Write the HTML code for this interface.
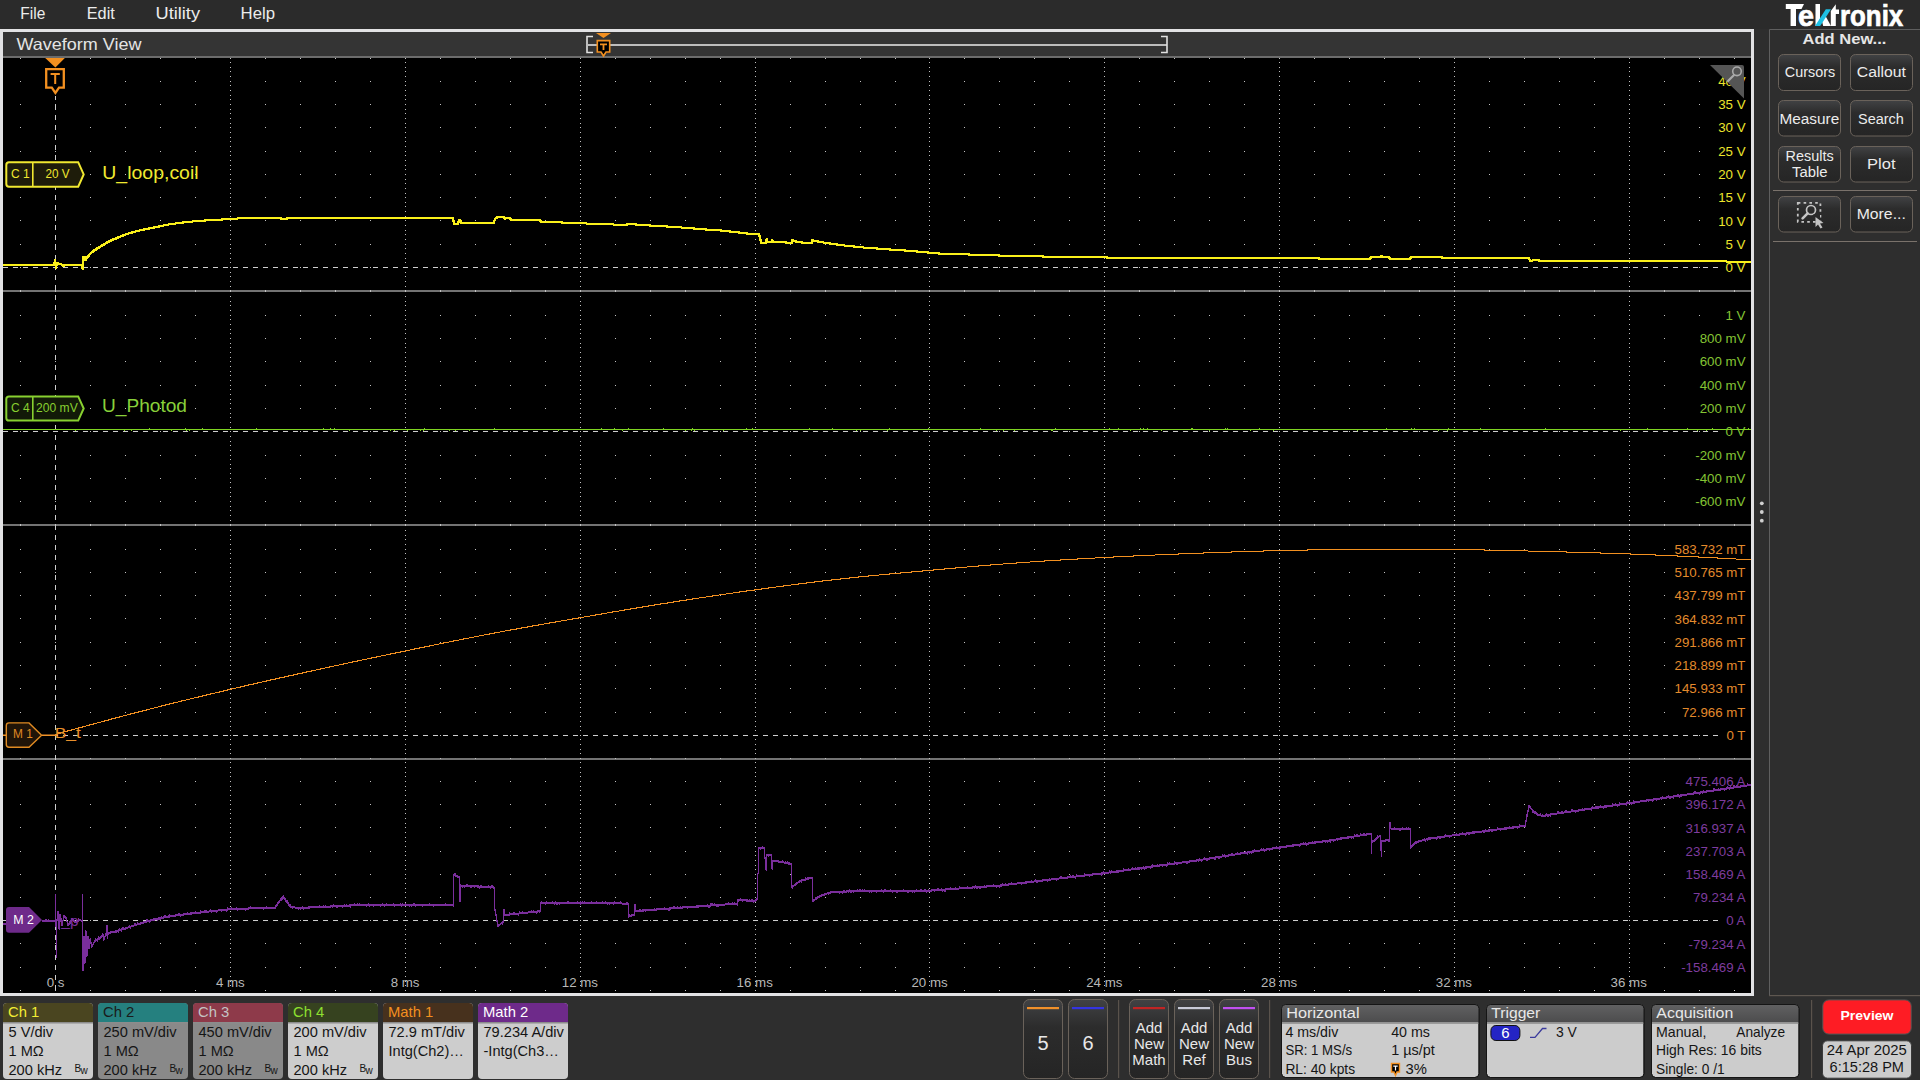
<!DOCTYPE html>
<html><head><meta charset="utf-8"><title>Waveform View</title>
<style>
html,body{margin:0;padding:0;width:1920px;height:1080px;overflow:hidden;background:#2e2e2e;}
svg{display:block;font-family:"Liberation Sans", sans-serif;}
</style></head><body>
<svg width="1920" height="1080" viewBox="0 0 1920 1080">
<rect x="0" y="0" width="1920" height="1080" fill="#2e2e2e"/>
<rect x="0" y="0" width="1920" height="29" fill="#2b2b2b"/>
<text x="20.3" y="19.2" font-size="16.00" fill="#ececec" textLength="25.0" lengthAdjust="spacingAndGlyphs">File</text>
<text x="86.7" y="19.2" font-size="16.00" fill="#ececec" textLength="28.1" lengthAdjust="spacingAndGlyphs">Edit</text>
<text x="155.5" y="19.2" font-size="16.00" fill="#ececec" textLength="44.5" lengthAdjust="spacingAndGlyphs">Utility</text>
<text x="240.6" y="19.2" font-size="16.00" fill="#ececec" textLength="34.4" lengthAdjust="spacingAndGlyphs">Help</text>
<rect x="0" y="29" width="1754" height="967" fill="#e2e2e4"/>
<rect x="3" y="32" width="1748" height="24" fill="#343434"/>
<rect x="3" y="56" width="1748" height="2" fill="#6c6c6c"/>
<rect x="3" y="58" width="1748" height="935" fill="#000"/>
<text x="16.4" y="50.2" font-size="16.50" fill="#e4e4e4" textLength="125.0" lengthAdjust="spacingAndGlyphs">Waveform View</text>
<path d="M593 36.5 H587 V52.5 H593" fill="none" stroke="#e0e0e0" stroke-width="1.6"/>
<rect x="587" y="44" width="580" height="2" fill="#bdbdbd"/>
<path d="M1161 36.5 H1167 V52.5 H1161" fill="none" stroke="#e0e0e0" stroke-width="1.6"/>
<path d="M596 33 L611 33 L603.5 38 Z" fill="#f39020"/>
<path d="M597.3 40.6 H609.7 V52 H606 L603.5 56 L601 52 H597.3 Z" fill="#000" stroke="#f39020" stroke-width="1.6"/>
<path d="M600 43.5 H607 V45.2 H604.4 V50 H602.6 V45.2 H600 Z" fill="#f39020"/>
<rect x="3" y="290" width="1748" height="2" fill="#737373"/>
<rect x="3" y="524" width="1748" height="2" fill="#737373"/>
<rect x="3" y="758" width="1748" height="2" fill="#737373"/>
<path d="M1769.5 996 V29.5 H1920" fill="none" stroke="#5f5f5f" stroke-width="1"/>
<rect x="1769" y="995" width="151" height="1.2" fill="#5e5750"/>
<circle cx="1761.8" cy="503.3" r="1.9" fill="#d0d0d0"/>
<circle cx="1761.8" cy="512.0" r="1.9" fill="#d0d0d0"/>
<circle cx="1761.8" cy="520.7" r="1.9" fill="#d0d0d0"/>
<g fill="#ffffff"><path d="M1785.8 4 H1804 L1801.5 9.1 H1796 V25.9 H1790.6 V9.1 H1785.8 Z"/><path d="M1815.5 4 H1820 V19 L1816.5 25.9 H1815.5 Z"/><path d="M1821.2 18.2 L1824.3 13.8 L1831 25.9 H1823.2 Z"/><path d="M1830.8 11 L1835.8 4.2 V9.4 H1839 V14 H1835.8 V25.9 H1830.8 Z"/></g><path d="M1815 25.9 H1820.2 L1831 9.3 H1825.8 Z" fill="#1ec0e4"/>
<text x="1797.9" y="25.9" font-size="30.00" fill="#ffffff" textLength="16.0" lengthAdjust="spacingAndGlyphs" font-weight="bold" stroke="#fff" stroke-width="0.7">e</text>
<text x="1840.0" y="25.9" font-size="30.00" fill="#ffffff" textLength="63.2" lengthAdjust="spacingAndGlyphs" font-weight="bold" stroke="#fff" stroke-width="0.7">ronix</text>
<text x="1802.6" y="43.5" font-size="15.00" fill="#e6e6e6" textLength="83.8" lengthAdjust="spacingAndGlyphs" font-weight="bold">Add New...</text>
<defs><linearGradient id="bg" x1="0" y1="0" x2="0" y2="1"><stop offset="0" stop-color="#414244"/><stop offset="0.35" stop-color="#2c2c2c"/><stop offset="1" stop-color="#252525"/></linearGradient><linearGradient id="hg" x1="0" y1="0" x2="0" y2="1"><stop offset="0" stop-color="#616162"/><stop offset="1" stop-color="#4c4c4d"/></linearGradient></defs>
<rect x="1778.5" y="54.5" width="62.0" height="36.0" rx="5" fill="url(#bg)" stroke="#6a625a" stroke-width="1"/>
<rect x="1850.5" y="54.5" width="62.0" height="36.0" rx="5" fill="url(#bg)" stroke="#6a625a" stroke-width="1"/>
<rect x="1778.5" y="100.5" width="62.0" height="35.5" rx="5" fill="url(#bg)" stroke="#6a625a" stroke-width="1"/>
<rect x="1850.5" y="100.5" width="62.0" height="35.5" rx="5" fill="url(#bg)" stroke="#6a625a" stroke-width="1"/>
<rect x="1778.5" y="146.5" width="62.0" height="35.5" rx="5" fill="url(#bg)" stroke="#6a625a" stroke-width="1"/>
<rect x="1850.5" y="146.5" width="62.0" height="35.5" rx="5" fill="url(#bg)" stroke="#6a625a" stroke-width="1"/>
<rect x="1778.5" y="196.5" width="62.0" height="35.5" rx="5" fill="url(#bg)" stroke="#6a625a" stroke-width="1"/>
<rect x="1850.5" y="196.5" width="62.0" height="35.5" rx="5" fill="url(#bg)" stroke="#6a625a" stroke-width="1"/>
<text x="1784.8" y="77.0" font-size="15.50" fill="#ececec" textLength="50.4" lengthAdjust="spacingAndGlyphs">Cursors</text>
<text x="1856.8" y="77.0" font-size="15.50" fill="#ececec" textLength="49.0" lengthAdjust="spacingAndGlyphs">Callout</text>
<text x="1779.4" y="123.6" font-size="15.50" fill="#ececec" textLength="59.8" lengthAdjust="spacingAndGlyphs">Measure</text>
<text x="1858.0" y="123.6" font-size="15.50" fill="#ececec" textLength="45.9" lengthAdjust="spacingAndGlyphs">Search</text>
<text x="1785.5" y="161.0" font-size="15.50" fill="#ececec" textLength="48.1" lengthAdjust="spacingAndGlyphs">Results</text>
<text x="1792.0" y="177.0" font-size="15.50" fill="#ececec" textLength="35.5" lengthAdjust="spacingAndGlyphs">Table</text>
<text x="1867.0" y="169.0" font-size="15.50" fill="#ececec" textLength="28.5" lengthAdjust="spacingAndGlyphs">Plot</text>
<text x="1856.7" y="219.4" font-size="15.50" fill="#ececec" textLength="49.1" lengthAdjust="spacingAndGlyphs">More...</text>
<rect x="1773" y="190" width="144" height="1" fill="#7a726b"/>
<rect x="1773" y="241" width="144" height="1" fill="#7a726b"/>
<rect x="1797.8" y="202.8" width="22.6" height="19" fill="none" stroke="#c4c4c4" stroke-width="1.8" stroke-dasharray="2.6 3.2"/>
<circle cx="1811" cy="210" r="4.5" fill="none" stroke="#c4c4c4" stroke-width="1.7"/>
<line x1="1807.6" y1="213.4" x2="1802.6" y2="218.4" stroke="#c4c4c4" stroke-width="2.6" stroke-linecap="round"/>
<rect x="1813" y="214.5" width="7" height="4" fill="#2a2a2a"/>
<path d="M1815.5 217 L1815.5 227 L1818 224.5 L1820.5 228.5 L1822.5 227.5 L1820 223.5 L1823.5 223 Z" fill="#c4c4c4"/>
<path d="M7.0 1003 H89.0 Q93.0 1003 93.0 1007 V1075 Q93.0 1079 89.0 1079 H7.0 Q3.0 1079 3.0 1075 V1007 Q3.0 1003 7.0 1003 Z" fill="#cdcdcd"/><path d="M7.0 1003 H89.0 Q93.0 1003 93.0 1007 V1022 H3.0 V1007 Q3.0 1003 7.0 1003 Z" fill="#4a4520"/><rect x="3.0" y="1022" width="90.0" height="1.5" fill="#8c8c8c"/><text x="8.0" y="1017.0" font-size="14.80" fill="#f2ee34">Ch 1</text><text x="8.5" y="1036.7" font-size="14.60" fill="#151515">5 V/div</text><text x="8.5" y="1055.7" font-size="14.60" fill="#151515">1 MΩ</text><text x="8.5" y="1074.7" font-size="14.60" fill="#151515">200 kHz</text><text x="74.5" y="1072.0" font-size="10.00" fill="#151515">B</text><text x="80.5" y="1074.0" font-size="10.00" fill="#151515">w</text>
<path d="M102.0 1003 H184.0 Q188.0 1003 188.0 1007 V1075 Q188.0 1079 184.0 1079 H102.0 Q98.0 1079 98.0 1075 V1007 Q98.0 1003 102.0 1003 Z" fill="#898989"/><path d="M102.0 1003 H184.0 Q188.0 1003 188.0 1007 V1022 H98.0 V1007 Q98.0 1003 102.0 1003 Z" fill="#25807f"/><rect x="98.0" y="1022" width="90.0" height="1.5" fill="#8c8c8c"/><text x="103.0" y="1017.0" font-size="14.80" fill="#1a1a1a">Ch 2</text><text x="103.5" y="1036.7" font-size="14.60" fill="#151515">250 mV/div</text><text x="103.5" y="1055.7" font-size="14.60" fill="#151515">1 MΩ</text><text x="103.5" y="1074.7" font-size="14.60" fill="#151515">200 kHz</text><text x="169.5" y="1072.0" font-size="10.00" fill="#151515">B</text><text x="175.5" y="1074.0" font-size="10.00" fill="#151515">w</text>
<path d="M197.0 1003 H279.0 Q283.0 1003 283.0 1007 V1075 Q283.0 1079 279.0 1079 H197.0 Q193.0 1079 193.0 1075 V1007 Q193.0 1003 197.0 1003 Z" fill="#898989"/><path d="M197.0 1003 H279.0 Q283.0 1003 283.0 1007 V1022 H193.0 V1007 Q193.0 1003 197.0 1003 Z" fill="#8e3a4a"/><rect x="193.0" y="1022" width="90.0" height="1.5" fill="#8c8c8c"/><text x="198.0" y="1017.0" font-size="14.80" fill="#c4c4c4">Ch 3</text><text x="198.5" y="1036.7" font-size="14.60" fill="#151515">450 mV/div</text><text x="198.5" y="1055.7" font-size="14.60" fill="#151515">1 MΩ</text><text x="198.5" y="1074.7" font-size="14.60" fill="#151515">200 kHz</text><text x="264.5" y="1072.0" font-size="10.00" fill="#151515">B</text><text x="270.5" y="1074.0" font-size="10.00" fill="#151515">w</text>
<path d="M292.0 1003 H374.0 Q378.0 1003 378.0 1007 V1075 Q378.0 1079 374.0 1079 H292.0 Q288.0 1079 288.0 1075 V1007 Q288.0 1003 292.0 1003 Z" fill="#cdcdcd"/><path d="M292.0 1003 H374.0 Q378.0 1003 378.0 1007 V1022 H288.0 V1007 Q288.0 1003 292.0 1003 Z" fill="#36421f"/><rect x="288.0" y="1022" width="90.0" height="1.5" fill="#8c8c8c"/><text x="293.0" y="1017.0" font-size="14.80" fill="#8ee030">Ch 4</text><text x="293.5" y="1036.7" font-size="14.60" fill="#151515">200 mV/div</text><text x="293.5" y="1055.7" font-size="14.60" fill="#151515">1 MΩ</text><text x="293.5" y="1074.7" font-size="14.60" fill="#151515">200 kHz</text><text x="359.5" y="1072.0" font-size="10.00" fill="#151515">B</text><text x="365.5" y="1074.0" font-size="10.00" fill="#151515">w</text>
<path d="M387.0 1003 H469.0 Q473.0 1003 473.0 1007 V1075 Q473.0 1079 469.0 1079 H387.0 Q383.0 1079 383.0 1075 V1007 Q383.0 1003 387.0 1003 Z" fill="#cdcdcd"/><path d="M387.0 1003 H469.0 Q473.0 1003 473.0 1007 V1022 H383.0 V1007 Q383.0 1003 387.0 1003 Z" fill="#47311d"/><rect x="383.0" y="1022" width="90.0" height="1.5" fill="#8c8c8c"/><text x="388.0" y="1017.0" font-size="14.80" fill="#f39020">Math 1</text><text x="388.5" y="1036.7" font-size="14.60" fill="#151515">72.9 mT/div</text><text x="388.5" y="1055.7" font-size="14.60" fill="#151515">Intg(Ch2)…</text>
<path d="M482.0 1003 H564.0 Q568.0 1003 568.0 1007 V1075 Q568.0 1079 564.0 1079 H482.0 Q478.0 1079 478.0 1075 V1007 Q478.0 1003 482.0 1003 Z" fill="#cdcdcd"/><path d="M482.0 1003 H564.0 Q568.0 1003 568.0 1007 V1022 H478.0 V1007 Q478.0 1003 482.0 1003 Z" fill="#6e2a8a"/><rect x="478.0" y="1022" width="90.0" height="1.5" fill="#8c8c8c"/><text x="483.0" y="1017.0" font-size="14.80" fill="#ffffff">Math 2</text><text x="483.5" y="1036.7" font-size="14.60" fill="#151515">79.234 A/div</text><text x="483.5" y="1055.7" font-size="14.60" fill="#151515">-Intg(Ch3…</text>
<rect x="1023.5" y="999.5" width="39.0" height="79" rx="6" fill="url(#bg)" stroke="#6a625a" stroke-width="1"/><rect x="1027.0" y="1007" width="32.0" height="2.2" fill="#f0902a"/>
<text x="1043.0" y="1050.0" font-size="20.00" fill="#e8e8e8" text-anchor="middle">5</text>
<rect x="1068.5" y="999.5" width="39.0" height="79" rx="6" fill="url(#bg)" stroke="#6a625a" stroke-width="1"/><rect x="1072.0" y="1007" width="32.0" height="2.2" fill="#3434e0"/>
<text x="1088.0" y="1050.0" font-size="20.00" fill="#e8e8e8" text-anchor="middle">6</text>
<rect x="1118" y="1000" width="1.2" height="78" fill="#5a534c"/>
<rect x="1129.5" y="999.5" width="39.0" height="79" rx="6" fill="url(#bg)" stroke="#6a625a" stroke-width="1"/><rect x="1133.0" y="1007" width="32.0" height="2.2" fill="#c02424"/>
<text x="1149.0" y="1033.0" font-size="15.00" fill="#e8e8e8" text-anchor="middle">Add</text>
<text x="1149.0" y="1049.0" font-size="15.00" fill="#e8e8e8" text-anchor="middle">New</text>
<text x="1149.0" y="1065.0" font-size="15.00" fill="#e8e8e8" text-anchor="middle">Math</text>
<rect x="1174.5" y="999.5" width="39.0" height="79" rx="6" fill="url(#bg)" stroke="#6a625a" stroke-width="1"/><rect x="1178.0" y="1007" width="32.0" height="2.2" fill="#c8cad8"/>
<text x="1194.0" y="1033.0" font-size="15.00" fill="#e8e8e8" text-anchor="middle">Add</text>
<text x="1194.0" y="1049.0" font-size="15.00" fill="#e8e8e8" text-anchor="middle">New</text>
<text x="1194.0" y="1065.0" font-size="15.00" fill="#e8e8e8" text-anchor="middle">Ref</text>
<rect x="1219.5" y="999.5" width="39.0" height="79" rx="6" fill="url(#bg)" stroke="#6a625a" stroke-width="1"/><rect x="1223.0" y="1007" width="32.0" height="2.2" fill="#c050f0"/>
<text x="1239.0" y="1033.0" font-size="15.00" fill="#e8e8e8" text-anchor="middle">Add</text>
<text x="1239.0" y="1049.0" font-size="15.00" fill="#e8e8e8" text-anchor="middle">New</text>
<text x="1239.0" y="1065.0" font-size="15.00" fill="#e8e8e8" text-anchor="middle">Bus</text>
<rect x="1269" y="1000" width="1.2" height="78" fill="#5a534c"/>
<rect x="1281.5" y="1004.5" width="197.5" height="73.0" rx="4" fill="#cccccc" stroke="#1c1c1c" stroke-width="1"/><path d="M1285.5 1004.5 H1475.0 Q1479.0 1004.5 1479.0 1008.5 V1022.5 H1281.5 V1008.5 Q1281.5 1004.5 1285.5 1004.5 Z" fill="url(#hg)"/><rect x="1281.5" y="1022.5" width="197.5" height="1.5" fill="#9a9a9a"/><rect x="1281.5" y="1004.5" width="197.5" height="73.0" rx="4" fill="none" stroke="#151515" stroke-width="1"/><text x="1286.3" y="1017.8" font-size="15.50" fill="#e8e8e8" textLength="73.2" lengthAdjust="spacingAndGlyphs">Horizontal</text>
<text x="1285.4" y="1036.6" font-size="15.00" fill="#151515" textLength="52.9" lengthAdjust="spacingAndGlyphs">4 ms/div</text>
<text x="1391.2" y="1036.6" font-size="15.00" fill="#151515" textLength="38.8" lengthAdjust="spacingAndGlyphs">40 ms</text>
<text x="1285.4" y="1055.4" font-size="15.00" fill="#151515" textLength="66.8" lengthAdjust="spacingAndGlyphs">SR: 1 MS/s</text>
<text x="1391.2" y="1055.4" font-size="15.00" fill="#151515" textLength="43.6" lengthAdjust="spacingAndGlyphs">1 µs/pt</text>
<text x="1285.4" y="1074.2" font-size="15.00" fill="#151515" textLength="69.7" lengthAdjust="spacingAndGlyphs">RL: 40 kpts</text>
<text x="1405.6" y="1074.2" font-size="15.00" fill="#151515" textLength="21.4" lengthAdjust="spacingAndGlyphs">3%</text>
<path d="M1391.5 1063.5 H1399.5 V1072 H1397 L1395.5 1075.5 L1394 1072 H1391.5 Z" fill="#000" stroke="#f39020" stroke-width="1.4"/>
<path d="M1393.3 1065.5 H1397.7 V1066.8 H1396.1 V1070.5 H1394.9 V1066.8 H1393.3 Z" fill="#fff"/>
<rect x="1486.5" y="1004.5" width="157.5" height="73.0" rx="4" fill="#cccccc" stroke="#1c1c1c" stroke-width="1"/><path d="M1490.5 1004.5 H1640.0 Q1644.0 1004.5 1644.0 1008.5 V1022.5 H1486.5 V1008.5 Q1486.5 1004.5 1490.5 1004.5 Z" fill="url(#hg)"/><rect x="1486.5" y="1022.5" width="157.5" height="1.5" fill="#9a9a9a"/><rect x="1486.5" y="1004.5" width="157.5" height="73.0" rx="4" fill="none" stroke="#151515" stroke-width="1"/><text x="1491.3" y="1017.8" font-size="15.50" fill="#e8e8e8" textLength="49.0" lengthAdjust="spacingAndGlyphs">Trigger</text>
<rect x="1490.9" y="1025.5" width="29" height="15" rx="5" fill="#2424c4" stroke="#111" stroke-width="1"/>
<text x="1505.4" y="1038.3" font-size="15.00" fill="#ffffff" text-anchor="middle">6</text>
<path d="M1530 1037.3 H1535 L1542.5 1028.5 H1546.5" fill="none" stroke="#3a3a9c" stroke-width="1.3"/>
<text x="1556.0" y="1036.6" font-size="15.00" fill="#151515" textLength="20.9" lengthAdjust="spacingAndGlyphs">3 V</text>
<rect x="1651.5" y="1004.5" width="147.5" height="73.0" rx="4" fill="#cccccc" stroke="#1c1c1c" stroke-width="1"/><path d="M1655.5 1004.5 H1795.0 Q1799.0 1004.5 1799.0 1008.5 V1022.5 H1651.5 V1008.5 Q1651.5 1004.5 1655.5 1004.5 Z" fill="url(#hg)"/><rect x="1651.5" y="1022.5" width="147.5" height="1.5" fill="#9a9a9a"/><rect x="1651.5" y="1004.5" width="147.5" height="73.0" rx="4" fill="none" stroke="#151515" stroke-width="1"/><text x="1656.3" y="1017.8" font-size="15.50" fill="#e8e8e8" textLength="77.0" lengthAdjust="spacingAndGlyphs">Acquisition</text>
<text x="1656.0" y="1036.6" font-size="15.00" fill="#151515" textLength="50.4" lengthAdjust="spacingAndGlyphs">Manual,</text>
<text x="1736.3" y="1036.6" font-size="15.00" fill="#151515" textLength="48.8" lengthAdjust="spacingAndGlyphs">Analyze</text>
<text x="1656.0" y="1055.4" font-size="15.00" fill="#151515" textLength="105.8" lengthAdjust="spacingAndGlyphs">High Res: 16 bits</text>
<text x="1656.0" y="1073.8" font-size="15.00" fill="#151515" textLength="68.6" lengthAdjust="spacingAndGlyphs">Single: 0 /1</text>
<rect x="1811" y="1000" width="1.2" height="78" fill="#5a534c"/>
<rect x="1822.8" y="999.9" width="88.4" height="34.2" rx="6" fill="#fe1c24" stroke="#555" stroke-width="1"/>
<text x="1840.5" y="1020.3" font-size="13.70" fill="#ffffff" textLength="53.0" lengthAdjust="spacingAndGlyphs" font-weight="bold">Preview</text>
<rect x="1822.5" y="1040.8" width="89" height="37.4" rx="5" fill="#cccccc" stroke="#3a3a3a" stroke-width="1"/>
<text x="1826.7" y="1054.5" font-size="15.00" fill="#151515" textLength="80.2" lengthAdjust="spacingAndGlyphs">24 Apr 2025</text>
<text x="1829.6" y="1071.6" font-size="15.00" fill="#151515" textLength="74.4" lengthAdjust="spacingAndGlyphs">6:15:28 PM</text>
<defs><clipPath id="gclip"><rect x="3" y="58" width="1748" height="935"/></clipPath></defs>
<g clip-path="url(#gclip)">
<path d="M20 58h1v1h-1zM55 58h1v1h-1zM90 58h1v1h-1zM125 58h1v1h-1zM160 58h1v1h-1zM195 58h1v1h-1zM230 58h1v1h-1zM265 58h1v1h-1zM300 58h1v1h-1zM335 58h1v1h-1zM370 58h1v1h-1zM405 58h1v1h-1zM440 58h1v1h-1zM475 58h1v1h-1zM510 58h1v1h-1zM545 58h1v1h-1zM580 58h1v1h-1zM615 58h1v1h-1zM650 58h1v1h-1zM685 58h1v1h-1zM720 58h1v1h-1zM755 58h1v1h-1zM790 58h1v1h-1zM825 58h1v1h-1zM860 58h1v1h-1zM895 58h1v1h-1zM929 58h1v1h-1zM964 58h1v1h-1zM999 58h1v1h-1zM1034 58h1v1h-1zM1069 58h1v1h-1zM1104 58h1v1h-1zM1139 58h1v1h-1zM1174 58h1v1h-1zM1209 58h1v1h-1zM1244 58h1v1h-1zM1279 58h1v1h-1zM1314 58h1v1h-1zM1349 58h1v1h-1zM1384 58h1v1h-1zM1419 58h1v1h-1zM1454 58h1v1h-1zM1489 58h1v1h-1zM1524 58h1v1h-1zM1559 58h1v1h-1zM1594 58h1v1h-1zM1629 58h1v1h-1zM1664 58h1v1h-1zM1699 58h1v1h-1zM1734 58h1v1h-1zM20 81h1v1h-1zM55 81h1v1h-1zM90 81h1v1h-1zM125 81h1v1h-1zM160 81h1v1h-1zM195 81h1v1h-1zM230 81h1v1h-1zM265 81h1v1h-1zM300 81h1v1h-1zM335 81h1v1h-1zM370 81h1v1h-1zM405 81h1v1h-1zM440 81h1v1h-1zM475 81h1v1h-1zM510 81h1v1h-1zM545 81h1v1h-1zM580 81h1v1h-1zM615 81h1v1h-1zM650 81h1v1h-1zM685 81h1v1h-1zM720 81h1v1h-1zM755 81h1v1h-1zM790 81h1v1h-1zM825 81h1v1h-1zM860 81h1v1h-1zM895 81h1v1h-1zM929 81h1v1h-1zM964 81h1v1h-1zM999 81h1v1h-1zM1034 81h1v1h-1zM1069 81h1v1h-1zM1104 81h1v1h-1zM1139 81h1v1h-1zM1174 81h1v1h-1zM1209 81h1v1h-1zM1244 81h1v1h-1zM1279 81h1v1h-1zM1314 81h1v1h-1zM1349 81h1v1h-1zM1384 81h1v1h-1zM1419 81h1v1h-1zM1454 81h1v1h-1zM1489 81h1v1h-1zM1524 81h1v1h-1zM1559 81h1v1h-1zM1594 81h1v1h-1zM1629 81h1v1h-1zM1664 81h1v1h-1zM1699 81h1v1h-1zM1734 81h1v1h-1zM20 104h1v1h-1zM55 104h1v1h-1zM90 104h1v1h-1zM125 104h1v1h-1zM160 104h1v1h-1zM195 104h1v1h-1zM230 104h1v1h-1zM265 104h1v1h-1zM300 104h1v1h-1zM335 104h1v1h-1zM370 104h1v1h-1zM405 104h1v1h-1zM440 104h1v1h-1zM475 104h1v1h-1zM510 104h1v1h-1zM545 104h1v1h-1zM580 104h1v1h-1zM615 104h1v1h-1zM650 104h1v1h-1zM685 104h1v1h-1zM720 104h1v1h-1zM755 104h1v1h-1zM790 104h1v1h-1zM825 104h1v1h-1zM860 104h1v1h-1zM895 104h1v1h-1zM929 104h1v1h-1zM964 104h1v1h-1zM999 104h1v1h-1zM1034 104h1v1h-1zM1069 104h1v1h-1zM1104 104h1v1h-1zM1139 104h1v1h-1zM1174 104h1v1h-1zM1209 104h1v1h-1zM1244 104h1v1h-1zM1279 104h1v1h-1zM1314 104h1v1h-1zM1349 104h1v1h-1zM1384 104h1v1h-1zM1419 104h1v1h-1zM1454 104h1v1h-1zM1489 104h1v1h-1zM1524 104h1v1h-1zM1559 104h1v1h-1zM1594 104h1v1h-1zM1629 104h1v1h-1zM1664 104h1v1h-1zM1699 104h1v1h-1zM1734 104h1v1h-1zM20 127h1v1h-1zM55 127h1v1h-1zM90 127h1v1h-1zM125 127h1v1h-1zM160 127h1v1h-1zM195 127h1v1h-1zM230 127h1v1h-1zM265 127h1v1h-1zM300 127h1v1h-1zM335 127h1v1h-1zM370 127h1v1h-1zM405 127h1v1h-1zM440 127h1v1h-1zM475 127h1v1h-1zM510 127h1v1h-1zM545 127h1v1h-1zM580 127h1v1h-1zM615 127h1v1h-1zM650 127h1v1h-1zM685 127h1v1h-1zM720 127h1v1h-1zM755 127h1v1h-1zM790 127h1v1h-1zM825 127h1v1h-1zM860 127h1v1h-1zM895 127h1v1h-1zM929 127h1v1h-1zM964 127h1v1h-1zM999 127h1v1h-1zM1034 127h1v1h-1zM1069 127h1v1h-1zM1104 127h1v1h-1zM1139 127h1v1h-1zM1174 127h1v1h-1zM1209 127h1v1h-1zM1244 127h1v1h-1zM1279 127h1v1h-1zM1314 127h1v1h-1zM1349 127h1v1h-1zM1384 127h1v1h-1zM1419 127h1v1h-1zM1454 127h1v1h-1zM1489 127h1v1h-1zM1524 127h1v1h-1zM1559 127h1v1h-1zM1594 127h1v1h-1zM1629 127h1v1h-1zM1664 127h1v1h-1zM1699 127h1v1h-1zM1734 127h1v1h-1zM20 151h1v1h-1zM55 151h1v1h-1zM90 151h1v1h-1zM125 151h1v1h-1zM160 151h1v1h-1zM195 151h1v1h-1zM230 151h1v1h-1zM265 151h1v1h-1zM300 151h1v1h-1zM335 151h1v1h-1zM370 151h1v1h-1zM405 151h1v1h-1zM440 151h1v1h-1zM475 151h1v1h-1zM510 151h1v1h-1zM545 151h1v1h-1zM580 151h1v1h-1zM615 151h1v1h-1zM650 151h1v1h-1zM685 151h1v1h-1zM720 151h1v1h-1zM755 151h1v1h-1zM790 151h1v1h-1zM825 151h1v1h-1zM860 151h1v1h-1zM895 151h1v1h-1zM929 151h1v1h-1zM964 151h1v1h-1zM999 151h1v1h-1zM1034 151h1v1h-1zM1069 151h1v1h-1zM1104 151h1v1h-1zM1139 151h1v1h-1zM1174 151h1v1h-1zM1209 151h1v1h-1zM1244 151h1v1h-1zM1279 151h1v1h-1zM1314 151h1v1h-1zM1349 151h1v1h-1zM1384 151h1v1h-1zM1419 151h1v1h-1zM1454 151h1v1h-1zM1489 151h1v1h-1zM1524 151h1v1h-1zM1559 151h1v1h-1zM1594 151h1v1h-1zM1629 151h1v1h-1zM1664 151h1v1h-1zM1699 151h1v1h-1zM1734 151h1v1h-1zM20 174h1v1h-1zM55 174h1v1h-1zM90 174h1v1h-1zM125 174h1v1h-1zM160 174h1v1h-1zM195 174h1v1h-1zM230 174h1v1h-1zM265 174h1v1h-1zM300 174h1v1h-1zM335 174h1v1h-1zM370 174h1v1h-1zM405 174h1v1h-1zM440 174h1v1h-1zM475 174h1v1h-1zM510 174h1v1h-1zM545 174h1v1h-1zM580 174h1v1h-1zM615 174h1v1h-1zM650 174h1v1h-1zM685 174h1v1h-1zM720 174h1v1h-1zM755 174h1v1h-1zM790 174h1v1h-1zM825 174h1v1h-1zM860 174h1v1h-1zM895 174h1v1h-1zM929 174h1v1h-1zM964 174h1v1h-1zM999 174h1v1h-1zM1034 174h1v1h-1zM1069 174h1v1h-1zM1104 174h1v1h-1zM1139 174h1v1h-1zM1174 174h1v1h-1zM1209 174h1v1h-1zM1244 174h1v1h-1zM1279 174h1v1h-1zM1314 174h1v1h-1zM1349 174h1v1h-1zM1384 174h1v1h-1zM1419 174h1v1h-1zM1454 174h1v1h-1zM1489 174h1v1h-1zM1524 174h1v1h-1zM1559 174h1v1h-1zM1594 174h1v1h-1zM1629 174h1v1h-1zM1664 174h1v1h-1zM1699 174h1v1h-1zM1734 174h1v1h-1zM20 197h1v1h-1zM55 197h1v1h-1zM90 197h1v1h-1zM125 197h1v1h-1zM160 197h1v1h-1zM195 197h1v1h-1zM230 197h1v1h-1zM265 197h1v1h-1zM300 197h1v1h-1zM335 197h1v1h-1zM370 197h1v1h-1zM405 197h1v1h-1zM440 197h1v1h-1zM475 197h1v1h-1zM510 197h1v1h-1zM545 197h1v1h-1zM580 197h1v1h-1zM615 197h1v1h-1zM650 197h1v1h-1zM685 197h1v1h-1zM720 197h1v1h-1zM755 197h1v1h-1zM790 197h1v1h-1zM825 197h1v1h-1zM860 197h1v1h-1zM895 197h1v1h-1zM929 197h1v1h-1zM964 197h1v1h-1zM999 197h1v1h-1zM1034 197h1v1h-1zM1069 197h1v1h-1zM1104 197h1v1h-1zM1139 197h1v1h-1zM1174 197h1v1h-1zM1209 197h1v1h-1zM1244 197h1v1h-1zM1279 197h1v1h-1zM1314 197h1v1h-1zM1349 197h1v1h-1zM1384 197h1v1h-1zM1419 197h1v1h-1zM1454 197h1v1h-1zM1489 197h1v1h-1zM1524 197h1v1h-1zM1559 197h1v1h-1zM1594 197h1v1h-1zM1629 197h1v1h-1zM1664 197h1v1h-1zM1699 197h1v1h-1zM1734 197h1v1h-1zM20 220h1v1h-1zM55 220h1v1h-1zM90 220h1v1h-1zM125 220h1v1h-1zM160 220h1v1h-1zM195 220h1v1h-1zM230 220h1v1h-1zM265 220h1v1h-1zM300 220h1v1h-1zM335 220h1v1h-1zM370 220h1v1h-1zM405 220h1v1h-1zM440 220h1v1h-1zM475 220h1v1h-1zM510 220h1v1h-1zM545 220h1v1h-1zM580 220h1v1h-1zM615 220h1v1h-1zM650 220h1v1h-1zM685 220h1v1h-1zM720 220h1v1h-1zM755 220h1v1h-1zM790 220h1v1h-1zM825 220h1v1h-1zM860 220h1v1h-1zM895 220h1v1h-1zM929 220h1v1h-1zM964 220h1v1h-1zM999 220h1v1h-1zM1034 220h1v1h-1zM1069 220h1v1h-1zM1104 220h1v1h-1zM1139 220h1v1h-1zM1174 220h1v1h-1zM1209 220h1v1h-1zM1244 220h1v1h-1zM1279 220h1v1h-1zM1314 220h1v1h-1zM1349 220h1v1h-1zM1384 220h1v1h-1zM1419 220h1v1h-1zM1454 220h1v1h-1zM1489 220h1v1h-1zM1524 220h1v1h-1zM1559 220h1v1h-1zM1594 220h1v1h-1zM1629 220h1v1h-1zM1664 220h1v1h-1zM1699 220h1v1h-1zM1734 220h1v1h-1zM20 244h1v1h-1zM55 244h1v1h-1zM90 244h1v1h-1zM125 244h1v1h-1zM160 244h1v1h-1zM195 244h1v1h-1zM230 244h1v1h-1zM265 244h1v1h-1zM300 244h1v1h-1zM335 244h1v1h-1zM370 244h1v1h-1zM405 244h1v1h-1zM440 244h1v1h-1zM475 244h1v1h-1zM510 244h1v1h-1zM545 244h1v1h-1zM580 244h1v1h-1zM615 244h1v1h-1zM650 244h1v1h-1zM685 244h1v1h-1zM720 244h1v1h-1zM755 244h1v1h-1zM790 244h1v1h-1zM825 244h1v1h-1zM860 244h1v1h-1zM895 244h1v1h-1zM929 244h1v1h-1zM964 244h1v1h-1zM999 244h1v1h-1zM1034 244h1v1h-1zM1069 244h1v1h-1zM1104 244h1v1h-1zM1139 244h1v1h-1zM1174 244h1v1h-1zM1209 244h1v1h-1zM1244 244h1v1h-1zM1279 244h1v1h-1zM1314 244h1v1h-1zM1349 244h1v1h-1zM1384 244h1v1h-1zM1419 244h1v1h-1zM1454 244h1v1h-1zM1489 244h1v1h-1zM1524 244h1v1h-1zM1559 244h1v1h-1zM1594 244h1v1h-1zM1629 244h1v1h-1zM1664 244h1v1h-1zM1699 244h1v1h-1zM1734 244h1v1h-1zM20 267h1v1h-1zM55 267h1v1h-1zM90 267h1v1h-1zM125 267h1v1h-1zM160 267h1v1h-1zM195 267h1v1h-1zM230 267h1v1h-1zM265 267h1v1h-1zM300 267h1v1h-1zM335 267h1v1h-1zM370 267h1v1h-1zM405 267h1v1h-1zM440 267h1v1h-1zM475 267h1v1h-1zM510 267h1v1h-1zM545 267h1v1h-1zM580 267h1v1h-1zM615 267h1v1h-1zM650 267h1v1h-1zM685 267h1v1h-1zM720 267h1v1h-1zM755 267h1v1h-1zM790 267h1v1h-1zM825 267h1v1h-1zM860 267h1v1h-1zM895 267h1v1h-1zM929 267h1v1h-1zM964 267h1v1h-1zM999 267h1v1h-1zM1034 267h1v1h-1zM1069 267h1v1h-1zM1104 267h1v1h-1zM1139 267h1v1h-1zM1174 267h1v1h-1zM1209 267h1v1h-1zM1244 267h1v1h-1zM1279 267h1v1h-1zM1314 267h1v1h-1zM1349 267h1v1h-1zM1384 267h1v1h-1zM1419 267h1v1h-1zM1454 267h1v1h-1zM1489 267h1v1h-1zM1524 267h1v1h-1zM1559 267h1v1h-1zM1594 267h1v1h-1zM1629 267h1v1h-1zM1664 267h1v1h-1zM1699 267h1v1h-1zM1734 267h1v1h-1zM20 290h1v1h-1zM55 290h1v1h-1zM90 290h1v1h-1zM125 290h1v1h-1zM160 290h1v1h-1zM195 290h1v1h-1zM230 290h1v1h-1zM265 290h1v1h-1zM300 290h1v1h-1zM335 290h1v1h-1zM370 290h1v1h-1zM405 290h1v1h-1zM440 290h1v1h-1zM475 290h1v1h-1zM510 290h1v1h-1zM545 290h1v1h-1zM580 290h1v1h-1zM615 290h1v1h-1zM650 290h1v1h-1zM685 290h1v1h-1zM720 290h1v1h-1zM755 290h1v1h-1zM790 290h1v1h-1zM825 290h1v1h-1zM860 290h1v1h-1zM895 290h1v1h-1zM929 290h1v1h-1zM964 290h1v1h-1zM999 290h1v1h-1zM1034 290h1v1h-1zM1069 290h1v1h-1zM1104 290h1v1h-1zM1139 290h1v1h-1zM1174 290h1v1h-1zM1209 290h1v1h-1zM1244 290h1v1h-1zM1279 290h1v1h-1zM1314 290h1v1h-1zM1349 290h1v1h-1zM1384 290h1v1h-1zM1419 290h1v1h-1zM1454 290h1v1h-1zM1489 290h1v1h-1zM1524 290h1v1h-1zM1559 290h1v1h-1zM1594 290h1v1h-1zM1629 290h1v1h-1zM1664 290h1v1h-1zM1699 290h1v1h-1zM1734 290h1v1h-1zM20 291h1v1h-1zM55 291h1v1h-1zM90 291h1v1h-1zM125 291h1v1h-1zM160 291h1v1h-1zM195 291h1v1h-1zM230 291h1v1h-1zM265 291h1v1h-1zM300 291h1v1h-1zM335 291h1v1h-1zM370 291h1v1h-1zM405 291h1v1h-1zM440 291h1v1h-1zM475 291h1v1h-1zM510 291h1v1h-1zM545 291h1v1h-1zM580 291h1v1h-1zM615 291h1v1h-1zM650 291h1v1h-1zM685 291h1v1h-1zM720 291h1v1h-1zM755 291h1v1h-1zM790 291h1v1h-1zM825 291h1v1h-1zM860 291h1v1h-1zM895 291h1v1h-1zM929 291h1v1h-1zM964 291h1v1h-1zM999 291h1v1h-1zM1034 291h1v1h-1zM1069 291h1v1h-1zM1104 291h1v1h-1zM1139 291h1v1h-1zM1174 291h1v1h-1zM1209 291h1v1h-1zM1244 291h1v1h-1zM1279 291h1v1h-1zM1314 291h1v1h-1zM1349 291h1v1h-1zM1384 291h1v1h-1zM1419 291h1v1h-1zM1454 291h1v1h-1zM1489 291h1v1h-1zM1524 291h1v1h-1zM1559 291h1v1h-1zM1594 291h1v1h-1zM1629 291h1v1h-1zM1664 291h1v1h-1zM1699 291h1v1h-1zM1734 291h1v1h-1zM20 315h1v1h-1zM55 315h1v1h-1zM90 315h1v1h-1zM125 315h1v1h-1zM160 315h1v1h-1zM195 315h1v1h-1zM230 315h1v1h-1zM265 315h1v1h-1zM300 315h1v1h-1zM335 315h1v1h-1zM370 315h1v1h-1zM405 315h1v1h-1zM440 315h1v1h-1zM475 315h1v1h-1zM510 315h1v1h-1zM545 315h1v1h-1zM580 315h1v1h-1zM615 315h1v1h-1zM650 315h1v1h-1zM685 315h1v1h-1zM720 315h1v1h-1zM755 315h1v1h-1zM790 315h1v1h-1zM825 315h1v1h-1zM860 315h1v1h-1zM895 315h1v1h-1zM929 315h1v1h-1zM964 315h1v1h-1zM999 315h1v1h-1zM1034 315h1v1h-1zM1069 315h1v1h-1zM1104 315h1v1h-1zM1139 315h1v1h-1zM1174 315h1v1h-1zM1209 315h1v1h-1zM1244 315h1v1h-1zM1279 315h1v1h-1zM1314 315h1v1h-1zM1349 315h1v1h-1zM1384 315h1v1h-1zM1419 315h1v1h-1zM1454 315h1v1h-1zM1489 315h1v1h-1zM1524 315h1v1h-1zM1559 315h1v1h-1zM1594 315h1v1h-1zM1629 315h1v1h-1zM1664 315h1v1h-1zM1699 315h1v1h-1zM1734 315h1v1h-1zM20 338h1v1h-1zM55 338h1v1h-1zM90 338h1v1h-1zM125 338h1v1h-1zM160 338h1v1h-1zM195 338h1v1h-1zM230 338h1v1h-1zM265 338h1v1h-1zM300 338h1v1h-1zM335 338h1v1h-1zM370 338h1v1h-1zM405 338h1v1h-1zM440 338h1v1h-1zM475 338h1v1h-1zM510 338h1v1h-1zM545 338h1v1h-1zM580 338h1v1h-1zM615 338h1v1h-1zM650 338h1v1h-1zM685 338h1v1h-1zM720 338h1v1h-1zM755 338h1v1h-1zM790 338h1v1h-1zM825 338h1v1h-1zM860 338h1v1h-1zM895 338h1v1h-1zM929 338h1v1h-1zM964 338h1v1h-1zM999 338h1v1h-1zM1034 338h1v1h-1zM1069 338h1v1h-1zM1104 338h1v1h-1zM1139 338h1v1h-1zM1174 338h1v1h-1zM1209 338h1v1h-1zM1244 338h1v1h-1zM1279 338h1v1h-1zM1314 338h1v1h-1zM1349 338h1v1h-1zM1384 338h1v1h-1zM1419 338h1v1h-1zM1454 338h1v1h-1zM1489 338h1v1h-1zM1524 338h1v1h-1zM1559 338h1v1h-1zM1594 338h1v1h-1zM1629 338h1v1h-1zM1664 338h1v1h-1zM1699 338h1v1h-1zM1734 338h1v1h-1zM20 361h1v1h-1zM55 361h1v1h-1zM90 361h1v1h-1zM125 361h1v1h-1zM160 361h1v1h-1zM195 361h1v1h-1zM230 361h1v1h-1zM265 361h1v1h-1zM300 361h1v1h-1zM335 361h1v1h-1zM370 361h1v1h-1zM405 361h1v1h-1zM440 361h1v1h-1zM475 361h1v1h-1zM510 361h1v1h-1zM545 361h1v1h-1zM580 361h1v1h-1zM615 361h1v1h-1zM650 361h1v1h-1zM685 361h1v1h-1zM720 361h1v1h-1zM755 361h1v1h-1zM790 361h1v1h-1zM825 361h1v1h-1zM860 361h1v1h-1zM895 361h1v1h-1zM929 361h1v1h-1zM964 361h1v1h-1zM999 361h1v1h-1zM1034 361h1v1h-1zM1069 361h1v1h-1zM1104 361h1v1h-1zM1139 361h1v1h-1zM1174 361h1v1h-1zM1209 361h1v1h-1zM1244 361h1v1h-1zM1279 361h1v1h-1zM1314 361h1v1h-1zM1349 361h1v1h-1zM1384 361h1v1h-1zM1419 361h1v1h-1zM1454 361h1v1h-1zM1489 361h1v1h-1zM1524 361h1v1h-1zM1559 361h1v1h-1zM1594 361h1v1h-1zM1629 361h1v1h-1zM1664 361h1v1h-1zM1699 361h1v1h-1zM1734 361h1v1h-1zM20 385h1v1h-1zM55 385h1v1h-1zM90 385h1v1h-1zM125 385h1v1h-1zM160 385h1v1h-1zM195 385h1v1h-1zM230 385h1v1h-1zM265 385h1v1h-1zM300 385h1v1h-1zM335 385h1v1h-1zM370 385h1v1h-1zM405 385h1v1h-1zM440 385h1v1h-1zM475 385h1v1h-1zM510 385h1v1h-1zM545 385h1v1h-1zM580 385h1v1h-1zM615 385h1v1h-1zM650 385h1v1h-1zM685 385h1v1h-1zM720 385h1v1h-1zM755 385h1v1h-1zM790 385h1v1h-1zM825 385h1v1h-1zM860 385h1v1h-1zM895 385h1v1h-1zM929 385h1v1h-1zM964 385h1v1h-1zM999 385h1v1h-1zM1034 385h1v1h-1zM1069 385h1v1h-1zM1104 385h1v1h-1zM1139 385h1v1h-1zM1174 385h1v1h-1zM1209 385h1v1h-1zM1244 385h1v1h-1zM1279 385h1v1h-1zM1314 385h1v1h-1zM1349 385h1v1h-1zM1384 385h1v1h-1zM1419 385h1v1h-1zM1454 385h1v1h-1zM1489 385h1v1h-1zM1524 385h1v1h-1zM1559 385h1v1h-1zM1594 385h1v1h-1zM1629 385h1v1h-1zM1664 385h1v1h-1zM1699 385h1v1h-1zM1734 385h1v1h-1zM20 408h1v1h-1zM55 408h1v1h-1zM90 408h1v1h-1zM125 408h1v1h-1zM160 408h1v1h-1zM195 408h1v1h-1zM230 408h1v1h-1zM265 408h1v1h-1zM300 408h1v1h-1zM335 408h1v1h-1zM370 408h1v1h-1zM405 408h1v1h-1zM440 408h1v1h-1zM475 408h1v1h-1zM510 408h1v1h-1zM545 408h1v1h-1zM580 408h1v1h-1zM615 408h1v1h-1zM650 408h1v1h-1zM685 408h1v1h-1zM720 408h1v1h-1zM755 408h1v1h-1zM790 408h1v1h-1zM825 408h1v1h-1zM860 408h1v1h-1zM895 408h1v1h-1zM929 408h1v1h-1zM964 408h1v1h-1zM999 408h1v1h-1zM1034 408h1v1h-1zM1069 408h1v1h-1zM1104 408h1v1h-1zM1139 408h1v1h-1zM1174 408h1v1h-1zM1209 408h1v1h-1zM1244 408h1v1h-1zM1279 408h1v1h-1zM1314 408h1v1h-1zM1349 408h1v1h-1zM1384 408h1v1h-1zM1419 408h1v1h-1zM1454 408h1v1h-1zM1489 408h1v1h-1zM1524 408h1v1h-1zM1559 408h1v1h-1zM1594 408h1v1h-1zM1629 408h1v1h-1zM1664 408h1v1h-1zM1699 408h1v1h-1zM1734 408h1v1h-1zM20 431h1v1h-1zM55 431h1v1h-1zM90 431h1v1h-1zM125 431h1v1h-1zM160 431h1v1h-1zM195 431h1v1h-1zM230 431h1v1h-1zM265 431h1v1h-1zM300 431h1v1h-1zM335 431h1v1h-1zM370 431h1v1h-1zM405 431h1v1h-1zM440 431h1v1h-1zM475 431h1v1h-1zM510 431h1v1h-1zM545 431h1v1h-1zM580 431h1v1h-1zM615 431h1v1h-1zM650 431h1v1h-1zM685 431h1v1h-1zM720 431h1v1h-1zM755 431h1v1h-1zM790 431h1v1h-1zM825 431h1v1h-1zM860 431h1v1h-1zM895 431h1v1h-1zM929 431h1v1h-1zM964 431h1v1h-1zM999 431h1v1h-1zM1034 431h1v1h-1zM1069 431h1v1h-1zM1104 431h1v1h-1zM1139 431h1v1h-1zM1174 431h1v1h-1zM1209 431h1v1h-1zM1244 431h1v1h-1zM1279 431h1v1h-1zM1314 431h1v1h-1zM1349 431h1v1h-1zM1384 431h1v1h-1zM1419 431h1v1h-1zM1454 431h1v1h-1zM1489 431h1v1h-1zM1524 431h1v1h-1zM1559 431h1v1h-1zM1594 431h1v1h-1zM1629 431h1v1h-1zM1664 431h1v1h-1zM1699 431h1v1h-1zM1734 431h1v1h-1zM20 455h1v1h-1zM55 455h1v1h-1zM90 455h1v1h-1zM125 455h1v1h-1zM160 455h1v1h-1zM195 455h1v1h-1zM230 455h1v1h-1zM265 455h1v1h-1zM300 455h1v1h-1zM335 455h1v1h-1zM370 455h1v1h-1zM405 455h1v1h-1zM440 455h1v1h-1zM475 455h1v1h-1zM510 455h1v1h-1zM545 455h1v1h-1zM580 455h1v1h-1zM615 455h1v1h-1zM650 455h1v1h-1zM685 455h1v1h-1zM720 455h1v1h-1zM755 455h1v1h-1zM790 455h1v1h-1zM825 455h1v1h-1zM860 455h1v1h-1zM895 455h1v1h-1zM929 455h1v1h-1zM964 455h1v1h-1zM999 455h1v1h-1zM1034 455h1v1h-1zM1069 455h1v1h-1zM1104 455h1v1h-1zM1139 455h1v1h-1zM1174 455h1v1h-1zM1209 455h1v1h-1zM1244 455h1v1h-1zM1279 455h1v1h-1zM1314 455h1v1h-1zM1349 455h1v1h-1zM1384 455h1v1h-1zM1419 455h1v1h-1zM1454 455h1v1h-1zM1489 455h1v1h-1zM1524 455h1v1h-1zM1559 455h1v1h-1zM1594 455h1v1h-1zM1629 455h1v1h-1zM1664 455h1v1h-1zM1699 455h1v1h-1zM1734 455h1v1h-1zM20 478h1v1h-1zM55 478h1v1h-1zM90 478h1v1h-1zM125 478h1v1h-1zM160 478h1v1h-1zM195 478h1v1h-1zM230 478h1v1h-1zM265 478h1v1h-1zM300 478h1v1h-1zM335 478h1v1h-1zM370 478h1v1h-1zM405 478h1v1h-1zM440 478h1v1h-1zM475 478h1v1h-1zM510 478h1v1h-1zM545 478h1v1h-1zM580 478h1v1h-1zM615 478h1v1h-1zM650 478h1v1h-1zM685 478h1v1h-1zM720 478h1v1h-1zM755 478h1v1h-1zM790 478h1v1h-1zM825 478h1v1h-1zM860 478h1v1h-1zM895 478h1v1h-1zM929 478h1v1h-1zM964 478h1v1h-1zM999 478h1v1h-1zM1034 478h1v1h-1zM1069 478h1v1h-1zM1104 478h1v1h-1zM1139 478h1v1h-1zM1174 478h1v1h-1zM1209 478h1v1h-1zM1244 478h1v1h-1zM1279 478h1v1h-1zM1314 478h1v1h-1zM1349 478h1v1h-1zM1384 478h1v1h-1zM1419 478h1v1h-1zM1454 478h1v1h-1zM1489 478h1v1h-1zM1524 478h1v1h-1zM1559 478h1v1h-1zM1594 478h1v1h-1zM1629 478h1v1h-1zM1664 478h1v1h-1zM1699 478h1v1h-1zM1734 478h1v1h-1zM20 501h1v1h-1zM55 501h1v1h-1zM90 501h1v1h-1zM125 501h1v1h-1zM160 501h1v1h-1zM195 501h1v1h-1zM230 501h1v1h-1zM265 501h1v1h-1zM300 501h1v1h-1zM335 501h1v1h-1zM370 501h1v1h-1zM405 501h1v1h-1zM440 501h1v1h-1zM475 501h1v1h-1zM510 501h1v1h-1zM545 501h1v1h-1zM580 501h1v1h-1zM615 501h1v1h-1zM650 501h1v1h-1zM685 501h1v1h-1zM720 501h1v1h-1zM755 501h1v1h-1zM790 501h1v1h-1zM825 501h1v1h-1zM860 501h1v1h-1zM895 501h1v1h-1zM929 501h1v1h-1zM964 501h1v1h-1zM999 501h1v1h-1zM1034 501h1v1h-1zM1069 501h1v1h-1zM1104 501h1v1h-1zM1139 501h1v1h-1zM1174 501h1v1h-1zM1209 501h1v1h-1zM1244 501h1v1h-1zM1279 501h1v1h-1zM1314 501h1v1h-1zM1349 501h1v1h-1zM1384 501h1v1h-1zM1419 501h1v1h-1zM1454 501h1v1h-1zM1489 501h1v1h-1zM1524 501h1v1h-1zM1559 501h1v1h-1zM1594 501h1v1h-1zM1629 501h1v1h-1zM1664 501h1v1h-1zM1699 501h1v1h-1zM1734 501h1v1h-1zM20 524h1v1h-1zM55 524h1v1h-1zM90 524h1v1h-1zM125 524h1v1h-1zM160 524h1v1h-1zM195 524h1v1h-1zM230 524h1v1h-1zM265 524h1v1h-1zM300 524h1v1h-1zM335 524h1v1h-1zM370 524h1v1h-1zM405 524h1v1h-1zM440 524h1v1h-1zM475 524h1v1h-1zM510 524h1v1h-1zM545 524h1v1h-1zM580 524h1v1h-1zM615 524h1v1h-1zM650 524h1v1h-1zM685 524h1v1h-1zM720 524h1v1h-1zM755 524h1v1h-1zM790 524h1v1h-1zM825 524h1v1h-1zM860 524h1v1h-1zM895 524h1v1h-1zM929 524h1v1h-1zM964 524h1v1h-1zM999 524h1v1h-1zM1034 524h1v1h-1zM1069 524h1v1h-1zM1104 524h1v1h-1zM1139 524h1v1h-1zM1174 524h1v1h-1zM1209 524h1v1h-1zM1244 524h1v1h-1zM1279 524h1v1h-1zM1314 524h1v1h-1zM1349 524h1v1h-1zM1384 524h1v1h-1zM1419 524h1v1h-1zM1454 524h1v1h-1zM1489 524h1v1h-1zM1524 524h1v1h-1zM1559 524h1v1h-1zM1594 524h1v1h-1zM1629 524h1v1h-1zM1664 524h1v1h-1zM1699 524h1v1h-1zM1734 524h1v1h-1zM20 525h1v1h-1zM55 525h1v1h-1zM90 525h1v1h-1zM125 525h1v1h-1zM160 525h1v1h-1zM195 525h1v1h-1zM230 525h1v1h-1zM265 525h1v1h-1zM300 525h1v1h-1zM335 525h1v1h-1zM370 525h1v1h-1zM405 525h1v1h-1zM440 525h1v1h-1zM475 525h1v1h-1zM510 525h1v1h-1zM545 525h1v1h-1zM580 525h1v1h-1zM615 525h1v1h-1zM650 525h1v1h-1zM685 525h1v1h-1zM720 525h1v1h-1zM755 525h1v1h-1zM790 525h1v1h-1zM825 525h1v1h-1zM860 525h1v1h-1zM895 525h1v1h-1zM929 525h1v1h-1zM964 525h1v1h-1zM999 525h1v1h-1zM1034 525h1v1h-1zM1069 525h1v1h-1zM1104 525h1v1h-1zM1139 525h1v1h-1zM1174 525h1v1h-1zM1209 525h1v1h-1zM1244 525h1v1h-1zM1279 525h1v1h-1zM1314 525h1v1h-1zM1349 525h1v1h-1zM1384 525h1v1h-1zM1419 525h1v1h-1zM1454 525h1v1h-1zM1489 525h1v1h-1zM1524 525h1v1h-1zM1559 525h1v1h-1zM1594 525h1v1h-1zM1629 525h1v1h-1zM1664 525h1v1h-1zM1699 525h1v1h-1zM1734 525h1v1h-1zM20 549h1v1h-1zM55 549h1v1h-1zM90 549h1v1h-1zM125 549h1v1h-1zM160 549h1v1h-1zM195 549h1v1h-1zM230 549h1v1h-1zM265 549h1v1h-1zM300 549h1v1h-1zM335 549h1v1h-1zM370 549h1v1h-1zM405 549h1v1h-1zM440 549h1v1h-1zM475 549h1v1h-1zM510 549h1v1h-1zM545 549h1v1h-1zM580 549h1v1h-1zM615 549h1v1h-1zM650 549h1v1h-1zM685 549h1v1h-1zM720 549h1v1h-1zM755 549h1v1h-1zM790 549h1v1h-1zM825 549h1v1h-1zM860 549h1v1h-1zM895 549h1v1h-1zM929 549h1v1h-1zM964 549h1v1h-1zM999 549h1v1h-1zM1034 549h1v1h-1zM1069 549h1v1h-1zM1104 549h1v1h-1zM1139 549h1v1h-1zM1174 549h1v1h-1zM1209 549h1v1h-1zM1244 549h1v1h-1zM1279 549h1v1h-1zM1314 549h1v1h-1zM1349 549h1v1h-1zM1384 549h1v1h-1zM1419 549h1v1h-1zM1454 549h1v1h-1zM1489 549h1v1h-1zM1524 549h1v1h-1zM1559 549h1v1h-1zM1594 549h1v1h-1zM1629 549h1v1h-1zM1664 549h1v1h-1zM1699 549h1v1h-1zM1734 549h1v1h-1zM20 572h1v1h-1zM55 572h1v1h-1zM90 572h1v1h-1zM125 572h1v1h-1zM160 572h1v1h-1zM195 572h1v1h-1zM230 572h1v1h-1zM265 572h1v1h-1zM300 572h1v1h-1zM335 572h1v1h-1zM370 572h1v1h-1zM405 572h1v1h-1zM440 572h1v1h-1zM475 572h1v1h-1zM510 572h1v1h-1zM545 572h1v1h-1zM580 572h1v1h-1zM615 572h1v1h-1zM650 572h1v1h-1zM685 572h1v1h-1zM720 572h1v1h-1zM755 572h1v1h-1zM790 572h1v1h-1zM825 572h1v1h-1zM860 572h1v1h-1zM895 572h1v1h-1zM929 572h1v1h-1zM964 572h1v1h-1zM999 572h1v1h-1zM1034 572h1v1h-1zM1069 572h1v1h-1zM1104 572h1v1h-1zM1139 572h1v1h-1zM1174 572h1v1h-1zM1209 572h1v1h-1zM1244 572h1v1h-1zM1279 572h1v1h-1zM1314 572h1v1h-1zM1349 572h1v1h-1zM1384 572h1v1h-1zM1419 572h1v1h-1zM1454 572h1v1h-1zM1489 572h1v1h-1zM1524 572h1v1h-1zM1559 572h1v1h-1zM1594 572h1v1h-1zM1629 572h1v1h-1zM1664 572h1v1h-1zM1699 572h1v1h-1zM1734 572h1v1h-1zM20 595h1v1h-1zM55 595h1v1h-1zM90 595h1v1h-1zM125 595h1v1h-1zM160 595h1v1h-1zM195 595h1v1h-1zM230 595h1v1h-1zM265 595h1v1h-1zM300 595h1v1h-1zM335 595h1v1h-1zM370 595h1v1h-1zM405 595h1v1h-1zM440 595h1v1h-1zM475 595h1v1h-1zM510 595h1v1h-1zM545 595h1v1h-1zM580 595h1v1h-1zM615 595h1v1h-1zM650 595h1v1h-1zM685 595h1v1h-1zM720 595h1v1h-1zM755 595h1v1h-1zM790 595h1v1h-1zM825 595h1v1h-1zM860 595h1v1h-1zM895 595h1v1h-1zM929 595h1v1h-1zM964 595h1v1h-1zM999 595h1v1h-1zM1034 595h1v1h-1zM1069 595h1v1h-1zM1104 595h1v1h-1zM1139 595h1v1h-1zM1174 595h1v1h-1zM1209 595h1v1h-1zM1244 595h1v1h-1zM1279 595h1v1h-1zM1314 595h1v1h-1zM1349 595h1v1h-1zM1384 595h1v1h-1zM1419 595h1v1h-1zM1454 595h1v1h-1zM1489 595h1v1h-1zM1524 595h1v1h-1zM1559 595h1v1h-1zM1594 595h1v1h-1zM1629 595h1v1h-1zM1664 595h1v1h-1zM1699 595h1v1h-1zM1734 595h1v1h-1zM20 618h1v1h-1zM55 618h1v1h-1zM90 618h1v1h-1zM125 618h1v1h-1zM160 618h1v1h-1zM195 618h1v1h-1zM230 618h1v1h-1zM265 618h1v1h-1zM300 618h1v1h-1zM335 618h1v1h-1zM370 618h1v1h-1zM405 618h1v1h-1zM440 618h1v1h-1zM475 618h1v1h-1zM510 618h1v1h-1zM545 618h1v1h-1zM580 618h1v1h-1zM615 618h1v1h-1zM650 618h1v1h-1zM685 618h1v1h-1zM720 618h1v1h-1zM755 618h1v1h-1zM790 618h1v1h-1zM825 618h1v1h-1zM860 618h1v1h-1zM895 618h1v1h-1zM929 618h1v1h-1zM964 618h1v1h-1zM999 618h1v1h-1zM1034 618h1v1h-1zM1069 618h1v1h-1zM1104 618h1v1h-1zM1139 618h1v1h-1zM1174 618h1v1h-1zM1209 618h1v1h-1zM1244 618h1v1h-1zM1279 618h1v1h-1zM1314 618h1v1h-1zM1349 618h1v1h-1zM1384 618h1v1h-1zM1419 618h1v1h-1zM1454 618h1v1h-1zM1489 618h1v1h-1zM1524 618h1v1h-1zM1559 618h1v1h-1zM1594 618h1v1h-1zM1629 618h1v1h-1zM1664 618h1v1h-1zM1699 618h1v1h-1zM1734 618h1v1h-1zM20 642h1v1h-1zM55 642h1v1h-1zM90 642h1v1h-1zM125 642h1v1h-1zM160 642h1v1h-1zM195 642h1v1h-1zM230 642h1v1h-1zM265 642h1v1h-1zM300 642h1v1h-1zM335 642h1v1h-1zM370 642h1v1h-1zM405 642h1v1h-1zM440 642h1v1h-1zM475 642h1v1h-1zM510 642h1v1h-1zM545 642h1v1h-1zM580 642h1v1h-1zM615 642h1v1h-1zM650 642h1v1h-1zM685 642h1v1h-1zM720 642h1v1h-1zM755 642h1v1h-1zM790 642h1v1h-1zM825 642h1v1h-1zM860 642h1v1h-1zM895 642h1v1h-1zM929 642h1v1h-1zM964 642h1v1h-1zM999 642h1v1h-1zM1034 642h1v1h-1zM1069 642h1v1h-1zM1104 642h1v1h-1zM1139 642h1v1h-1zM1174 642h1v1h-1zM1209 642h1v1h-1zM1244 642h1v1h-1zM1279 642h1v1h-1zM1314 642h1v1h-1zM1349 642h1v1h-1zM1384 642h1v1h-1zM1419 642h1v1h-1zM1454 642h1v1h-1zM1489 642h1v1h-1zM1524 642h1v1h-1zM1559 642h1v1h-1zM1594 642h1v1h-1zM1629 642h1v1h-1zM1664 642h1v1h-1zM1699 642h1v1h-1zM1734 642h1v1h-1zM20 665h1v1h-1zM55 665h1v1h-1zM90 665h1v1h-1zM125 665h1v1h-1zM160 665h1v1h-1zM195 665h1v1h-1zM230 665h1v1h-1zM265 665h1v1h-1zM300 665h1v1h-1zM335 665h1v1h-1zM370 665h1v1h-1zM405 665h1v1h-1zM440 665h1v1h-1zM475 665h1v1h-1zM510 665h1v1h-1zM545 665h1v1h-1zM580 665h1v1h-1zM615 665h1v1h-1zM650 665h1v1h-1zM685 665h1v1h-1zM720 665h1v1h-1zM755 665h1v1h-1zM790 665h1v1h-1zM825 665h1v1h-1zM860 665h1v1h-1zM895 665h1v1h-1zM929 665h1v1h-1zM964 665h1v1h-1zM999 665h1v1h-1zM1034 665h1v1h-1zM1069 665h1v1h-1zM1104 665h1v1h-1zM1139 665h1v1h-1zM1174 665h1v1h-1zM1209 665h1v1h-1zM1244 665h1v1h-1zM1279 665h1v1h-1zM1314 665h1v1h-1zM1349 665h1v1h-1zM1384 665h1v1h-1zM1419 665h1v1h-1zM1454 665h1v1h-1zM1489 665h1v1h-1zM1524 665h1v1h-1zM1559 665h1v1h-1zM1594 665h1v1h-1zM1629 665h1v1h-1zM1664 665h1v1h-1zM1699 665h1v1h-1zM1734 665h1v1h-1zM20 688h1v1h-1zM55 688h1v1h-1zM90 688h1v1h-1zM125 688h1v1h-1zM160 688h1v1h-1zM195 688h1v1h-1zM230 688h1v1h-1zM265 688h1v1h-1zM300 688h1v1h-1zM335 688h1v1h-1zM370 688h1v1h-1zM405 688h1v1h-1zM440 688h1v1h-1zM475 688h1v1h-1zM510 688h1v1h-1zM545 688h1v1h-1zM580 688h1v1h-1zM615 688h1v1h-1zM650 688h1v1h-1zM685 688h1v1h-1zM720 688h1v1h-1zM755 688h1v1h-1zM790 688h1v1h-1zM825 688h1v1h-1zM860 688h1v1h-1zM895 688h1v1h-1zM929 688h1v1h-1zM964 688h1v1h-1zM999 688h1v1h-1zM1034 688h1v1h-1zM1069 688h1v1h-1zM1104 688h1v1h-1zM1139 688h1v1h-1zM1174 688h1v1h-1zM1209 688h1v1h-1zM1244 688h1v1h-1zM1279 688h1v1h-1zM1314 688h1v1h-1zM1349 688h1v1h-1zM1384 688h1v1h-1zM1419 688h1v1h-1zM1454 688h1v1h-1zM1489 688h1v1h-1zM1524 688h1v1h-1zM1559 688h1v1h-1zM1594 688h1v1h-1zM1629 688h1v1h-1zM1664 688h1v1h-1zM1699 688h1v1h-1zM1734 688h1v1h-1zM20 712h1v1h-1zM55 712h1v1h-1zM90 712h1v1h-1zM125 712h1v1h-1zM160 712h1v1h-1zM195 712h1v1h-1zM230 712h1v1h-1zM265 712h1v1h-1zM300 712h1v1h-1zM335 712h1v1h-1zM370 712h1v1h-1zM405 712h1v1h-1zM440 712h1v1h-1zM475 712h1v1h-1zM510 712h1v1h-1zM545 712h1v1h-1zM580 712h1v1h-1zM615 712h1v1h-1zM650 712h1v1h-1zM685 712h1v1h-1zM720 712h1v1h-1zM755 712h1v1h-1zM790 712h1v1h-1zM825 712h1v1h-1zM860 712h1v1h-1zM895 712h1v1h-1zM929 712h1v1h-1zM964 712h1v1h-1zM999 712h1v1h-1zM1034 712h1v1h-1zM1069 712h1v1h-1zM1104 712h1v1h-1zM1139 712h1v1h-1zM1174 712h1v1h-1zM1209 712h1v1h-1zM1244 712h1v1h-1zM1279 712h1v1h-1zM1314 712h1v1h-1zM1349 712h1v1h-1zM1384 712h1v1h-1zM1419 712h1v1h-1zM1454 712h1v1h-1zM1489 712h1v1h-1zM1524 712h1v1h-1zM1559 712h1v1h-1zM1594 712h1v1h-1zM1629 712h1v1h-1zM1664 712h1v1h-1zM1699 712h1v1h-1zM1734 712h1v1h-1zM20 735h1v1h-1zM55 735h1v1h-1zM90 735h1v1h-1zM125 735h1v1h-1zM160 735h1v1h-1zM195 735h1v1h-1zM230 735h1v1h-1zM265 735h1v1h-1zM300 735h1v1h-1zM335 735h1v1h-1zM370 735h1v1h-1zM405 735h1v1h-1zM440 735h1v1h-1zM475 735h1v1h-1zM510 735h1v1h-1zM545 735h1v1h-1zM580 735h1v1h-1zM615 735h1v1h-1zM650 735h1v1h-1zM685 735h1v1h-1zM720 735h1v1h-1zM755 735h1v1h-1zM790 735h1v1h-1zM825 735h1v1h-1zM860 735h1v1h-1zM895 735h1v1h-1zM929 735h1v1h-1zM964 735h1v1h-1zM999 735h1v1h-1zM1034 735h1v1h-1zM1069 735h1v1h-1zM1104 735h1v1h-1zM1139 735h1v1h-1zM1174 735h1v1h-1zM1209 735h1v1h-1zM1244 735h1v1h-1zM1279 735h1v1h-1zM1314 735h1v1h-1zM1349 735h1v1h-1zM1384 735h1v1h-1zM1419 735h1v1h-1zM1454 735h1v1h-1zM1489 735h1v1h-1zM1524 735h1v1h-1zM1559 735h1v1h-1zM1594 735h1v1h-1zM1629 735h1v1h-1zM1664 735h1v1h-1zM1699 735h1v1h-1zM1734 735h1v1h-1zM20 758h1v1h-1zM55 758h1v1h-1zM90 758h1v1h-1zM125 758h1v1h-1zM160 758h1v1h-1zM195 758h1v1h-1zM230 758h1v1h-1zM265 758h1v1h-1zM300 758h1v1h-1zM335 758h1v1h-1zM370 758h1v1h-1zM405 758h1v1h-1zM440 758h1v1h-1zM475 758h1v1h-1zM510 758h1v1h-1zM545 758h1v1h-1zM580 758h1v1h-1zM615 758h1v1h-1zM650 758h1v1h-1zM685 758h1v1h-1zM720 758h1v1h-1zM755 758h1v1h-1zM790 758h1v1h-1zM825 758h1v1h-1zM860 758h1v1h-1zM895 758h1v1h-1zM929 758h1v1h-1zM964 758h1v1h-1zM999 758h1v1h-1zM1034 758h1v1h-1zM1069 758h1v1h-1zM1104 758h1v1h-1zM1139 758h1v1h-1zM1174 758h1v1h-1zM1209 758h1v1h-1zM1244 758h1v1h-1zM1279 758h1v1h-1zM1314 758h1v1h-1zM1349 758h1v1h-1zM1384 758h1v1h-1zM1419 758h1v1h-1zM1454 758h1v1h-1zM1489 758h1v1h-1zM1524 758h1v1h-1zM1559 758h1v1h-1zM1594 758h1v1h-1zM1629 758h1v1h-1zM1664 758h1v1h-1zM1699 758h1v1h-1zM1734 758h1v1h-1zM20 758h1v1h-1zM55 758h1v1h-1zM90 758h1v1h-1zM125 758h1v1h-1zM160 758h1v1h-1zM195 758h1v1h-1zM230 758h1v1h-1zM265 758h1v1h-1zM300 758h1v1h-1zM335 758h1v1h-1zM370 758h1v1h-1zM405 758h1v1h-1zM440 758h1v1h-1zM475 758h1v1h-1zM510 758h1v1h-1zM545 758h1v1h-1zM580 758h1v1h-1zM615 758h1v1h-1zM650 758h1v1h-1zM685 758h1v1h-1zM720 758h1v1h-1zM755 758h1v1h-1zM790 758h1v1h-1zM825 758h1v1h-1zM860 758h1v1h-1zM895 758h1v1h-1zM929 758h1v1h-1zM964 758h1v1h-1zM999 758h1v1h-1zM1034 758h1v1h-1zM1069 758h1v1h-1zM1104 758h1v1h-1zM1139 758h1v1h-1zM1174 758h1v1h-1zM1209 758h1v1h-1zM1244 758h1v1h-1zM1279 758h1v1h-1zM1314 758h1v1h-1zM1349 758h1v1h-1zM1384 758h1v1h-1zM1419 758h1v1h-1zM1454 758h1v1h-1zM1489 758h1v1h-1zM1524 758h1v1h-1zM1559 758h1v1h-1zM1594 758h1v1h-1zM1629 758h1v1h-1zM1664 758h1v1h-1zM1699 758h1v1h-1zM1734 758h1v1h-1zM20 781h1v1h-1zM55 781h1v1h-1zM90 781h1v1h-1zM125 781h1v1h-1zM160 781h1v1h-1zM195 781h1v1h-1zM230 781h1v1h-1zM265 781h1v1h-1zM300 781h1v1h-1zM335 781h1v1h-1zM370 781h1v1h-1zM405 781h1v1h-1zM440 781h1v1h-1zM475 781h1v1h-1zM510 781h1v1h-1zM545 781h1v1h-1zM580 781h1v1h-1zM615 781h1v1h-1zM650 781h1v1h-1zM685 781h1v1h-1zM720 781h1v1h-1zM755 781h1v1h-1zM790 781h1v1h-1zM825 781h1v1h-1zM860 781h1v1h-1zM895 781h1v1h-1zM929 781h1v1h-1zM964 781h1v1h-1zM999 781h1v1h-1zM1034 781h1v1h-1zM1069 781h1v1h-1zM1104 781h1v1h-1zM1139 781h1v1h-1zM1174 781h1v1h-1zM1209 781h1v1h-1zM1244 781h1v1h-1zM1279 781h1v1h-1zM1314 781h1v1h-1zM1349 781h1v1h-1zM1384 781h1v1h-1zM1419 781h1v1h-1zM1454 781h1v1h-1zM1489 781h1v1h-1zM1524 781h1v1h-1zM1559 781h1v1h-1zM1594 781h1v1h-1zM1629 781h1v1h-1zM1664 781h1v1h-1zM1699 781h1v1h-1zM1734 781h1v1h-1zM20 804h1v1h-1zM55 804h1v1h-1zM90 804h1v1h-1zM125 804h1v1h-1zM160 804h1v1h-1zM195 804h1v1h-1zM230 804h1v1h-1zM265 804h1v1h-1zM300 804h1v1h-1zM335 804h1v1h-1zM370 804h1v1h-1zM405 804h1v1h-1zM440 804h1v1h-1zM475 804h1v1h-1zM510 804h1v1h-1zM545 804h1v1h-1zM580 804h1v1h-1zM615 804h1v1h-1zM650 804h1v1h-1zM685 804h1v1h-1zM720 804h1v1h-1zM755 804h1v1h-1zM790 804h1v1h-1zM825 804h1v1h-1zM860 804h1v1h-1zM895 804h1v1h-1zM929 804h1v1h-1zM964 804h1v1h-1zM999 804h1v1h-1zM1034 804h1v1h-1zM1069 804h1v1h-1zM1104 804h1v1h-1zM1139 804h1v1h-1zM1174 804h1v1h-1zM1209 804h1v1h-1zM1244 804h1v1h-1zM1279 804h1v1h-1zM1314 804h1v1h-1zM1349 804h1v1h-1zM1384 804h1v1h-1zM1419 804h1v1h-1zM1454 804h1v1h-1zM1489 804h1v1h-1zM1524 804h1v1h-1zM1559 804h1v1h-1zM1594 804h1v1h-1zM1629 804h1v1h-1zM1664 804h1v1h-1zM1699 804h1v1h-1zM1734 804h1v1h-1zM20 827h1v1h-1zM55 827h1v1h-1zM90 827h1v1h-1zM125 827h1v1h-1zM160 827h1v1h-1zM195 827h1v1h-1zM230 827h1v1h-1zM265 827h1v1h-1zM300 827h1v1h-1zM335 827h1v1h-1zM370 827h1v1h-1zM405 827h1v1h-1zM440 827h1v1h-1zM475 827h1v1h-1zM510 827h1v1h-1zM545 827h1v1h-1zM580 827h1v1h-1zM615 827h1v1h-1zM650 827h1v1h-1zM685 827h1v1h-1zM720 827h1v1h-1zM755 827h1v1h-1zM790 827h1v1h-1zM825 827h1v1h-1zM860 827h1v1h-1zM895 827h1v1h-1zM929 827h1v1h-1zM964 827h1v1h-1zM999 827h1v1h-1zM1034 827h1v1h-1zM1069 827h1v1h-1zM1104 827h1v1h-1zM1139 827h1v1h-1zM1174 827h1v1h-1zM1209 827h1v1h-1zM1244 827h1v1h-1zM1279 827h1v1h-1zM1314 827h1v1h-1zM1349 827h1v1h-1zM1384 827h1v1h-1zM1419 827h1v1h-1zM1454 827h1v1h-1zM1489 827h1v1h-1zM1524 827h1v1h-1zM1559 827h1v1h-1zM1594 827h1v1h-1zM1629 827h1v1h-1zM1664 827h1v1h-1zM1699 827h1v1h-1zM1734 827h1v1h-1zM20 851h1v1h-1zM55 851h1v1h-1zM90 851h1v1h-1zM125 851h1v1h-1zM160 851h1v1h-1zM195 851h1v1h-1zM230 851h1v1h-1zM265 851h1v1h-1zM300 851h1v1h-1zM335 851h1v1h-1zM370 851h1v1h-1zM405 851h1v1h-1zM440 851h1v1h-1zM475 851h1v1h-1zM510 851h1v1h-1zM545 851h1v1h-1zM580 851h1v1h-1zM615 851h1v1h-1zM650 851h1v1h-1zM685 851h1v1h-1zM720 851h1v1h-1zM755 851h1v1h-1zM790 851h1v1h-1zM825 851h1v1h-1zM860 851h1v1h-1zM895 851h1v1h-1zM929 851h1v1h-1zM964 851h1v1h-1zM999 851h1v1h-1zM1034 851h1v1h-1zM1069 851h1v1h-1zM1104 851h1v1h-1zM1139 851h1v1h-1zM1174 851h1v1h-1zM1209 851h1v1h-1zM1244 851h1v1h-1zM1279 851h1v1h-1zM1314 851h1v1h-1zM1349 851h1v1h-1zM1384 851h1v1h-1zM1419 851h1v1h-1zM1454 851h1v1h-1zM1489 851h1v1h-1zM1524 851h1v1h-1zM1559 851h1v1h-1zM1594 851h1v1h-1zM1629 851h1v1h-1zM1664 851h1v1h-1zM1699 851h1v1h-1zM1734 851h1v1h-1zM20 874h1v1h-1zM55 874h1v1h-1zM90 874h1v1h-1zM125 874h1v1h-1zM160 874h1v1h-1zM195 874h1v1h-1zM230 874h1v1h-1zM265 874h1v1h-1zM300 874h1v1h-1zM335 874h1v1h-1zM370 874h1v1h-1zM405 874h1v1h-1zM440 874h1v1h-1zM475 874h1v1h-1zM510 874h1v1h-1zM545 874h1v1h-1zM580 874h1v1h-1zM615 874h1v1h-1zM650 874h1v1h-1zM685 874h1v1h-1zM720 874h1v1h-1zM755 874h1v1h-1zM790 874h1v1h-1zM825 874h1v1h-1zM860 874h1v1h-1zM895 874h1v1h-1zM929 874h1v1h-1zM964 874h1v1h-1zM999 874h1v1h-1zM1034 874h1v1h-1zM1069 874h1v1h-1zM1104 874h1v1h-1zM1139 874h1v1h-1zM1174 874h1v1h-1zM1209 874h1v1h-1zM1244 874h1v1h-1zM1279 874h1v1h-1zM1314 874h1v1h-1zM1349 874h1v1h-1zM1384 874h1v1h-1zM1419 874h1v1h-1zM1454 874h1v1h-1zM1489 874h1v1h-1zM1524 874h1v1h-1zM1559 874h1v1h-1zM1594 874h1v1h-1zM1629 874h1v1h-1zM1664 874h1v1h-1zM1699 874h1v1h-1zM1734 874h1v1h-1zM20 897h1v1h-1zM55 897h1v1h-1zM90 897h1v1h-1zM125 897h1v1h-1zM160 897h1v1h-1zM195 897h1v1h-1zM230 897h1v1h-1zM265 897h1v1h-1zM300 897h1v1h-1zM335 897h1v1h-1zM370 897h1v1h-1zM405 897h1v1h-1zM440 897h1v1h-1zM475 897h1v1h-1zM510 897h1v1h-1zM545 897h1v1h-1zM580 897h1v1h-1zM615 897h1v1h-1zM650 897h1v1h-1zM685 897h1v1h-1zM720 897h1v1h-1zM755 897h1v1h-1zM790 897h1v1h-1zM825 897h1v1h-1zM860 897h1v1h-1zM895 897h1v1h-1zM929 897h1v1h-1zM964 897h1v1h-1zM999 897h1v1h-1zM1034 897h1v1h-1zM1069 897h1v1h-1zM1104 897h1v1h-1zM1139 897h1v1h-1zM1174 897h1v1h-1zM1209 897h1v1h-1zM1244 897h1v1h-1zM1279 897h1v1h-1zM1314 897h1v1h-1zM1349 897h1v1h-1zM1384 897h1v1h-1zM1419 897h1v1h-1zM1454 897h1v1h-1zM1489 897h1v1h-1zM1524 897h1v1h-1zM1559 897h1v1h-1zM1594 897h1v1h-1zM1629 897h1v1h-1zM1664 897h1v1h-1zM1699 897h1v1h-1zM1734 897h1v1h-1zM20 920h1v1h-1zM55 920h1v1h-1zM90 920h1v1h-1zM125 920h1v1h-1zM160 920h1v1h-1zM195 920h1v1h-1zM230 920h1v1h-1zM265 920h1v1h-1zM300 920h1v1h-1zM335 920h1v1h-1zM370 920h1v1h-1zM405 920h1v1h-1zM440 920h1v1h-1zM475 920h1v1h-1zM510 920h1v1h-1zM545 920h1v1h-1zM580 920h1v1h-1zM615 920h1v1h-1zM650 920h1v1h-1zM685 920h1v1h-1zM720 920h1v1h-1zM755 920h1v1h-1zM790 920h1v1h-1zM825 920h1v1h-1zM860 920h1v1h-1zM895 920h1v1h-1zM929 920h1v1h-1zM964 920h1v1h-1zM999 920h1v1h-1zM1034 920h1v1h-1zM1069 920h1v1h-1zM1104 920h1v1h-1zM1139 920h1v1h-1zM1174 920h1v1h-1zM1209 920h1v1h-1zM1244 920h1v1h-1zM1279 920h1v1h-1zM1314 920h1v1h-1zM1349 920h1v1h-1zM1384 920h1v1h-1zM1419 920h1v1h-1zM1454 920h1v1h-1zM1489 920h1v1h-1zM1524 920h1v1h-1zM1559 920h1v1h-1zM1594 920h1v1h-1zM1629 920h1v1h-1zM1664 920h1v1h-1zM1699 920h1v1h-1zM1734 920h1v1h-1zM20 943h1v1h-1zM55 943h1v1h-1zM90 943h1v1h-1zM125 943h1v1h-1zM160 943h1v1h-1zM195 943h1v1h-1zM230 943h1v1h-1zM265 943h1v1h-1zM300 943h1v1h-1zM335 943h1v1h-1zM370 943h1v1h-1zM405 943h1v1h-1zM440 943h1v1h-1zM475 943h1v1h-1zM510 943h1v1h-1zM545 943h1v1h-1zM580 943h1v1h-1zM615 943h1v1h-1zM650 943h1v1h-1zM685 943h1v1h-1zM720 943h1v1h-1zM755 943h1v1h-1zM790 943h1v1h-1zM825 943h1v1h-1zM860 943h1v1h-1zM895 943h1v1h-1zM929 943h1v1h-1zM964 943h1v1h-1zM999 943h1v1h-1zM1034 943h1v1h-1zM1069 943h1v1h-1zM1104 943h1v1h-1zM1139 943h1v1h-1zM1174 943h1v1h-1zM1209 943h1v1h-1zM1244 943h1v1h-1zM1279 943h1v1h-1zM1314 943h1v1h-1zM1349 943h1v1h-1zM1384 943h1v1h-1zM1419 943h1v1h-1zM1454 943h1v1h-1zM1489 943h1v1h-1zM1524 943h1v1h-1zM1559 943h1v1h-1zM1594 943h1v1h-1zM1629 943h1v1h-1zM1664 943h1v1h-1zM1699 943h1v1h-1zM1734 943h1v1h-1zM20 967h1v1h-1zM55 967h1v1h-1zM90 967h1v1h-1zM125 967h1v1h-1zM160 967h1v1h-1zM195 967h1v1h-1zM230 967h1v1h-1zM265 967h1v1h-1zM300 967h1v1h-1zM335 967h1v1h-1zM370 967h1v1h-1zM405 967h1v1h-1zM440 967h1v1h-1zM475 967h1v1h-1zM510 967h1v1h-1zM545 967h1v1h-1zM580 967h1v1h-1zM615 967h1v1h-1zM650 967h1v1h-1zM685 967h1v1h-1zM720 967h1v1h-1zM755 967h1v1h-1zM790 967h1v1h-1zM825 967h1v1h-1zM860 967h1v1h-1zM895 967h1v1h-1zM929 967h1v1h-1zM964 967h1v1h-1zM999 967h1v1h-1zM1034 967h1v1h-1zM1069 967h1v1h-1zM1104 967h1v1h-1zM1139 967h1v1h-1zM1174 967h1v1h-1zM1209 967h1v1h-1zM1244 967h1v1h-1zM1279 967h1v1h-1zM1314 967h1v1h-1zM1349 967h1v1h-1zM1384 967h1v1h-1zM1419 967h1v1h-1zM1454 967h1v1h-1zM1489 967h1v1h-1zM1524 967h1v1h-1zM1559 967h1v1h-1zM1594 967h1v1h-1zM1629 967h1v1h-1zM1664 967h1v1h-1zM1699 967h1v1h-1zM1734 967h1v1h-1zM20 990h1v1h-1zM55 990h1v1h-1zM90 990h1v1h-1zM125 990h1v1h-1zM160 990h1v1h-1zM195 990h1v1h-1zM230 990h1v1h-1zM265 990h1v1h-1zM300 990h1v1h-1zM335 990h1v1h-1zM370 990h1v1h-1zM405 990h1v1h-1zM440 990h1v1h-1zM475 990h1v1h-1zM510 990h1v1h-1zM545 990h1v1h-1zM580 990h1v1h-1zM615 990h1v1h-1zM650 990h1v1h-1zM685 990h1v1h-1zM720 990h1v1h-1zM755 990h1v1h-1zM790 990h1v1h-1zM825 990h1v1h-1zM860 990h1v1h-1zM895 990h1v1h-1zM929 990h1v1h-1zM964 990h1v1h-1zM999 990h1v1h-1zM1034 990h1v1h-1zM1069 990h1v1h-1zM1104 990h1v1h-1zM1139 990h1v1h-1zM1174 990h1v1h-1zM1209 990h1v1h-1zM1244 990h1v1h-1zM1279 990h1v1h-1zM1314 990h1v1h-1zM1349 990h1v1h-1zM1384 990h1v1h-1zM1419 990h1v1h-1zM1454 990h1v1h-1zM1489 990h1v1h-1zM1524 990h1v1h-1zM1559 990h1v1h-1zM1594 990h1v1h-1zM1629 990h1v1h-1zM1664 990h1v1h-1zM1699 990h1v1h-1zM1734 990h1v1h-1z" fill="#c2c2c2"/>
<path d="M230 58h1v1h-1zM230 62h1v1h-1zM230 67h1v1h-1zM230 71h1v1h-1zM230 76h1v1h-1zM230 81h1v1h-1zM230 85h1v1h-1zM230 90h1v1h-1zM230 95h1v1h-1zM230 99h1v1h-1zM230 104h1v1h-1zM230 109h1v1h-1zM230 113h1v1h-1zM230 118h1v1h-1zM230 123h1v1h-1zM230 127h1v1h-1zM230 132h1v1h-1zM230 137h1v1h-1zM230 141h1v1h-1zM230 146h1v1h-1zM230 151h1v1h-1zM230 155h1v1h-1zM230 160h1v1h-1zM230 165h1v1h-1zM230 169h1v1h-1zM230 174h1v1h-1zM230 179h1v1h-1zM230 183h1v1h-1zM230 188h1v1h-1zM230 193h1v1h-1zM230 197h1v1h-1zM230 202h1v1h-1zM230 206h1v1h-1zM230 211h1v1h-1zM230 216h1v1h-1zM230 220h1v1h-1zM230 225h1v1h-1zM230 230h1v1h-1zM230 234h1v1h-1zM230 239h1v1h-1zM230 244h1v1h-1zM230 248h1v1h-1zM230 253h1v1h-1zM230 258h1v1h-1zM230 262h1v1h-1zM230 267h1v1h-1zM230 272h1v1h-1zM230 276h1v1h-1zM230 281h1v1h-1zM230 286h1v1h-1zM230 291h1v1h-1zM230 296h1v1h-1zM230 301h1v1h-1zM230 305h1v1h-1zM230 310h1v1h-1zM230 315h1v1h-1zM230 319h1v1h-1zM230 324h1v1h-1zM230 329h1v1h-1zM230 333h1v1h-1zM230 338h1v1h-1zM230 343h1v1h-1zM230 347h1v1h-1zM230 352h1v1h-1zM230 357h1v1h-1zM230 361h1v1h-1zM230 366h1v1h-1zM230 371h1v1h-1zM230 375h1v1h-1zM230 380h1v1h-1zM230 385h1v1h-1zM230 389h1v1h-1zM230 394h1v1h-1zM230 399h1v1h-1zM230 403h1v1h-1zM230 408h1v1h-1zM230 413h1v1h-1zM230 417h1v1h-1zM230 422h1v1h-1zM230 427h1v1h-1zM230 431h1v1h-1zM230 436h1v1h-1zM230 441h1v1h-1zM230 445h1v1h-1zM230 450h1v1h-1zM230 455h1v1h-1zM230 459h1v1h-1zM230 464h1v1h-1zM230 468h1v1h-1zM230 473h1v1h-1zM230 478h1v1h-1zM230 482h1v1h-1zM230 487h1v1h-1zM230 492h1v1h-1zM230 496h1v1h-1zM230 501h1v1h-1zM230 506h1v1h-1zM230 510h1v1h-1zM230 515h1v1h-1zM230 520h1v1h-1zM230 525h1v1h-1zM230 530h1v1h-1zM230 535h1v1h-1zM230 539h1v1h-1zM230 544h1v1h-1zM230 549h1v1h-1zM230 553h1v1h-1zM230 558h1v1h-1zM230 563h1v1h-1zM230 567h1v1h-1zM230 572h1v1h-1zM230 577h1v1h-1zM230 581h1v1h-1zM230 586h1v1h-1zM230 591h1v1h-1zM230 595h1v1h-1zM230 600h1v1h-1zM230 605h1v1h-1zM230 609h1v1h-1zM230 614h1v1h-1zM230 618h1v1h-1zM230 623h1v1h-1zM230 628h1v1h-1zM230 632h1v1h-1zM230 637h1v1h-1zM230 642h1v1h-1zM230 646h1v1h-1zM230 651h1v1h-1zM230 656h1v1h-1zM230 660h1v1h-1zM230 665h1v1h-1zM230 670h1v1h-1zM230 674h1v1h-1zM230 679h1v1h-1zM230 684h1v1h-1zM230 688h1v1h-1zM230 693h1v1h-1zM230 698h1v1h-1zM230 702h1v1h-1zM230 707h1v1h-1zM230 712h1v1h-1zM230 716h1v1h-1zM230 721h1v1h-1zM230 726h1v1h-1zM230 730h1v1h-1zM230 735h1v1h-1zM230 739h1v1h-1zM230 744h1v1h-1zM230 749h1v1h-1zM230 753h1v1h-1zM230 758h1v1h-1zM230 762h1v1h-1zM230 767h1v1h-1zM230 772h1v1h-1zM230 776h1v1h-1zM230 781h1v1h-1zM230 786h1v1h-1zM230 790h1v1h-1zM230 795h1v1h-1zM230 800h1v1h-1zM230 804h1v1h-1zM230 809h1v1h-1zM230 813h1v1h-1zM230 818h1v1h-1zM230 823h1v1h-1zM230 827h1v1h-1zM230 832h1v1h-1zM230 837h1v1h-1zM230 841h1v1h-1zM230 846h1v1h-1zM230 851h1v1h-1zM230 855h1v1h-1zM230 860h1v1h-1zM230 865h1v1h-1zM230 869h1v1h-1zM230 874h1v1h-1zM230 878h1v1h-1zM230 883h1v1h-1zM230 888h1v1h-1zM230 892h1v1h-1zM230 897h1v1h-1zM230 902h1v1h-1zM230 906h1v1h-1zM230 911h1v1h-1zM230 916h1v1h-1zM230 920h1v1h-1zM230 925h1v1h-1zM230 929h1v1h-1zM230 934h1v1h-1zM230 939h1v1h-1zM230 943h1v1h-1zM230 948h1v1h-1zM230 953h1v1h-1zM230 957h1v1h-1zM230 962h1v1h-1zM230 967h1v1h-1zM230 971h1v1h-1zM230 976h1v1h-1zM230 981h1v1h-1zM230 985h1v1h-1zM405 58h1v1h-1zM405 62h1v1h-1zM405 67h1v1h-1zM405 71h1v1h-1zM405 76h1v1h-1zM405 81h1v1h-1zM405 85h1v1h-1zM405 90h1v1h-1zM405 95h1v1h-1zM405 99h1v1h-1zM405 104h1v1h-1zM405 109h1v1h-1zM405 113h1v1h-1zM405 118h1v1h-1zM405 123h1v1h-1zM405 127h1v1h-1zM405 132h1v1h-1zM405 137h1v1h-1zM405 141h1v1h-1zM405 146h1v1h-1zM405 151h1v1h-1zM405 155h1v1h-1zM405 160h1v1h-1zM405 165h1v1h-1zM405 169h1v1h-1zM405 174h1v1h-1zM405 179h1v1h-1zM405 183h1v1h-1zM405 188h1v1h-1zM405 193h1v1h-1zM405 197h1v1h-1zM405 202h1v1h-1zM405 206h1v1h-1zM405 211h1v1h-1zM405 216h1v1h-1zM405 220h1v1h-1zM405 225h1v1h-1zM405 230h1v1h-1zM405 234h1v1h-1zM405 239h1v1h-1zM405 244h1v1h-1zM405 248h1v1h-1zM405 253h1v1h-1zM405 258h1v1h-1zM405 262h1v1h-1zM405 267h1v1h-1zM405 272h1v1h-1zM405 276h1v1h-1zM405 281h1v1h-1zM405 286h1v1h-1zM405 291h1v1h-1zM405 296h1v1h-1zM405 301h1v1h-1zM405 305h1v1h-1zM405 310h1v1h-1zM405 315h1v1h-1zM405 319h1v1h-1zM405 324h1v1h-1zM405 329h1v1h-1zM405 333h1v1h-1zM405 338h1v1h-1zM405 343h1v1h-1zM405 347h1v1h-1zM405 352h1v1h-1zM405 357h1v1h-1zM405 361h1v1h-1zM405 366h1v1h-1zM405 371h1v1h-1zM405 375h1v1h-1zM405 380h1v1h-1zM405 385h1v1h-1zM405 389h1v1h-1zM405 394h1v1h-1zM405 399h1v1h-1zM405 403h1v1h-1zM405 408h1v1h-1zM405 413h1v1h-1zM405 417h1v1h-1zM405 422h1v1h-1zM405 427h1v1h-1zM405 431h1v1h-1zM405 436h1v1h-1zM405 441h1v1h-1zM405 445h1v1h-1zM405 450h1v1h-1zM405 455h1v1h-1zM405 459h1v1h-1zM405 464h1v1h-1zM405 468h1v1h-1zM405 473h1v1h-1zM405 478h1v1h-1zM405 482h1v1h-1zM405 487h1v1h-1zM405 492h1v1h-1zM405 496h1v1h-1zM405 501h1v1h-1zM405 506h1v1h-1zM405 510h1v1h-1zM405 515h1v1h-1zM405 520h1v1h-1zM405 525h1v1h-1zM405 530h1v1h-1zM405 535h1v1h-1zM405 539h1v1h-1zM405 544h1v1h-1zM405 549h1v1h-1zM405 553h1v1h-1zM405 558h1v1h-1zM405 563h1v1h-1zM405 567h1v1h-1zM405 572h1v1h-1zM405 577h1v1h-1zM405 581h1v1h-1zM405 586h1v1h-1zM405 591h1v1h-1zM405 595h1v1h-1zM405 600h1v1h-1zM405 605h1v1h-1zM405 609h1v1h-1zM405 614h1v1h-1zM405 618h1v1h-1zM405 623h1v1h-1zM405 628h1v1h-1zM405 632h1v1h-1zM405 637h1v1h-1zM405 642h1v1h-1zM405 646h1v1h-1zM405 651h1v1h-1zM405 656h1v1h-1zM405 660h1v1h-1zM405 665h1v1h-1zM405 670h1v1h-1zM405 674h1v1h-1zM405 679h1v1h-1zM405 684h1v1h-1zM405 688h1v1h-1zM405 693h1v1h-1zM405 698h1v1h-1zM405 702h1v1h-1zM405 707h1v1h-1zM405 712h1v1h-1zM405 716h1v1h-1zM405 721h1v1h-1zM405 726h1v1h-1zM405 730h1v1h-1zM405 735h1v1h-1zM405 739h1v1h-1zM405 744h1v1h-1zM405 749h1v1h-1zM405 753h1v1h-1zM405 758h1v1h-1zM405 762h1v1h-1zM405 767h1v1h-1zM405 772h1v1h-1zM405 776h1v1h-1zM405 781h1v1h-1zM405 786h1v1h-1zM405 790h1v1h-1zM405 795h1v1h-1zM405 800h1v1h-1zM405 804h1v1h-1zM405 809h1v1h-1zM405 813h1v1h-1zM405 818h1v1h-1zM405 823h1v1h-1zM405 827h1v1h-1zM405 832h1v1h-1zM405 837h1v1h-1zM405 841h1v1h-1zM405 846h1v1h-1zM405 851h1v1h-1zM405 855h1v1h-1zM405 860h1v1h-1zM405 865h1v1h-1zM405 869h1v1h-1zM405 874h1v1h-1zM405 878h1v1h-1zM405 883h1v1h-1zM405 888h1v1h-1zM405 892h1v1h-1zM405 897h1v1h-1zM405 902h1v1h-1zM405 906h1v1h-1zM405 911h1v1h-1zM405 916h1v1h-1zM405 920h1v1h-1zM405 925h1v1h-1zM405 929h1v1h-1zM405 934h1v1h-1zM405 939h1v1h-1zM405 943h1v1h-1zM405 948h1v1h-1zM405 953h1v1h-1zM405 957h1v1h-1zM405 962h1v1h-1zM405 967h1v1h-1zM405 971h1v1h-1zM405 976h1v1h-1zM405 981h1v1h-1zM405 985h1v1h-1zM580 58h1v1h-1zM580 62h1v1h-1zM580 67h1v1h-1zM580 71h1v1h-1zM580 76h1v1h-1zM580 81h1v1h-1zM580 85h1v1h-1zM580 90h1v1h-1zM580 95h1v1h-1zM580 99h1v1h-1zM580 104h1v1h-1zM580 109h1v1h-1zM580 113h1v1h-1zM580 118h1v1h-1zM580 123h1v1h-1zM580 127h1v1h-1zM580 132h1v1h-1zM580 137h1v1h-1zM580 141h1v1h-1zM580 146h1v1h-1zM580 151h1v1h-1zM580 155h1v1h-1zM580 160h1v1h-1zM580 165h1v1h-1zM580 169h1v1h-1zM580 174h1v1h-1zM580 179h1v1h-1zM580 183h1v1h-1zM580 188h1v1h-1zM580 193h1v1h-1zM580 197h1v1h-1zM580 202h1v1h-1zM580 206h1v1h-1zM580 211h1v1h-1zM580 216h1v1h-1zM580 220h1v1h-1zM580 225h1v1h-1zM580 230h1v1h-1zM580 234h1v1h-1zM580 239h1v1h-1zM580 244h1v1h-1zM580 248h1v1h-1zM580 253h1v1h-1zM580 258h1v1h-1zM580 262h1v1h-1zM580 267h1v1h-1zM580 272h1v1h-1zM580 276h1v1h-1zM580 281h1v1h-1zM580 286h1v1h-1zM580 291h1v1h-1zM580 296h1v1h-1zM580 301h1v1h-1zM580 305h1v1h-1zM580 310h1v1h-1zM580 315h1v1h-1zM580 319h1v1h-1zM580 324h1v1h-1zM580 329h1v1h-1zM580 333h1v1h-1zM580 338h1v1h-1zM580 343h1v1h-1zM580 347h1v1h-1zM580 352h1v1h-1zM580 357h1v1h-1zM580 361h1v1h-1zM580 366h1v1h-1zM580 371h1v1h-1zM580 375h1v1h-1zM580 380h1v1h-1zM580 385h1v1h-1zM580 389h1v1h-1zM580 394h1v1h-1zM580 399h1v1h-1zM580 403h1v1h-1zM580 408h1v1h-1zM580 413h1v1h-1zM580 417h1v1h-1zM580 422h1v1h-1zM580 427h1v1h-1zM580 431h1v1h-1zM580 436h1v1h-1zM580 441h1v1h-1zM580 445h1v1h-1zM580 450h1v1h-1zM580 455h1v1h-1zM580 459h1v1h-1zM580 464h1v1h-1zM580 468h1v1h-1zM580 473h1v1h-1zM580 478h1v1h-1zM580 482h1v1h-1zM580 487h1v1h-1zM580 492h1v1h-1zM580 496h1v1h-1zM580 501h1v1h-1zM580 506h1v1h-1zM580 510h1v1h-1zM580 515h1v1h-1zM580 520h1v1h-1zM580 525h1v1h-1zM580 530h1v1h-1zM580 535h1v1h-1zM580 539h1v1h-1zM580 544h1v1h-1zM580 549h1v1h-1zM580 553h1v1h-1zM580 558h1v1h-1zM580 563h1v1h-1zM580 567h1v1h-1zM580 572h1v1h-1zM580 577h1v1h-1zM580 581h1v1h-1zM580 586h1v1h-1zM580 591h1v1h-1zM580 595h1v1h-1zM580 600h1v1h-1zM580 605h1v1h-1zM580 609h1v1h-1zM580 614h1v1h-1zM580 618h1v1h-1zM580 623h1v1h-1zM580 628h1v1h-1zM580 632h1v1h-1zM580 637h1v1h-1zM580 642h1v1h-1zM580 646h1v1h-1zM580 651h1v1h-1zM580 656h1v1h-1zM580 660h1v1h-1zM580 665h1v1h-1zM580 670h1v1h-1zM580 674h1v1h-1zM580 679h1v1h-1zM580 684h1v1h-1zM580 688h1v1h-1zM580 693h1v1h-1zM580 698h1v1h-1zM580 702h1v1h-1zM580 707h1v1h-1zM580 712h1v1h-1zM580 716h1v1h-1zM580 721h1v1h-1zM580 726h1v1h-1zM580 730h1v1h-1zM580 735h1v1h-1zM580 739h1v1h-1zM580 744h1v1h-1zM580 749h1v1h-1zM580 753h1v1h-1zM580 758h1v1h-1zM580 762h1v1h-1zM580 767h1v1h-1zM580 772h1v1h-1zM580 776h1v1h-1zM580 781h1v1h-1zM580 786h1v1h-1zM580 790h1v1h-1zM580 795h1v1h-1zM580 800h1v1h-1zM580 804h1v1h-1zM580 809h1v1h-1zM580 813h1v1h-1zM580 818h1v1h-1zM580 823h1v1h-1zM580 827h1v1h-1zM580 832h1v1h-1zM580 837h1v1h-1zM580 841h1v1h-1zM580 846h1v1h-1zM580 851h1v1h-1zM580 855h1v1h-1zM580 860h1v1h-1zM580 865h1v1h-1zM580 869h1v1h-1zM580 874h1v1h-1zM580 878h1v1h-1zM580 883h1v1h-1zM580 888h1v1h-1zM580 892h1v1h-1zM580 897h1v1h-1zM580 902h1v1h-1zM580 906h1v1h-1zM580 911h1v1h-1zM580 916h1v1h-1zM580 920h1v1h-1zM580 925h1v1h-1zM580 929h1v1h-1zM580 934h1v1h-1zM580 939h1v1h-1zM580 943h1v1h-1zM580 948h1v1h-1zM580 953h1v1h-1zM580 957h1v1h-1zM580 962h1v1h-1zM580 967h1v1h-1zM580 971h1v1h-1zM580 976h1v1h-1zM580 981h1v1h-1zM580 985h1v1h-1zM755 58h1v1h-1zM755 62h1v1h-1zM755 67h1v1h-1zM755 71h1v1h-1zM755 76h1v1h-1zM755 81h1v1h-1zM755 85h1v1h-1zM755 90h1v1h-1zM755 95h1v1h-1zM755 99h1v1h-1zM755 104h1v1h-1zM755 109h1v1h-1zM755 113h1v1h-1zM755 118h1v1h-1zM755 123h1v1h-1zM755 127h1v1h-1zM755 132h1v1h-1zM755 137h1v1h-1zM755 141h1v1h-1zM755 146h1v1h-1zM755 151h1v1h-1zM755 155h1v1h-1zM755 160h1v1h-1zM755 165h1v1h-1zM755 169h1v1h-1zM755 174h1v1h-1zM755 179h1v1h-1zM755 183h1v1h-1zM755 188h1v1h-1zM755 193h1v1h-1zM755 197h1v1h-1zM755 202h1v1h-1zM755 206h1v1h-1zM755 211h1v1h-1zM755 216h1v1h-1zM755 220h1v1h-1zM755 225h1v1h-1zM755 230h1v1h-1zM755 234h1v1h-1zM755 239h1v1h-1zM755 244h1v1h-1zM755 248h1v1h-1zM755 253h1v1h-1zM755 258h1v1h-1zM755 262h1v1h-1zM755 267h1v1h-1zM755 272h1v1h-1zM755 276h1v1h-1zM755 281h1v1h-1zM755 286h1v1h-1zM755 291h1v1h-1zM755 296h1v1h-1zM755 301h1v1h-1zM755 305h1v1h-1zM755 310h1v1h-1zM755 315h1v1h-1zM755 319h1v1h-1zM755 324h1v1h-1zM755 329h1v1h-1zM755 333h1v1h-1zM755 338h1v1h-1zM755 343h1v1h-1zM755 347h1v1h-1zM755 352h1v1h-1zM755 357h1v1h-1zM755 361h1v1h-1zM755 366h1v1h-1zM755 371h1v1h-1zM755 375h1v1h-1zM755 380h1v1h-1zM755 385h1v1h-1zM755 389h1v1h-1zM755 394h1v1h-1zM755 399h1v1h-1zM755 403h1v1h-1zM755 408h1v1h-1zM755 413h1v1h-1zM755 417h1v1h-1zM755 422h1v1h-1zM755 427h1v1h-1zM755 431h1v1h-1zM755 436h1v1h-1zM755 441h1v1h-1zM755 445h1v1h-1zM755 450h1v1h-1zM755 455h1v1h-1zM755 459h1v1h-1zM755 464h1v1h-1zM755 468h1v1h-1zM755 473h1v1h-1zM755 478h1v1h-1zM755 482h1v1h-1zM755 487h1v1h-1zM755 492h1v1h-1zM755 496h1v1h-1zM755 501h1v1h-1zM755 506h1v1h-1zM755 510h1v1h-1zM755 515h1v1h-1zM755 520h1v1h-1zM755 525h1v1h-1zM755 530h1v1h-1zM755 535h1v1h-1zM755 539h1v1h-1zM755 544h1v1h-1zM755 549h1v1h-1zM755 553h1v1h-1zM755 558h1v1h-1zM755 563h1v1h-1zM755 567h1v1h-1zM755 572h1v1h-1zM755 577h1v1h-1zM755 581h1v1h-1zM755 586h1v1h-1zM755 591h1v1h-1zM755 595h1v1h-1zM755 600h1v1h-1zM755 605h1v1h-1zM755 609h1v1h-1zM755 614h1v1h-1zM755 618h1v1h-1zM755 623h1v1h-1zM755 628h1v1h-1zM755 632h1v1h-1zM755 637h1v1h-1zM755 642h1v1h-1zM755 646h1v1h-1zM755 651h1v1h-1zM755 656h1v1h-1zM755 660h1v1h-1zM755 665h1v1h-1zM755 670h1v1h-1zM755 674h1v1h-1zM755 679h1v1h-1zM755 684h1v1h-1zM755 688h1v1h-1zM755 693h1v1h-1zM755 698h1v1h-1zM755 702h1v1h-1zM755 707h1v1h-1zM755 712h1v1h-1zM755 716h1v1h-1zM755 721h1v1h-1zM755 726h1v1h-1zM755 730h1v1h-1zM755 735h1v1h-1zM755 739h1v1h-1zM755 744h1v1h-1zM755 749h1v1h-1zM755 753h1v1h-1zM755 758h1v1h-1zM755 762h1v1h-1zM755 767h1v1h-1zM755 772h1v1h-1zM755 776h1v1h-1zM755 781h1v1h-1zM755 786h1v1h-1zM755 790h1v1h-1zM755 795h1v1h-1zM755 800h1v1h-1zM755 804h1v1h-1zM755 809h1v1h-1zM755 813h1v1h-1zM755 818h1v1h-1zM755 823h1v1h-1zM755 827h1v1h-1zM755 832h1v1h-1zM755 837h1v1h-1zM755 841h1v1h-1zM755 846h1v1h-1zM755 851h1v1h-1zM755 855h1v1h-1zM755 860h1v1h-1zM755 865h1v1h-1zM755 869h1v1h-1zM755 874h1v1h-1zM755 878h1v1h-1zM755 883h1v1h-1zM755 888h1v1h-1zM755 892h1v1h-1zM755 897h1v1h-1zM755 902h1v1h-1zM755 906h1v1h-1zM755 911h1v1h-1zM755 916h1v1h-1zM755 920h1v1h-1zM755 925h1v1h-1zM755 929h1v1h-1zM755 934h1v1h-1zM755 939h1v1h-1zM755 943h1v1h-1zM755 948h1v1h-1zM755 953h1v1h-1zM755 957h1v1h-1zM755 962h1v1h-1zM755 967h1v1h-1zM755 971h1v1h-1zM755 976h1v1h-1zM755 981h1v1h-1zM755 985h1v1h-1zM929 58h1v1h-1zM929 62h1v1h-1zM929 67h1v1h-1zM929 71h1v1h-1zM929 76h1v1h-1zM929 81h1v1h-1zM929 85h1v1h-1zM929 90h1v1h-1zM929 95h1v1h-1zM929 99h1v1h-1zM929 104h1v1h-1zM929 109h1v1h-1zM929 113h1v1h-1zM929 118h1v1h-1zM929 123h1v1h-1zM929 127h1v1h-1zM929 132h1v1h-1zM929 137h1v1h-1zM929 141h1v1h-1zM929 146h1v1h-1zM929 151h1v1h-1zM929 155h1v1h-1zM929 160h1v1h-1zM929 165h1v1h-1zM929 169h1v1h-1zM929 174h1v1h-1zM929 179h1v1h-1zM929 183h1v1h-1zM929 188h1v1h-1zM929 193h1v1h-1zM929 197h1v1h-1zM929 202h1v1h-1zM929 206h1v1h-1zM929 211h1v1h-1zM929 216h1v1h-1zM929 220h1v1h-1zM929 225h1v1h-1zM929 230h1v1h-1zM929 234h1v1h-1zM929 239h1v1h-1zM929 244h1v1h-1zM929 248h1v1h-1zM929 253h1v1h-1zM929 258h1v1h-1zM929 262h1v1h-1zM929 267h1v1h-1zM929 272h1v1h-1zM929 276h1v1h-1zM929 281h1v1h-1zM929 286h1v1h-1zM929 291h1v1h-1zM929 296h1v1h-1zM929 301h1v1h-1zM929 305h1v1h-1zM929 310h1v1h-1zM929 315h1v1h-1zM929 319h1v1h-1zM929 324h1v1h-1zM929 329h1v1h-1zM929 333h1v1h-1zM929 338h1v1h-1zM929 343h1v1h-1zM929 347h1v1h-1zM929 352h1v1h-1zM929 357h1v1h-1zM929 361h1v1h-1zM929 366h1v1h-1zM929 371h1v1h-1zM929 375h1v1h-1zM929 380h1v1h-1zM929 385h1v1h-1zM929 389h1v1h-1zM929 394h1v1h-1zM929 399h1v1h-1zM929 403h1v1h-1zM929 408h1v1h-1zM929 413h1v1h-1zM929 417h1v1h-1zM929 422h1v1h-1zM929 427h1v1h-1zM929 431h1v1h-1zM929 436h1v1h-1zM929 441h1v1h-1zM929 445h1v1h-1zM929 450h1v1h-1zM929 455h1v1h-1zM929 459h1v1h-1zM929 464h1v1h-1zM929 468h1v1h-1zM929 473h1v1h-1zM929 478h1v1h-1zM929 482h1v1h-1zM929 487h1v1h-1zM929 492h1v1h-1zM929 496h1v1h-1zM929 501h1v1h-1zM929 506h1v1h-1zM929 510h1v1h-1zM929 515h1v1h-1zM929 520h1v1h-1zM929 525h1v1h-1zM929 530h1v1h-1zM929 535h1v1h-1zM929 539h1v1h-1zM929 544h1v1h-1zM929 549h1v1h-1zM929 553h1v1h-1zM929 558h1v1h-1zM929 563h1v1h-1zM929 567h1v1h-1zM929 572h1v1h-1zM929 577h1v1h-1zM929 581h1v1h-1zM929 586h1v1h-1zM929 591h1v1h-1zM929 595h1v1h-1zM929 600h1v1h-1zM929 605h1v1h-1zM929 609h1v1h-1zM929 614h1v1h-1zM929 618h1v1h-1zM929 623h1v1h-1zM929 628h1v1h-1zM929 632h1v1h-1zM929 637h1v1h-1zM929 642h1v1h-1zM929 646h1v1h-1zM929 651h1v1h-1zM929 656h1v1h-1zM929 660h1v1h-1zM929 665h1v1h-1zM929 670h1v1h-1zM929 674h1v1h-1zM929 679h1v1h-1zM929 684h1v1h-1zM929 688h1v1h-1zM929 693h1v1h-1zM929 698h1v1h-1zM929 702h1v1h-1zM929 707h1v1h-1zM929 712h1v1h-1zM929 716h1v1h-1zM929 721h1v1h-1zM929 726h1v1h-1zM929 730h1v1h-1zM929 735h1v1h-1zM929 739h1v1h-1zM929 744h1v1h-1zM929 749h1v1h-1zM929 753h1v1h-1zM929 758h1v1h-1zM929 762h1v1h-1zM929 767h1v1h-1zM929 772h1v1h-1zM929 776h1v1h-1zM929 781h1v1h-1zM929 786h1v1h-1zM929 790h1v1h-1zM929 795h1v1h-1zM929 800h1v1h-1zM929 804h1v1h-1zM929 809h1v1h-1zM929 813h1v1h-1zM929 818h1v1h-1zM929 823h1v1h-1zM929 827h1v1h-1zM929 832h1v1h-1zM929 837h1v1h-1zM929 841h1v1h-1zM929 846h1v1h-1zM929 851h1v1h-1zM929 855h1v1h-1zM929 860h1v1h-1zM929 865h1v1h-1zM929 869h1v1h-1zM929 874h1v1h-1zM929 878h1v1h-1zM929 883h1v1h-1zM929 888h1v1h-1zM929 892h1v1h-1zM929 897h1v1h-1zM929 902h1v1h-1zM929 906h1v1h-1zM929 911h1v1h-1zM929 916h1v1h-1zM929 920h1v1h-1zM929 925h1v1h-1zM929 929h1v1h-1zM929 934h1v1h-1zM929 939h1v1h-1zM929 943h1v1h-1zM929 948h1v1h-1zM929 953h1v1h-1zM929 957h1v1h-1zM929 962h1v1h-1zM929 967h1v1h-1zM929 971h1v1h-1zM929 976h1v1h-1zM929 981h1v1h-1zM929 985h1v1h-1zM1104 58h1v1h-1zM1104 62h1v1h-1zM1104 67h1v1h-1zM1104 71h1v1h-1zM1104 76h1v1h-1zM1104 81h1v1h-1zM1104 85h1v1h-1zM1104 90h1v1h-1zM1104 95h1v1h-1zM1104 99h1v1h-1zM1104 104h1v1h-1zM1104 109h1v1h-1zM1104 113h1v1h-1zM1104 118h1v1h-1zM1104 123h1v1h-1zM1104 127h1v1h-1zM1104 132h1v1h-1zM1104 137h1v1h-1zM1104 141h1v1h-1zM1104 146h1v1h-1zM1104 151h1v1h-1zM1104 155h1v1h-1zM1104 160h1v1h-1zM1104 165h1v1h-1zM1104 169h1v1h-1zM1104 174h1v1h-1zM1104 179h1v1h-1zM1104 183h1v1h-1zM1104 188h1v1h-1zM1104 193h1v1h-1zM1104 197h1v1h-1zM1104 202h1v1h-1zM1104 206h1v1h-1zM1104 211h1v1h-1zM1104 216h1v1h-1zM1104 220h1v1h-1zM1104 225h1v1h-1zM1104 230h1v1h-1zM1104 234h1v1h-1zM1104 239h1v1h-1zM1104 244h1v1h-1zM1104 248h1v1h-1zM1104 253h1v1h-1zM1104 258h1v1h-1zM1104 262h1v1h-1zM1104 267h1v1h-1zM1104 272h1v1h-1zM1104 276h1v1h-1zM1104 281h1v1h-1zM1104 286h1v1h-1zM1104 291h1v1h-1zM1104 296h1v1h-1zM1104 301h1v1h-1zM1104 305h1v1h-1zM1104 310h1v1h-1zM1104 315h1v1h-1zM1104 319h1v1h-1zM1104 324h1v1h-1zM1104 329h1v1h-1zM1104 333h1v1h-1zM1104 338h1v1h-1zM1104 343h1v1h-1zM1104 347h1v1h-1zM1104 352h1v1h-1zM1104 357h1v1h-1zM1104 361h1v1h-1zM1104 366h1v1h-1zM1104 371h1v1h-1zM1104 375h1v1h-1zM1104 380h1v1h-1zM1104 385h1v1h-1zM1104 389h1v1h-1zM1104 394h1v1h-1zM1104 399h1v1h-1zM1104 403h1v1h-1zM1104 408h1v1h-1zM1104 413h1v1h-1zM1104 417h1v1h-1zM1104 422h1v1h-1zM1104 427h1v1h-1zM1104 431h1v1h-1zM1104 436h1v1h-1zM1104 441h1v1h-1zM1104 445h1v1h-1zM1104 450h1v1h-1zM1104 455h1v1h-1zM1104 459h1v1h-1zM1104 464h1v1h-1zM1104 468h1v1h-1zM1104 473h1v1h-1zM1104 478h1v1h-1zM1104 482h1v1h-1zM1104 487h1v1h-1zM1104 492h1v1h-1zM1104 496h1v1h-1zM1104 501h1v1h-1zM1104 506h1v1h-1zM1104 510h1v1h-1zM1104 515h1v1h-1zM1104 520h1v1h-1zM1104 525h1v1h-1zM1104 530h1v1h-1zM1104 535h1v1h-1zM1104 539h1v1h-1zM1104 544h1v1h-1zM1104 549h1v1h-1zM1104 553h1v1h-1zM1104 558h1v1h-1zM1104 563h1v1h-1zM1104 567h1v1h-1zM1104 572h1v1h-1zM1104 577h1v1h-1zM1104 581h1v1h-1zM1104 586h1v1h-1zM1104 591h1v1h-1zM1104 595h1v1h-1zM1104 600h1v1h-1zM1104 605h1v1h-1zM1104 609h1v1h-1zM1104 614h1v1h-1zM1104 618h1v1h-1zM1104 623h1v1h-1zM1104 628h1v1h-1zM1104 632h1v1h-1zM1104 637h1v1h-1zM1104 642h1v1h-1zM1104 646h1v1h-1zM1104 651h1v1h-1zM1104 656h1v1h-1zM1104 660h1v1h-1zM1104 665h1v1h-1zM1104 670h1v1h-1zM1104 674h1v1h-1zM1104 679h1v1h-1zM1104 684h1v1h-1zM1104 688h1v1h-1zM1104 693h1v1h-1zM1104 698h1v1h-1zM1104 702h1v1h-1zM1104 707h1v1h-1zM1104 712h1v1h-1zM1104 716h1v1h-1zM1104 721h1v1h-1zM1104 726h1v1h-1zM1104 730h1v1h-1zM1104 735h1v1h-1zM1104 739h1v1h-1zM1104 744h1v1h-1zM1104 749h1v1h-1zM1104 753h1v1h-1zM1104 758h1v1h-1zM1104 762h1v1h-1zM1104 767h1v1h-1zM1104 772h1v1h-1zM1104 776h1v1h-1zM1104 781h1v1h-1zM1104 786h1v1h-1zM1104 790h1v1h-1zM1104 795h1v1h-1zM1104 800h1v1h-1zM1104 804h1v1h-1zM1104 809h1v1h-1zM1104 813h1v1h-1zM1104 818h1v1h-1zM1104 823h1v1h-1zM1104 827h1v1h-1zM1104 832h1v1h-1zM1104 837h1v1h-1zM1104 841h1v1h-1zM1104 846h1v1h-1zM1104 851h1v1h-1zM1104 855h1v1h-1zM1104 860h1v1h-1zM1104 865h1v1h-1zM1104 869h1v1h-1zM1104 874h1v1h-1zM1104 878h1v1h-1zM1104 883h1v1h-1zM1104 888h1v1h-1zM1104 892h1v1h-1zM1104 897h1v1h-1zM1104 902h1v1h-1zM1104 906h1v1h-1zM1104 911h1v1h-1zM1104 916h1v1h-1zM1104 920h1v1h-1zM1104 925h1v1h-1zM1104 929h1v1h-1zM1104 934h1v1h-1zM1104 939h1v1h-1zM1104 943h1v1h-1zM1104 948h1v1h-1zM1104 953h1v1h-1zM1104 957h1v1h-1zM1104 962h1v1h-1zM1104 967h1v1h-1zM1104 971h1v1h-1zM1104 976h1v1h-1zM1104 981h1v1h-1zM1104 985h1v1h-1zM1279 58h1v1h-1zM1279 62h1v1h-1zM1279 67h1v1h-1zM1279 71h1v1h-1zM1279 76h1v1h-1zM1279 81h1v1h-1zM1279 85h1v1h-1zM1279 90h1v1h-1zM1279 95h1v1h-1zM1279 99h1v1h-1zM1279 104h1v1h-1zM1279 109h1v1h-1zM1279 113h1v1h-1zM1279 118h1v1h-1zM1279 123h1v1h-1zM1279 127h1v1h-1zM1279 132h1v1h-1zM1279 137h1v1h-1zM1279 141h1v1h-1zM1279 146h1v1h-1zM1279 151h1v1h-1zM1279 155h1v1h-1zM1279 160h1v1h-1zM1279 165h1v1h-1zM1279 169h1v1h-1zM1279 174h1v1h-1zM1279 179h1v1h-1zM1279 183h1v1h-1zM1279 188h1v1h-1zM1279 193h1v1h-1zM1279 197h1v1h-1zM1279 202h1v1h-1zM1279 206h1v1h-1zM1279 211h1v1h-1zM1279 216h1v1h-1zM1279 220h1v1h-1zM1279 225h1v1h-1zM1279 230h1v1h-1zM1279 234h1v1h-1zM1279 239h1v1h-1zM1279 244h1v1h-1zM1279 248h1v1h-1zM1279 253h1v1h-1zM1279 258h1v1h-1zM1279 262h1v1h-1zM1279 267h1v1h-1zM1279 272h1v1h-1zM1279 276h1v1h-1zM1279 281h1v1h-1zM1279 286h1v1h-1zM1279 291h1v1h-1zM1279 296h1v1h-1zM1279 301h1v1h-1zM1279 305h1v1h-1zM1279 310h1v1h-1zM1279 315h1v1h-1zM1279 319h1v1h-1zM1279 324h1v1h-1zM1279 329h1v1h-1zM1279 333h1v1h-1zM1279 338h1v1h-1zM1279 343h1v1h-1zM1279 347h1v1h-1zM1279 352h1v1h-1zM1279 357h1v1h-1zM1279 361h1v1h-1zM1279 366h1v1h-1zM1279 371h1v1h-1zM1279 375h1v1h-1zM1279 380h1v1h-1zM1279 385h1v1h-1zM1279 389h1v1h-1zM1279 394h1v1h-1zM1279 399h1v1h-1zM1279 403h1v1h-1zM1279 408h1v1h-1zM1279 413h1v1h-1zM1279 417h1v1h-1zM1279 422h1v1h-1zM1279 427h1v1h-1zM1279 431h1v1h-1zM1279 436h1v1h-1zM1279 441h1v1h-1zM1279 445h1v1h-1zM1279 450h1v1h-1zM1279 455h1v1h-1zM1279 459h1v1h-1zM1279 464h1v1h-1zM1279 468h1v1h-1zM1279 473h1v1h-1zM1279 478h1v1h-1zM1279 482h1v1h-1zM1279 487h1v1h-1zM1279 492h1v1h-1zM1279 496h1v1h-1zM1279 501h1v1h-1zM1279 506h1v1h-1zM1279 510h1v1h-1zM1279 515h1v1h-1zM1279 520h1v1h-1zM1279 525h1v1h-1zM1279 530h1v1h-1zM1279 535h1v1h-1zM1279 539h1v1h-1zM1279 544h1v1h-1zM1279 549h1v1h-1zM1279 553h1v1h-1zM1279 558h1v1h-1zM1279 563h1v1h-1zM1279 567h1v1h-1zM1279 572h1v1h-1zM1279 577h1v1h-1zM1279 581h1v1h-1zM1279 586h1v1h-1zM1279 591h1v1h-1zM1279 595h1v1h-1zM1279 600h1v1h-1zM1279 605h1v1h-1zM1279 609h1v1h-1zM1279 614h1v1h-1zM1279 618h1v1h-1zM1279 623h1v1h-1zM1279 628h1v1h-1zM1279 632h1v1h-1zM1279 637h1v1h-1zM1279 642h1v1h-1zM1279 646h1v1h-1zM1279 651h1v1h-1zM1279 656h1v1h-1zM1279 660h1v1h-1zM1279 665h1v1h-1zM1279 670h1v1h-1zM1279 674h1v1h-1zM1279 679h1v1h-1zM1279 684h1v1h-1zM1279 688h1v1h-1zM1279 693h1v1h-1zM1279 698h1v1h-1zM1279 702h1v1h-1zM1279 707h1v1h-1zM1279 712h1v1h-1zM1279 716h1v1h-1zM1279 721h1v1h-1zM1279 726h1v1h-1zM1279 730h1v1h-1zM1279 735h1v1h-1zM1279 739h1v1h-1zM1279 744h1v1h-1zM1279 749h1v1h-1zM1279 753h1v1h-1zM1279 758h1v1h-1zM1279 762h1v1h-1zM1279 767h1v1h-1zM1279 772h1v1h-1zM1279 776h1v1h-1zM1279 781h1v1h-1zM1279 786h1v1h-1zM1279 790h1v1h-1zM1279 795h1v1h-1zM1279 800h1v1h-1zM1279 804h1v1h-1zM1279 809h1v1h-1zM1279 813h1v1h-1zM1279 818h1v1h-1zM1279 823h1v1h-1zM1279 827h1v1h-1zM1279 832h1v1h-1zM1279 837h1v1h-1zM1279 841h1v1h-1zM1279 846h1v1h-1zM1279 851h1v1h-1zM1279 855h1v1h-1zM1279 860h1v1h-1zM1279 865h1v1h-1zM1279 869h1v1h-1zM1279 874h1v1h-1zM1279 878h1v1h-1zM1279 883h1v1h-1zM1279 888h1v1h-1zM1279 892h1v1h-1zM1279 897h1v1h-1zM1279 902h1v1h-1zM1279 906h1v1h-1zM1279 911h1v1h-1zM1279 916h1v1h-1zM1279 920h1v1h-1zM1279 925h1v1h-1zM1279 929h1v1h-1zM1279 934h1v1h-1zM1279 939h1v1h-1zM1279 943h1v1h-1zM1279 948h1v1h-1zM1279 953h1v1h-1zM1279 957h1v1h-1zM1279 962h1v1h-1zM1279 967h1v1h-1zM1279 971h1v1h-1zM1279 976h1v1h-1zM1279 981h1v1h-1zM1279 985h1v1h-1zM1454 58h1v1h-1zM1454 62h1v1h-1zM1454 67h1v1h-1zM1454 71h1v1h-1zM1454 76h1v1h-1zM1454 81h1v1h-1zM1454 85h1v1h-1zM1454 90h1v1h-1zM1454 95h1v1h-1zM1454 99h1v1h-1zM1454 104h1v1h-1zM1454 109h1v1h-1zM1454 113h1v1h-1zM1454 118h1v1h-1zM1454 123h1v1h-1zM1454 127h1v1h-1zM1454 132h1v1h-1zM1454 137h1v1h-1zM1454 141h1v1h-1zM1454 146h1v1h-1zM1454 151h1v1h-1zM1454 155h1v1h-1zM1454 160h1v1h-1zM1454 165h1v1h-1zM1454 169h1v1h-1zM1454 174h1v1h-1zM1454 179h1v1h-1zM1454 183h1v1h-1zM1454 188h1v1h-1zM1454 193h1v1h-1zM1454 197h1v1h-1zM1454 202h1v1h-1zM1454 206h1v1h-1zM1454 211h1v1h-1zM1454 216h1v1h-1zM1454 220h1v1h-1zM1454 225h1v1h-1zM1454 230h1v1h-1zM1454 234h1v1h-1zM1454 239h1v1h-1zM1454 244h1v1h-1zM1454 248h1v1h-1zM1454 253h1v1h-1zM1454 258h1v1h-1zM1454 262h1v1h-1zM1454 267h1v1h-1zM1454 272h1v1h-1zM1454 276h1v1h-1zM1454 281h1v1h-1zM1454 286h1v1h-1zM1454 291h1v1h-1zM1454 296h1v1h-1zM1454 301h1v1h-1zM1454 305h1v1h-1zM1454 310h1v1h-1zM1454 315h1v1h-1zM1454 319h1v1h-1zM1454 324h1v1h-1zM1454 329h1v1h-1zM1454 333h1v1h-1zM1454 338h1v1h-1zM1454 343h1v1h-1zM1454 347h1v1h-1zM1454 352h1v1h-1zM1454 357h1v1h-1zM1454 361h1v1h-1zM1454 366h1v1h-1zM1454 371h1v1h-1zM1454 375h1v1h-1zM1454 380h1v1h-1zM1454 385h1v1h-1zM1454 389h1v1h-1zM1454 394h1v1h-1zM1454 399h1v1h-1zM1454 403h1v1h-1zM1454 408h1v1h-1zM1454 413h1v1h-1zM1454 417h1v1h-1zM1454 422h1v1h-1zM1454 427h1v1h-1zM1454 431h1v1h-1zM1454 436h1v1h-1zM1454 441h1v1h-1zM1454 445h1v1h-1zM1454 450h1v1h-1zM1454 455h1v1h-1zM1454 459h1v1h-1zM1454 464h1v1h-1zM1454 468h1v1h-1zM1454 473h1v1h-1zM1454 478h1v1h-1zM1454 482h1v1h-1zM1454 487h1v1h-1zM1454 492h1v1h-1zM1454 496h1v1h-1zM1454 501h1v1h-1zM1454 506h1v1h-1zM1454 510h1v1h-1zM1454 515h1v1h-1zM1454 520h1v1h-1zM1454 525h1v1h-1zM1454 530h1v1h-1zM1454 535h1v1h-1zM1454 539h1v1h-1zM1454 544h1v1h-1zM1454 549h1v1h-1zM1454 553h1v1h-1zM1454 558h1v1h-1zM1454 563h1v1h-1zM1454 567h1v1h-1zM1454 572h1v1h-1zM1454 577h1v1h-1zM1454 581h1v1h-1zM1454 586h1v1h-1zM1454 591h1v1h-1zM1454 595h1v1h-1zM1454 600h1v1h-1zM1454 605h1v1h-1zM1454 609h1v1h-1zM1454 614h1v1h-1zM1454 618h1v1h-1zM1454 623h1v1h-1zM1454 628h1v1h-1zM1454 632h1v1h-1zM1454 637h1v1h-1zM1454 642h1v1h-1zM1454 646h1v1h-1zM1454 651h1v1h-1zM1454 656h1v1h-1zM1454 660h1v1h-1zM1454 665h1v1h-1zM1454 670h1v1h-1zM1454 674h1v1h-1zM1454 679h1v1h-1zM1454 684h1v1h-1zM1454 688h1v1h-1zM1454 693h1v1h-1zM1454 698h1v1h-1zM1454 702h1v1h-1zM1454 707h1v1h-1zM1454 712h1v1h-1zM1454 716h1v1h-1zM1454 721h1v1h-1zM1454 726h1v1h-1zM1454 730h1v1h-1zM1454 735h1v1h-1zM1454 739h1v1h-1zM1454 744h1v1h-1zM1454 749h1v1h-1zM1454 753h1v1h-1zM1454 758h1v1h-1zM1454 762h1v1h-1zM1454 767h1v1h-1zM1454 772h1v1h-1zM1454 776h1v1h-1zM1454 781h1v1h-1zM1454 786h1v1h-1zM1454 790h1v1h-1zM1454 795h1v1h-1zM1454 800h1v1h-1zM1454 804h1v1h-1zM1454 809h1v1h-1zM1454 813h1v1h-1zM1454 818h1v1h-1zM1454 823h1v1h-1zM1454 827h1v1h-1zM1454 832h1v1h-1zM1454 837h1v1h-1zM1454 841h1v1h-1zM1454 846h1v1h-1zM1454 851h1v1h-1zM1454 855h1v1h-1zM1454 860h1v1h-1zM1454 865h1v1h-1zM1454 869h1v1h-1zM1454 874h1v1h-1zM1454 878h1v1h-1zM1454 883h1v1h-1zM1454 888h1v1h-1zM1454 892h1v1h-1zM1454 897h1v1h-1zM1454 902h1v1h-1zM1454 906h1v1h-1zM1454 911h1v1h-1zM1454 916h1v1h-1zM1454 920h1v1h-1zM1454 925h1v1h-1zM1454 929h1v1h-1zM1454 934h1v1h-1zM1454 939h1v1h-1zM1454 943h1v1h-1zM1454 948h1v1h-1zM1454 953h1v1h-1zM1454 957h1v1h-1zM1454 962h1v1h-1zM1454 967h1v1h-1zM1454 971h1v1h-1zM1454 976h1v1h-1zM1454 981h1v1h-1zM1454 985h1v1h-1zM1629 58h1v1h-1zM1629 62h1v1h-1zM1629 67h1v1h-1zM1629 71h1v1h-1zM1629 76h1v1h-1zM1629 81h1v1h-1zM1629 85h1v1h-1zM1629 90h1v1h-1zM1629 95h1v1h-1zM1629 99h1v1h-1zM1629 104h1v1h-1zM1629 109h1v1h-1zM1629 113h1v1h-1zM1629 118h1v1h-1zM1629 123h1v1h-1zM1629 127h1v1h-1zM1629 132h1v1h-1zM1629 137h1v1h-1zM1629 141h1v1h-1zM1629 146h1v1h-1zM1629 151h1v1h-1zM1629 155h1v1h-1zM1629 160h1v1h-1zM1629 165h1v1h-1zM1629 169h1v1h-1zM1629 174h1v1h-1zM1629 179h1v1h-1zM1629 183h1v1h-1zM1629 188h1v1h-1zM1629 193h1v1h-1zM1629 197h1v1h-1zM1629 202h1v1h-1zM1629 206h1v1h-1zM1629 211h1v1h-1zM1629 216h1v1h-1zM1629 220h1v1h-1zM1629 225h1v1h-1zM1629 230h1v1h-1zM1629 234h1v1h-1zM1629 239h1v1h-1zM1629 244h1v1h-1zM1629 248h1v1h-1zM1629 253h1v1h-1zM1629 258h1v1h-1zM1629 262h1v1h-1zM1629 267h1v1h-1zM1629 272h1v1h-1zM1629 276h1v1h-1zM1629 281h1v1h-1zM1629 286h1v1h-1zM1629 291h1v1h-1zM1629 296h1v1h-1zM1629 301h1v1h-1zM1629 305h1v1h-1zM1629 310h1v1h-1zM1629 315h1v1h-1zM1629 319h1v1h-1zM1629 324h1v1h-1zM1629 329h1v1h-1zM1629 333h1v1h-1zM1629 338h1v1h-1zM1629 343h1v1h-1zM1629 347h1v1h-1zM1629 352h1v1h-1zM1629 357h1v1h-1zM1629 361h1v1h-1zM1629 366h1v1h-1zM1629 371h1v1h-1zM1629 375h1v1h-1zM1629 380h1v1h-1zM1629 385h1v1h-1zM1629 389h1v1h-1zM1629 394h1v1h-1zM1629 399h1v1h-1zM1629 403h1v1h-1zM1629 408h1v1h-1zM1629 413h1v1h-1zM1629 417h1v1h-1zM1629 422h1v1h-1zM1629 427h1v1h-1zM1629 431h1v1h-1zM1629 436h1v1h-1zM1629 441h1v1h-1zM1629 445h1v1h-1zM1629 450h1v1h-1zM1629 455h1v1h-1zM1629 459h1v1h-1zM1629 464h1v1h-1zM1629 468h1v1h-1zM1629 473h1v1h-1zM1629 478h1v1h-1zM1629 482h1v1h-1zM1629 487h1v1h-1zM1629 492h1v1h-1zM1629 496h1v1h-1zM1629 501h1v1h-1zM1629 506h1v1h-1zM1629 510h1v1h-1zM1629 515h1v1h-1zM1629 520h1v1h-1zM1629 525h1v1h-1zM1629 530h1v1h-1zM1629 535h1v1h-1zM1629 539h1v1h-1zM1629 544h1v1h-1zM1629 549h1v1h-1zM1629 553h1v1h-1zM1629 558h1v1h-1zM1629 563h1v1h-1zM1629 567h1v1h-1zM1629 572h1v1h-1zM1629 577h1v1h-1zM1629 581h1v1h-1zM1629 586h1v1h-1zM1629 591h1v1h-1zM1629 595h1v1h-1zM1629 600h1v1h-1zM1629 605h1v1h-1zM1629 609h1v1h-1zM1629 614h1v1h-1zM1629 618h1v1h-1zM1629 623h1v1h-1zM1629 628h1v1h-1zM1629 632h1v1h-1zM1629 637h1v1h-1zM1629 642h1v1h-1zM1629 646h1v1h-1zM1629 651h1v1h-1zM1629 656h1v1h-1zM1629 660h1v1h-1zM1629 665h1v1h-1zM1629 670h1v1h-1zM1629 674h1v1h-1zM1629 679h1v1h-1zM1629 684h1v1h-1zM1629 688h1v1h-1zM1629 693h1v1h-1zM1629 698h1v1h-1zM1629 702h1v1h-1zM1629 707h1v1h-1zM1629 712h1v1h-1zM1629 716h1v1h-1zM1629 721h1v1h-1zM1629 726h1v1h-1zM1629 730h1v1h-1zM1629 735h1v1h-1zM1629 739h1v1h-1zM1629 744h1v1h-1zM1629 749h1v1h-1zM1629 753h1v1h-1zM1629 758h1v1h-1zM1629 762h1v1h-1zM1629 767h1v1h-1zM1629 772h1v1h-1zM1629 776h1v1h-1zM1629 781h1v1h-1zM1629 786h1v1h-1zM1629 790h1v1h-1zM1629 795h1v1h-1zM1629 800h1v1h-1zM1629 804h1v1h-1zM1629 809h1v1h-1zM1629 813h1v1h-1zM1629 818h1v1h-1zM1629 823h1v1h-1zM1629 827h1v1h-1zM1629 832h1v1h-1zM1629 837h1v1h-1zM1629 841h1v1h-1zM1629 846h1v1h-1zM1629 851h1v1h-1zM1629 855h1v1h-1zM1629 860h1v1h-1zM1629 865h1v1h-1zM1629 869h1v1h-1zM1629 874h1v1h-1zM1629 878h1v1h-1zM1629 883h1v1h-1zM1629 888h1v1h-1zM1629 892h1v1h-1zM1629 897h1v1h-1zM1629 902h1v1h-1zM1629 906h1v1h-1zM1629 911h1v1h-1zM1629 916h1v1h-1zM1629 920h1v1h-1zM1629 925h1v1h-1zM1629 929h1v1h-1zM1629 934h1v1h-1zM1629 939h1v1h-1zM1629 943h1v1h-1zM1629 948h1v1h-1zM1629 953h1v1h-1zM1629 957h1v1h-1zM1629 962h1v1h-1zM1629 967h1v1h-1zM1629 971h1v1h-1zM1629 976h1v1h-1zM1629 981h1v1h-1zM1629 985h1v1h-1z" fill="#c2c2c2"/>
<line x1="3" y1="267.5" x2="1718" y2="267.5" stroke="#cfcfcf" stroke-width="1" stroke-dasharray="5 5"/>
<line x1="3" y1="431.5" x2="1718" y2="431.5" stroke="#cfcfcf" stroke-width="1" stroke-dasharray="5 5"/>
<line x1="3" y1="735.5" x2="1718" y2="735.5" stroke="#cfcfcf" stroke-width="1" stroke-dasharray="5 5"/>
<line x1="3" y1="920.5" x2="1718" y2="920.5" stroke="#cfcfcf" stroke-width="1" stroke-dasharray="5 5"/>
<line x1="55.5" y1="96" x2="55.5" y2="993" stroke="#cfcfcf" stroke-width="1" stroke-dasharray="5 5" stroke-dashoffset="1"/>
<rect x="1716.1" y="74.3" width="30.4" height="14" fill="#000"/><text x="1745.5" y="85.9" font-size="13.30" fill="#ece42c" text-anchor="end">40 V</text>
<rect x="1716.1" y="97.6" width="30.4" height="14" fill="#000"/><text x="1745.5" y="109.2" font-size="13.30" fill="#ece42c" text-anchor="end">35 V</text>
<rect x="1716.1" y="120.8" width="30.4" height="14" fill="#000"/><text x="1745.5" y="132.4" font-size="13.30" fill="#ece42c" text-anchor="end">30 V</text>
<rect x="1716.1" y="144.1" width="30.4" height="14" fill="#000"/><text x="1745.5" y="155.7" font-size="13.30" fill="#ece42c" text-anchor="end">25 V</text>
<rect x="1716.1" y="167.4" width="30.4" height="14" fill="#000"/><text x="1745.5" y="179.0" font-size="13.30" fill="#ece42c" text-anchor="end">20 V</text>
<rect x="1716.1" y="190.7" width="30.4" height="14" fill="#000"/><text x="1745.5" y="202.3" font-size="13.30" fill="#ece42c" text-anchor="end">15 V</text>
<rect x="1716.1" y="214.0" width="30.4" height="14" fill="#000"/><text x="1745.5" y="225.6" font-size="13.30" fill="#ece42c" text-anchor="end">10 V</text>
<rect x="1723.5" y="237.2" width="23.0" height="14" fill="#000"/><text x="1745.5" y="248.8" font-size="13.30" fill="#ece42c" text-anchor="end">5 V</text>
<rect x="1723.5" y="260.5" width="23.0" height="14" fill="#000"/><text x="1745.5" y="272.1" font-size="13.30" fill="#ece42c" text-anchor="end">0 V</text>
<rect x="1723.5" y="308.2" width="23.0" height="14" fill="#000"/><text x="1745.5" y="319.8" font-size="13.30" fill="#84c434" text-anchor="end">1 V</text>
<rect x="1697.7" y="331.5" width="48.8" height="14" fill="#000"/><text x="1745.5" y="343.1" font-size="13.30" fill="#84c434" text-anchor="end">800 mV</text>
<rect x="1697.7" y="354.8" width="48.8" height="14" fill="#000"/><text x="1745.5" y="366.4" font-size="13.30" fill="#84c434" text-anchor="end">600 mV</text>
<rect x="1697.7" y="378.1" width="48.8" height="14" fill="#000"/><text x="1745.5" y="389.7" font-size="13.30" fill="#84c434" text-anchor="end">400 mV</text>
<rect x="1697.7" y="401.4" width="48.8" height="14" fill="#000"/><text x="1745.5" y="413.0" font-size="13.30" fill="#84c434" text-anchor="end">200 mV</text>
<rect x="1723.5" y="424.7" width="23.0" height="14" fill="#000"/><text x="1745.5" y="436.3" font-size="13.30" fill="#84c434" text-anchor="end">0 V</text>
<rect x="1693.2" y="448.0" width="53.3" height="14" fill="#000"/><text x="1745.5" y="459.6" font-size="13.30" fill="#84c434" text-anchor="end">-200 mV</text>
<rect x="1693.2" y="471.3" width="53.3" height="14" fill="#000"/><text x="1745.5" y="482.9" font-size="13.30" fill="#84c434" text-anchor="end">-400 mV</text>
<rect x="1693.2" y="494.6" width="53.3" height="14" fill="#000"/><text x="1745.5" y="506.2" font-size="13.30" fill="#84c434" text-anchor="end">-600 mV</text>
<rect x="1672.5" y="542.2" width="74.0" height="14" fill="#000"/><text x="1745.5" y="553.8" font-size="13.30" fill="#e48a2c" text-anchor="end">583.732 mT</text>
<rect x="1672.5" y="565.4" width="74.0" height="14" fill="#000"/><text x="1745.5" y="577.0" font-size="13.30" fill="#e48a2c" text-anchor="end">510.765 mT</text>
<rect x="1672.5" y="588.7" width="74.0" height="14" fill="#000"/><text x="1745.5" y="600.3" font-size="13.30" fill="#e48a2c" text-anchor="end">437.799 mT</text>
<rect x="1672.5" y="612.0" width="74.0" height="14" fill="#000"/><text x="1745.5" y="623.6" font-size="13.30" fill="#e48a2c" text-anchor="end">364.832 mT</text>
<rect x="1672.5" y="635.2" width="74.0" height="14" fill="#000"/><text x="1745.5" y="646.9" font-size="13.30" fill="#e48a2c" text-anchor="end">291.866 mT</text>
<rect x="1672.5" y="658.5" width="74.0" height="14" fill="#000"/><text x="1745.5" y="670.1" font-size="13.30" fill="#e48a2c" text-anchor="end">218.899 mT</text>
<rect x="1672.5" y="681.8" width="74.0" height="14" fill="#000"/><text x="1745.5" y="693.4" font-size="13.30" fill="#e48a2c" text-anchor="end">145.933 mT</text>
<rect x="1679.9" y="705.1" width="66.6" height="14" fill="#000"/><text x="1745.5" y="716.7" font-size="13.30" fill="#e48a2c" text-anchor="end">72.966 mT</text>
<rect x="1724.5" y="728.3" width="22.0" height="14" fill="#000"/><text x="1745.5" y="739.9" font-size="13.30" fill="#e48a2c" text-anchor="end">0 T</text>
<rect x="1683.6" y="774.5" width="62.9" height="14" fill="#000"/><text x="1745.5" y="786.1" font-size="13.30" fill="#7e3c9e" text-anchor="end">475.406 A</text>
<rect x="1683.6" y="797.7" width="62.9" height="14" fill="#000"/><text x="1745.5" y="809.3" font-size="13.30" fill="#7e3c9e" text-anchor="end">396.172 A</text>
<rect x="1683.6" y="820.9" width="62.9" height="14" fill="#000"/><text x="1745.5" y="832.5" font-size="13.30" fill="#7e3c9e" text-anchor="end">316.937 A</text>
<rect x="1683.6" y="844.1" width="62.9" height="14" fill="#000"/><text x="1745.5" y="855.7" font-size="13.30" fill="#7e3c9e" text-anchor="end">237.703 A</text>
<rect x="1683.6" y="867.3" width="62.9" height="14" fill="#000"/><text x="1745.5" y="878.9" font-size="13.30" fill="#7e3c9e" text-anchor="end">158.469 A</text>
<rect x="1691.0" y="890.5" width="55.5" height="14" fill="#000"/><text x="1745.5" y="902.1" font-size="13.30" fill="#7e3c9e" text-anchor="end">79.234 A</text>
<rect x="1724.3" y="913.7" width="22.2" height="14" fill="#000"/><text x="1745.5" y="925.3" font-size="13.30" fill="#7e3c9e" text-anchor="end">0 A</text>
<rect x="1686.6" y="936.9" width="59.9" height="14" fill="#000"/><text x="1745.5" y="948.5" font-size="13.30" fill="#7e3c9e" text-anchor="end">-79.234 A</text>
<rect x="1679.2" y="960.1" width="67.3" height="14" fill="#000"/><text x="1745.5" y="971.7" font-size="13.30" fill="#7e3c9e" text-anchor="end">-158.469 A</text>
<path fill="#faf01a" d="M3 264h50v2h-50zM53 262h1v4h-1zM54 259h1v7h-1zM55 259h1v10h-1zM56 262h1v7h-1zM57 262h1v4h-1zM58 262h1v3h-1zM59 263h2v2h-2zM61 263h1v3h-1zM62 264h3v3h-3zM65 264h16v2h-16zM81 264h1v5h-1zM82 256h2v14h-2zM84 256h3v5h-3zM87 255h1v4h-1zM88 254h1v4h-1zM89 253h1v4h-1zM90 252h1v3h-1zM91 251h1v3h-1zM92 250h1v3h-1zM93 249h1v4h-1zM94 249h1v3h-1zM95 248h1v3h-1zM96 247h1v4h-1zM97 247h1v3h-1zM98 246h2v3h-2zM100 245h1v3h-1zM101 244h2v3h-2zM103 243h2v3h-2zM105 242h1v3h-1zM106 241h2v3h-2zM108 240h2v3h-2zM110 239h2v3h-2zM112 238h2v3h-2zM114 238h1v2h-1zM115 237h2v3h-2zM117 236h2v3h-2zM119 236h1v2h-1zM120 235h1v3h-1zM121 235h1v2h-1zM122 234h2v3h-2zM124 234h1v2h-1zM125 233h1v3h-1zM126 233h2v2h-2zM128 232h1v3h-1zM129 232h2v2h-2zM131 231h2v3h-2zM133 231h2v2h-2zM135 230h1v3h-1zM136 230h3v2h-3zM139 229h1v3h-1zM140 229h3v2h-3zM143 228h2v3h-2zM145 228h3v2h-3zM148 227h2v3h-2zM150 227h3v2h-3zM153 226h2v3h-2zM155 226h3v2h-3zM158 225h2v3h-2zM160 225h3v2h-3zM163 224h1v3h-1zM164 224h4v2h-4zM168 223h1v3h-1zM169 223h6v2h-6zM175 222h1v3h-1zM176 222h6v2h-6zM182 221h2v3h-2zM184 221h8v2h-8zM192 220h1v3h-1zM193 220h11v2h-11zM204 219h2v3h-2zM206 219h15v2h-15zM221 218h2v3h-2zM223 218h14v2h-14zM237 217h1v3h-1zM238 217h42v2h-42zM280 217h2v3h-2zM282 218h4v2h-4zM286 217h2v3h-2zM288 217h164v2h-164zM452 217h1v5h-1zM453 217h1v8h-1zM454 220h1v5h-1zM455 223h2v2h-2zM457 221h1v4h-1zM458 219h1v6h-1zM459 219h1v4h-1zM460 219h1v5h-1zM461 220h1v4h-1zM462 222h31v2h-31zM493 220h1v4h-1zM494 218h1v6h-1zM495 217h1v4h-1zM496 216h2v3h-2zM498 216h5v2h-5zM503 216h1v3h-1zM504 216h1v4h-1zM505 217h1v3h-1zM506 217h3v2h-3zM509 217h1v3h-1zM510 217h1v4h-1zM511 218h1v3h-1zM512 219h27v2h-27zM539 219h1v3h-1zM540 219h1v4h-1zM541 220h1v3h-1zM542 221h19v2h-19zM561 221h2v3h-2zM563 222h23v2h-23zM586 222h1v3h-1zM587 223h26v2h-26zM613 223h1v3h-1zM614 224h12v2h-12zM626 223h2v3h-2zM628 223h7v2h-7zM635 223h2v3h-2zM637 224h12v2h-12zM649 224h2v3h-2zM651 225h15v2h-15zM666 225h2v3h-2zM668 226h13v2h-13zM681 226h1v3h-1zM682 227h11v2h-11zM693 227h2v3h-2zM695 228h10v2h-10zM705 228h2v3h-2zM707 229h13v2h-13zM720 229h2v3h-2zM722 230h7v2h-7zM729 230h2v3h-2zM731 231h7v2h-7zM738 231h2v3h-2zM740 232h6v2h-6zM746 232h2v3h-2zM748 233h10v2h-10zM758 233h1v4h-1zM759 233h1v8h-1zM760 235h1v9h-1zM761 239h1v5h-1zM762 242h3v2h-3zM765 239h1v5h-1zM766 238h1v6h-1zM767 238h1v5h-1zM768 241h3v2h-3zM771 239h2v4h-2zM773 240h1v3h-1zM774 241h11v2h-11zM785 241h2v3h-2zM787 242h4v2h-4zM791 239h2v5h-2zM793 239h1v3h-1zM794 240h1v2h-1zM795 240h2v3h-2zM797 241h4v2h-4zM801 241h2v3h-2zM803 242h8v2h-8zM811 239h2v5h-2zM813 239h1v3h-1zM814 240h3v2h-3zM817 240h2v3h-2zM819 241h4v2h-4zM823 241h1v3h-1zM824 242h5v2h-5zM829 242h2v3h-2zM831 243h5v2h-5zM836 243h2v3h-2zM838 244h6v2h-6zM844 244h1v3h-1zM845 245h8v2h-8zM853 245h2v3h-2zM855 246h8v2h-8zM863 246h1v3h-1zM864 247h12v2h-12zM876 247h2v3h-2zM878 248h11v2h-11zM889 248h2v3h-2zM891 249h13v2h-13zM904 249h2v3h-2zM906 250h10v2h-10zM916 250h2v3h-2zM918 251h9v2h-9zM927 251h2v3h-2zM929 252h9v2h-9zM938 252h2v3h-2zM940 253h28v2h-28zM968 253h2v3h-2zM970 254h28v2h-28zM998 254h2v3h-2zM1000 255h42v2h-42zM1042 255h2v3h-2zM1044 256h62v2h-62zM1106 256h2v3h-2zM1108 257h210v2h-210zM1318 257h2v3h-2zM1320 258h49v2h-49zM1369 257h1v3h-1zM1370 256h1v4h-1zM1371 256h1v3h-1zM1372 256h8v2h-8zM1380 255h3v3h-3zM1383 256h5v2h-5zM1388 256h1v3h-1zM1389 256h1v4h-1zM1390 257h1v3h-1zM1391 258h18v2h-18zM1409 257h1v3h-1zM1410 256h1v4h-1zM1411 256h1v3h-1zM1412 256h29v2h-29zM1441 256h2v3h-2zM1443 257h85v2h-85zM1528 257h1v3h-1zM1529 257h1v5h-1zM1530 259h1v3h-1zM1531 260h1v2h-1zM1532 259h1v3h-1zM1533 259h5v2h-5zM1538 259h2v3h-2zM1540 260h186v2h-186zM1726 260h1v3h-1zM1727 261h24v2h-24z"/>
<path fill="#7ed321" d="M3 429h72v1h-72zM75 429h1v2h-1zM76 429h48v1h-48zM124 429h1v2h-1zM125 429h6v1h-6zM131 429h1v2h-1zM132 429h17v1h-17zM149 428h1v2h-1zM150 429h21v1h-21zM171 429h1v2h-1zM172 429h13v1h-13zM185 428h1v2h-1zM186 429h1v2h-1zM187 429h2v1h-2zM189 429h1v2h-1zM190 429h12v1h-12zM202 428h1v2h-1zM203 429h53v1h-53zM256 428h1v2h-1zM257 429h66v1h-66zM323 428h1v2h-1zM324 429h6v1h-6zM330 428h1v2h-1zM331 429h3v1h-3zM334 428h1v2h-1zM335 429h14v1h-14zM349 429h1v2h-1zM350 429h40v1h-40zM390 429h1v2h-1zM391 429h3v1h-3zM394 429h1v2h-1zM395 429h12v1h-12zM407 429h1v2h-1zM408 429h12v1h-12zM420 429h1v2h-1zM421 429h2v1h-2zM423 429h1v2h-1zM424 428h1v2h-1zM425 429h24v1h-24zM449 429h1v2h-1zM450 429h5v1h-5zM455 429h1v2h-1zM456 429h13v1h-13zM469 429h1v2h-1zM470 429h24v1h-24zM494 428h1v2h-1zM495 429h63v1h-63zM558 429h1v2h-1zM559 429h42v1h-42zM601 428h1v2h-1zM602 429h12v1h-12zM614 428h1v2h-1zM615 429h7v1h-7zM622 429h1v2h-1zM623 429h5v1h-5zM628 428h1v2h-1zM629 429h34v1h-34zM663 428h1v2h-1zM664 429h21v1h-21zM685 429h1v2h-1zM686 429h5v1h-5zM691 429h1v2h-1zM692 428h1v2h-1zM693 429h1v1h-1zM694 429h1v2h-1zM695 429h28v1h-28zM723 429h1v2h-1zM724 429h22v1h-22zM746 428h1v2h-1zM747 429h5v1h-5zM752 428h1v2h-1zM753 429h56v1h-56zM809 428h1v2h-1zM810 429h22v1h-22zM832 428h1v2h-1zM833 429h23v1h-23zM856 429h1v2h-1zM857 429h3v1h-3zM860 429h1v2h-1zM861 429h26v1h-26zM887 429h1v2h-1zM888 429h1v1h-1zM889 428h1v2h-1zM890 429h38v1h-38zM928 428h1v2h-1zM929 429h51v1h-51zM980 428h1v2h-1zM981 429h15v1h-15zM996 429h1v2h-1zM997 429h6v1h-6zM1003 429h1v2h-1zM1004 429h10v1h-10zM1014 429h1v2h-1zM1015 429h36v1h-36zM1051 429h2v2h-2zM1053 429h2v1h-2zM1055 428h1v2h-1zM1056 429h53v1h-53zM1109 428h1v2h-1zM1110 429h8v1h-8zM1118 428h1v2h-1zM1119 429h11v1h-11zM1130 429h1v2h-1zM1131 429h9v1h-9zM1140 428h1v2h-1zM1141 429h2v1h-2zM1143 428h1v2h-1zM1144 429h3v1h-3zM1147 428h1v2h-1zM1148 429h13v1h-13zM1161 429h1v2h-1zM1162 429h29v1h-29zM1191 428h2v2h-2zM1193 429h16v1h-16zM1209 429h1v2h-1zM1210 429h15v1h-15zM1225 428h1v2h-1zM1226 429h1v1h-1zM1227 428h1v2h-1zM1228 429h22v1h-22zM1250 429h1v2h-1zM1251 429h8v1h-8zM1259 428h1v2h-1zM1260 429h13v1h-13zM1273 429h1v2h-1zM1274 429h83v1h-83zM1357 429h1v2h-1zM1358 429h28v1h-28zM1386 428h1v2h-1zM1387 429h24v1h-24zM1411 428h1v2h-1zM1412 429h2v1h-2zM1414 428h1v2h-1zM1415 429h23v1h-23zM1438 429h1v2h-1zM1439 429h8v1h-8zM1447 429h1v2h-1zM1448 428h1v2h-1zM1449 429h31v1h-31zM1480 428h1v2h-1zM1481 429h64v1h-64zM1545 428h1v2h-1zM1546 429h74v1h-74zM1620 429h1v2h-1zM1621 429h26v1h-26zM1647 428h1v2h-1zM1648 429h39v1h-39zM1687 428h1v2h-1zM1688 429h9v1h-9zM1697 429h1v2h-1zM1698 429h8v1h-8zM1706 429h1v2h-1zM1707 429h5v1h-5zM1712 428h1v2h-1zM1713 429h35v1h-35zM1748 428h1v2h-1zM1749 429h2v1h-2z"/>
<path fill="#f39020" d="M3 735h52v1h-52zM55 734h1v2h-1zM56 734h2v1h-2zM58 733h2v1h-2zM60 732h1v2h-1zM61 732h2v1h-2zM63 731h1v2h-1zM64 731h3v1h-3zM67 730h1v2h-1zM68 730h3v1h-3zM71 729h1v2h-1zM72 729h3v1h-3zM75 728h3v1h-3zM78 727h1v2h-1zM79 727h3v1h-3zM82 726h1v2h-1zM83 726h3v1h-3zM86 725h3v1h-3zM89 724h1v2h-1zM90 724h3v1h-3zM93 723h1v2h-1zM94 723h3v1h-3zM97 722h4v1h-4zM101 721h3v1h-3zM104 720h1v2h-1zM105 720h3v1h-3zM108 719h1v2h-1zM109 719h2v1h-2zM111 718h1v2h-1zM112 718h3v1h-3zM115 717h1v2h-1zM116 717h3v1h-3zM119 716h1v2h-1zM120 716h3v1h-3zM123 715h4v1h-4zM127 714h3v1h-3zM130 713h1v2h-1zM131 713h3v1h-3zM134 712h1v2h-1zM135 712h3v1h-3zM138 711h1v2h-1zM139 711h3v1h-3zM142 710h1v2h-1zM143 710h3v1h-3zM146 709h1v2h-1zM147 709h3v1h-3zM150 708h4v1h-4zM154 707h4v1h-4zM158 706h3v1h-3zM161 705h1v2h-1zM162 705h3v1h-3zM165 704h1v2h-1zM166 704h3v1h-3zM169 703h1v2h-1zM170 703h3v1h-3zM173 702h1v2h-1zM174 702h4v1h-4zM178 701h3v1h-3zM181 700h1v2h-1zM182 700h4v1h-4zM186 699h4v1h-4zM190 698h4v1h-4zM194 697h4v1h-4zM198 696h1v2h-1zM199 696h3v1h-3zM202 695h1v2h-1zM203 695h3v1h-3zM206 694h1v2h-1zM207 694h3v1h-3zM210 693h1v2h-1zM211 693h4v1h-4zM215 692h4v1h-4zM219 691h1v2h-1zM220 691h3v1h-3zM223 690h1v2h-1zM224 690h3v1h-3zM227 689h1v2h-1zM228 689h3v1h-3zM231 688h1v2h-1zM232 688h4v1h-4zM236 687h4v1h-4zM240 686h1v2h-1zM241 686h3v1h-3zM244 685h1v2h-1zM245 685h3v1h-3zM248 684h1v2h-1zM249 684h4v1h-4zM253 683h1v2h-1zM254 683h3v1h-3zM257 682h1v2h-1zM258 682h4v1h-4zM262 681h4v1h-4zM266 680h1v2h-1zM267 680h3v1h-3zM270 679h1v2h-1zM271 679h4v1h-4zM275 678h1v2h-1zM276 678h3v1h-3zM279 677h1v2h-1zM280 677h4v1h-4zM284 676h1v2h-1zM285 676h3v1h-3zM288 675h1v2h-1zM289 675h4v1h-4zM293 674h1v2h-1zM294 674h3v1h-3zM297 673h1v2h-1zM298 673h4v1h-4zM302 672h1v2h-1zM303 672h3v1h-3zM306 671h1v2h-1zM307 671h4v1h-4zM311 670h1v2h-1zM312 670h4v1h-4zM316 669h4v1h-4zM320 668h1v2h-1zM321 668h4v1h-4zM325 667h4v1h-4zM329 666h1v2h-1zM330 666h4v1h-4zM334 665h5v1h-5zM339 664h4v1h-4zM343 663h1v2h-1zM344 663h4v1h-4zM348 662h4v1h-4zM352 661h1v2h-1zM353 661h4v1h-4zM357 660h1v2h-1zM358 660h4v1h-4zM362 659h5v1h-5zM367 658h4v1h-4zM371 657h1v2h-1zM372 657h4v1h-4zM376 656h1v2h-1zM377 656h4v1h-4zM381 655h5v1h-5zM386 654h4v1h-4zM390 653h1v2h-1zM391 653h4v1h-4zM395 652h1v2h-1zM396 652h4v1h-4zM400 651h1v2h-1zM401 651h4v1h-4zM405 650h1v2h-1zM406 650h4v1h-4zM410 649h4v1h-4zM414 648h1v2h-1zM415 648h4v1h-4zM419 647h1v2h-1zM420 647h4v1h-4zM424 646h1v2h-1zM425 646h4v1h-4zM429 645h1v2h-1zM430 645h4v1h-4zM434 644h5v1h-5zM439 643h4v1h-4zM443 642h1v2h-1zM444 642h5v1h-5zM449 641h4v1h-4zM453 640h1v2h-1zM454 640h5v1h-5zM459 639h4v1h-4zM463 638h1v2h-1zM464 638h5v1h-5zM469 637h5v1h-5zM474 636h5v1h-5zM479 635h5v1h-5zM484 634h5v1h-5zM489 633h1v2h-1zM490 633h4v1h-4zM494 632h1v2h-1zM495 632h5v1h-5zM500 631h5v1h-5zM505 630h5v1h-5zM510 629h1v2h-1zM511 629h5v1h-5zM516 628h1v2h-1zM517 628h4v1h-4zM521 627h1v2h-1zM522 627h5v1h-5zM527 626h1v2h-1zM528 626h4v1h-4zM532 625h1v2h-1zM533 625h5v1h-5zM538 624h1v2h-1zM539 624h5v1h-5zM544 623h5v1h-5zM549 622h1v2h-1zM550 622h5v1h-5zM555 621h1v2h-1zM556 621h5v1h-5zM561 620h6v1h-6zM567 619h5v1h-5zM572 618h1v2h-1zM573 618h5v1h-5zM578 617h1v2h-1zM579 617h5v1h-5zM584 616h6v1h-6zM590 615h5v1h-5zM595 614h1v2h-1zM596 614h5v1h-5zM601 613h1v2h-1zM602 613h5v1h-5zM607 612h5v1h-5zM612 611h1v2h-1zM613 611h6v1h-6zM619 610h5v1h-5zM624 609h1v2h-1zM625 609h5v1h-5zM630 608h1v2h-1zM631 608h5v1h-5zM636 607h1v2h-1zM637 607h5v1h-5zM642 606h1v2h-1zM643 606h5v1h-5zM648 605h1v2h-1zM649 605h5v1h-5zM654 604h1v2h-1zM655 604h5v1h-5zM660 603h1v2h-1zM661 603h6v1h-6zM667 602h1v2h-1zM668 602h5v1h-5zM673 601h1v2h-1zM674 601h5v1h-5zM679 600h1v2h-1zM680 600h6v1h-6zM686 599h1v2h-1zM687 599h5v1h-5zM692 598h1v2h-1zM693 598h6v1h-6zM699 597h7v1h-7zM706 596h6v1h-6zM712 595h1v2h-1zM713 595h6v1h-6zM719 594h7v1h-7zM726 593h7v1h-7zM733 592h6v1h-6zM739 591h1v2h-1zM740 591h6v1h-6zM746 590h1v2h-1zM747 590h7v1h-7zM754 589h1v2h-1zM755 589h6v1h-6zM761 588h1v2h-1zM762 588h6v1h-6zM768 587h1v2h-1zM769 587h7v1h-7zM776 586h7v1h-7zM783 585h1v2h-1zM784 585h7v1h-7zM791 584h7v1h-7zM798 583h1v2h-1zM799 583h7v1h-7zM806 582h1v2h-1zM807 582h7v1h-7zM814 581h1v2h-1zM815 581h7v1h-7zM822 580h1v2h-1zM823 580h8v1h-8zM831 579h1v2h-1zM832 579h8v1h-8zM840 578h1v2h-1zM841 578h8v1h-8zM849 577h1v2h-1zM850 577h8v1h-8zM858 576h1v2h-1zM859 576h9v1h-9zM868 575h1v2h-1zM869 575h10v1h-10zM879 574h10v1h-10zM889 573h1v2h-1zM890 573h10v1h-10zM900 572h1v2h-1zM901 572h10v1h-10zM911 571h1v2h-1zM912 571h10v1h-10zM922 570h1v2h-1zM923 570h10v1h-10zM933 569h1v2h-1zM934 569h10v1h-10zM944 568h1v2h-1zM945 568h10v1h-10zM955 567h1v2h-1zM956 567h11v1h-11zM967 566h11v1h-11zM978 565h1v2h-1zM979 565h11v1h-11zM990 564h1v2h-1zM991 564h12v1h-12zM1003 563h13v1h-13zM1016 562h1v2h-1zM1017 562h13v1h-13zM1030 561h14v1h-14zM1044 560h1v2h-1zM1045 560h15v1h-15zM1060 559h1v2h-1zM1061 559h16v1h-16zM1077 558h1v2h-1zM1078 558h17v1h-17zM1095 557h18v1h-18zM1113 556h1v2h-1zM1114 556h19v1h-19zM1133 555h1v2h-1zM1134 555h21v1h-21zM1155 554h23v1h-23zM1178 553h1v2h-1zM1179 553h24v1h-24zM1203 552h1v2h-1zM1204 552h27v1h-27zM1231 551h1v2h-1zM1232 551h31v1h-31zM1263 550h1v2h-1zM1264 550h43v1h-43zM1307 549h1v2h-1zM1308 549h176v1h-176zM1484 549h1v2h-1zM1485 550h43v1h-43zM1528 551h38v1h-38zM1566 551h1v2h-1zM1567 552h33v1h-33zM1600 552h1v2h-1zM1601 553h29v1h-29zM1630 553h1v2h-1zM1631 554h24v1h-24zM1655 554h1v2h-1zM1656 555h21v1h-21zM1677 555h1v2h-1zM1678 556h20v1h-20zM1698 556h1v2h-1zM1699 557h18v1h-18zM1717 557h1v2h-1zM1718 558h18v1h-18zM1736 559h15v1h-15z"/>
<path fill="#7a2e9c" d="M3 923h5v2h-5z"/>
<path fill="#7a2e9c" d="M42 920h3v2h-3zM45 919h2v3h-2zM47 920h1v2h-1zM48 919h1v3h-1zM49 920h6v2h-6zM55 894h1v33h-1zM56 919h1v39h-1zM57 911h1v10h-1zM58 911h1v18h-1zM59 914h1v16h-1zM60 914h1v8h-1zM61 918h1v8h-1zM62 920h1v6h-1zM63 915h1v6h-1zM64 915h1v3h-1zM65 916h1v3h-1zM66 917h1v5h-1zM67 921h1v5h-1zM68 923h1v3h-1zM69 921h1v4h-1zM70 920h1v4h-1zM71 918h1v4h-1zM72 918h1v3h-1zM73 919h1v3h-1zM74 920h1v3h-1zM75 921h1v2h-1zM76 920h1v3h-1zM77 920h1v2h-1zM78 918h1v4h-1zM79 919h2v2h-2zM81 920h1v2h-1zM82 894h1v77h-1zM83 936h1v35h-1zM84 936h1v28h-1zM85 930h1v33h-1zM86 931h1v26h-1zM87 936h1v20h-1zM88 936h1v13h-1zM89 939h1v10h-1zM90 938h1v6h-1zM91 942h1v6h-1zM92 944h1v3h-1zM93 942h1v3h-1zM94 940h1v3h-1zM95 938h1v4h-1zM96 939h1v2h-1zM97 938h1v4h-1zM98 936h1v4h-1zM99 937h1v3h-1zM100 936h1v3h-1zM101 935h1v3h-1zM102 933h1v4h-1zM103 934h1v7h-1zM104 936h1v4h-1zM105 933h1v4h-1zM106 925h1v11h-1zM107 925h1v14h-1zM108 932h1v3h-1zM109 932h1v2h-1zM110 931h1v3h-1zM111 931h4v2h-4zM115 930h2v3h-2zM117 930h1v2h-1zM118 929h1v4h-1zM119 928h1v3h-1zM120 929h1v2h-1zM121 928h1v4h-1zM122 927h2v3h-2zM124 928h1v2h-1zM125 927h1v3h-1zM126 927h2v2h-2zM128 926h1v2h-1zM129 925h1v3h-1zM130 926h1v3h-1zM131 925h3v2h-3zM134 923h2v3h-2zM136 924h1v2h-1zM137 922h1v3h-1zM138 923h2v2h-2zM140 922h1v3h-1zM141 922h2v2h-2zM143 921h1v3h-1zM144 921h2v2h-2zM146 919h1v4h-1zM147 919h1v3h-1zM148 920h1v2h-1zM149 920h1v3h-1zM150 919h1v3h-1zM151 919h2v2h-2zM153 918h2v3h-2zM155 918h2v2h-2zM157 918h1v3h-1zM158 917h3v3h-3zM161 916h1v3h-1zM162 917h1v2h-1zM163 916h1v3h-1zM164 915h2v3h-2zM166 916h2v2h-2zM168 915h1v3h-1zM169 914h1v4h-1zM170 915h5v2h-5zM175 914h1v3h-1zM176 914h2v2h-2zM178 913h2v3h-2zM180 914h1v3h-1zM181 914h2v2h-2zM183 913h1v3h-1zM184 913h3v2h-3zM187 912h1v3h-1zM188 913h2v2h-2zM190 912h2v3h-2zM192 912h3v2h-3zM195 911h1v3h-1zM196 912h4v2h-4zM200 910h1v4h-1zM201 911h3v2h-3zM204 910h3v3h-3zM207 911h2v2h-2zM209 910h1v2h-1zM210 909h1v3h-1zM211 910h1v3h-1zM212 910h4v2h-4zM216 910h1v3h-1zM217 910h1v2h-1zM218 909h3v2h-3zM221 909h1v3h-1zM222 909h4v2h-4zM226 909h1v3h-1zM227 907h1v4h-1zM228 908h3v2h-3zM231 907h1v3h-1zM232 908h4v2h-4zM236 907h1v3h-1zM237 908h1v3h-1zM238 908h7v2h-7zM245 908h1v3h-1zM246 908h2v2h-2zM248 907h1v3h-1zM249 907h1v2h-1zM250 906h1v3h-1zM251 907h12v2h-12zM263 907h1v3h-1zM264 907h2v2h-2zM266 906h1v3h-1zM267 907h8v2h-8zM275 905h1v4h-1zM276 904h1v3h-1zM277 902h1v4h-1zM278 901h1v3h-1zM279 900h1v3h-1zM280 898h1v3h-1zM281 897h1v4h-1zM282 896h1v4h-1zM283 895h1v4h-1zM284 897h1v3h-1zM285 898h1v4h-1zM286 900h1v3h-1zM287 900h1v4h-1zM288 902h1v4h-1zM289 904h1v3h-1zM290 904h1v4h-1zM291 906h1v2h-1zM292 906h1v3h-1zM293 906h2v2h-2zM295 907h3v2h-3zM298 907h1v3h-1zM299 907h1v2h-1zM300 907h1v3h-1zM301 907h1v2h-1zM302 906h1v3h-1zM303 907h1v3h-1zM304 907h4v2h-4zM308 906h2v3h-2zM310 906h9v2h-9zM319 905h1v3h-1zM320 906h3v2h-3zM323 905h1v3h-1zM324 906h1v2h-1zM325 905h1v3h-1zM326 906h4v2h-4zM330 905h1v3h-1zM331 905h1v2h-1zM332 905h1v3h-1zM333 904h1v3h-1zM334 905h2v2h-2zM336 905h2v3h-2zM338 905h4v2h-4zM342 905h1v3h-1zM343 905h1v2h-1zM344 904h1v3h-1zM345 905h1v2h-1zM346 904h1v3h-1zM347 905h2v2h-2zM349 904h1v3h-1zM350 904h1v4h-1zM351 904h3v2h-3zM354 903h1v3h-1zM355 904h2v2h-2zM357 903h1v3h-1zM358 904h1v2h-1zM359 903h1v3h-1zM360 904h6v2h-6zM366 904h1v3h-1zM367 904h1v2h-1zM368 903h1v3h-1zM369 904h1v3h-1zM370 904h3v2h-3zM373 904h1v3h-1zM374 904h6v2h-6zM380 904h1v3h-1zM381 904h1v2h-1zM382 903h1v3h-1zM383 904h1v2h-1zM384 904h1v3h-1zM385 904h1v2h-1zM386 903h1v3h-1zM387 904h6v2h-6zM393 903h1v3h-1zM394 904h1v3h-1zM395 904h5v2h-5zM400 903h1v3h-1zM401 904h1v3h-1zM402 903h1v3h-1zM403 904h2v2h-2zM405 903h1v3h-1zM406 904h3v2h-3zM409 904h1v3h-1zM410 904h1v2h-1zM411 904h1v3h-1zM412 904h1v2h-1zM413 903h2v3h-2zM415 904h1v3h-1zM416 904h6v2h-6zM422 904h1v3h-1zM423 904h6v2h-6zM429 903h1v3h-1zM430 904h3v2h-3zM433 904h1v3h-1zM434 904h11v2h-11zM445 903h1v3h-1zM446 904h7v2h-7zM453 874h1v33h-1zM454 873h1v3h-1zM455 873h1v4h-1zM456 875h1v2h-1zM457 875h1v3h-1zM458 876h1v2h-1zM459 876h1v26h-1zM460 884h1v18h-1zM461 885h1v2h-1zM462 885h1v3h-1zM463 885h1v2h-1zM464 885h1v3h-1zM465 885h1v2h-1zM466 884h2v3h-2zM468 885h2v2h-2zM470 885h2v3h-2zM472 885h2v2h-2zM474 885h1v3h-1zM475 885h2v2h-2zM477 885h2v3h-2zM479 886h1v3h-1zM480 885h2v3h-2zM482 886h6v2h-6zM488 885h1v3h-1zM489 886h1v2h-1zM490 886h1v3h-1zM491 885h2v3h-2zM493 886h1v3h-1zM494 887h1v24h-1zM495 909h1v7h-1zM496 914h1v8h-1zM497 920h1v7h-1zM498 924h1v3h-1zM499 924h1v2h-1zM500 923h1v2h-1zM501 922h1v2h-1zM502 921h1v4h-1zM503 909h1v14h-1zM504 909h1v7h-1zM505 914h4v2h-4zM509 912h1v4h-1zM510 913h3v2h-3zM513 912h2v3h-2zM515 913h3v2h-3zM518 913h1v3h-1zM519 911h1v3h-1zM520 912h2v2h-2zM522 911h1v3h-1zM523 912h5v2h-5zM528 911h3v2h-3zM531 910h1v3h-1zM532 911h1v2h-1zM533 910h1v3h-1zM534 911h2v2h-2zM536 911h1v3h-1zM537 910h1v3h-1zM538 910h1v2h-1zM539 910h1v3h-1zM540 902h1v10h-1zM541 901h1v3h-1zM542 902h3v2h-3zM545 902h1v3h-1zM546 901h1v3h-1zM547 902h5v2h-5zM552 901h1v3h-1zM553 902h1v2h-1zM554 902h1v3h-1zM555 901h1v3h-1zM556 902h2v3h-2zM558 902h1v2h-1zM559 902h1v3h-1zM560 902h7v2h-7zM567 901h2v3h-2zM569 902h8v2h-8zM577 901h1v3h-1zM578 902h2v2h-2zM580 901h1v4h-1zM581 902h1v2h-1zM582 901h1v3h-1zM583 902h1v2h-1zM584 901h1v3h-1zM585 902h6v2h-6zM591 901h1v3h-1zM592 902h4v2h-4zM596 901h1v3h-1zM597 902h5v2h-5zM602 901h1v3h-1zM603 902h2v2h-2zM605 901h1v3h-1zM606 902h1v2h-1zM607 902h1v3h-1zM608 902h1v2h-1zM609 902h1v3h-1zM610 902h3v2h-3zM613 902h1v3h-1zM614 901h1v3h-1zM615 902h5v2h-5zM620 901h1v3h-1zM621 902h1v2h-1zM622 903h4v2h-4zM626 902h2v3h-2zM628 903h1v15h-1zM629 914h1v3h-1zM630 915h1v2h-1zM631 914h1v3h-1zM632 914h2v2h-2zM634 904h1v12h-1zM635 904h1v8h-1zM636 910h3v2h-3zM639 909h2v3h-2zM641 910h1v2h-1zM642 909h2v3h-2zM644 909h1v2h-1zM645 909h1v3h-1zM646 909h8v2h-8zM654 908h1v3h-1zM655 909h1v2h-1zM656 908h1v3h-1zM657 908h7v2h-7zM664 907h1v3h-1zM665 908h3v2h-3zM668 908h1v3h-1zM669 907h1v4h-1zM670 907h1v3h-1zM671 907h2v2h-2zM673 906h2v3h-2zM675 907h2v2h-2zM677 906h1v3h-1zM678 907h2v2h-2zM680 906h1v3h-1zM681 907h1v2h-1zM682 906h1v3h-1zM683 906h4v2h-4zM687 906h1v3h-1zM688 906h8v2h-8zM696 905h3v3h-3zM699 905h8v2h-8zM707 904h1v3h-1zM708 905h2v3h-2zM710 903h1v4h-1zM711 903h2v3h-2zM713 904h1v2h-1zM714 903h1v3h-1zM715 904h1v2h-1zM716 904h3v3h-3zM719 904h6v2h-6zM725 903h3v2h-3zM728 902h1v3h-1zM729 903h3v2h-3zM732 902h1v3h-1zM733 903h1v2h-1zM734 902h1v3h-1zM735 903h2v2h-2zM737 899h1v7h-1zM738 899h1v3h-1zM739 899h1v2h-1zM740 898h1v3h-1zM741 899h1v2h-1zM742 899h1v3h-1zM743 899h3v2h-3zM746 899h2v3h-2zM748 900h1v2h-1zM749 899h1v3h-1zM750 900h1v2h-1zM751 899h2v3h-2zM753 900h1v3h-1zM754 900h1v2h-1zM755 899h1v3h-1zM756 898h1v3h-1zM757 873h1v27h-1zM758 847h1v27h-1zM759 847h1v2h-1zM760 847h1v3h-1zM761 847h1v2h-1zM762 846h1v3h-1zM763 847h1v2h-1zM764 847h1v12h-1zM765 857h1v13h-1zM766 854h1v17h-1zM767 854h1v2h-1zM768 854h1v3h-1zM769 854h2v2h-2zM771 854h1v15h-1zM772 860h1v10h-1zM773 860h5v2h-5zM778 860h1v3h-1zM779 861h3v2h-3zM782 860h1v3h-1zM783 861h1v2h-1zM784 862h1v2h-1zM785 861h1v3h-1zM786 862h1v2h-1zM787 861h1v3h-1zM788 862h2v3h-2zM790 863h1v2h-1zM791 863h1v25h-1zM792 885h1v4h-1zM793 885h1v2h-1zM794 884h1v2h-1zM795 883h1v3h-1zM796 882h1v3h-1zM797 882h1v2h-1zM798 881h1v2h-1zM799 880h1v3h-1zM800 880h1v2h-1zM801 879h1v4h-1zM802 879h3v2h-3zM805 877h1v4h-1zM806 878h1v2h-1zM807 877h2v3h-2zM809 877h3v2h-3zM812 877h1v25h-1zM813 899h1v3h-1zM814 899h1v2h-1zM815 897h2v3h-2zM817 896h1v3h-1zM818 896h1v2h-1zM819 895h1v3h-1zM820 895h1v2h-1zM821 894h1v3h-1zM822 894h2v2h-2zM824 893h1v3h-1zM825 893h2v2h-2zM827 892h1v2h-1zM828 892h1v3h-1zM829 892h1v2h-1zM830 891h1v3h-1zM831 891h8v2h-8zM839 891h1v3h-1zM840 891h2v2h-2zM842 891h1v3h-1zM843 890h2v3h-2zM845 891h1v2h-1zM846 890h1v3h-1zM847 890h1v2h-1zM848 890h1v3h-1zM849 889h1v3h-1zM850 890h2v3h-2zM852 890h1v2h-1zM853 890h1v3h-1zM854 890h3v2h-3zM857 889h1v3h-1zM858 890h1v2h-1zM859 889h2v3h-2zM861 890h1v2h-1zM862 889h1v3h-1zM863 890h1v2h-1zM864 889h1v3h-1zM865 890h4v2h-4zM869 890h1v3h-1zM870 890h1v2h-1zM871 890h1v3h-1zM872 890h4v2h-4zM876 890h1v3h-1zM877 890h4v2h-4zM881 889h1v3h-1zM882 890h1v2h-1zM883 890h1v3h-1zM884 889h2v3h-2zM886 890h4v2h-4zM890 889h1v3h-1zM891 890h1v2h-1zM892 890h1v3h-1zM893 890h3v2h-3zM896 890h2v3h-2zM898 890h5v2h-5zM903 889h1v3h-1zM904 890h3v2h-3zM907 890h2v3h-2zM909 890h3v2h-3zM912 890h1v3h-1zM913 890h1v2h-1zM914 890h1v3h-1zM915 890h1v2h-1zM916 889h1v3h-1zM917 890h3v2h-3zM920 889h2v3h-2zM922 890h2v2h-2zM924 889h2v3h-2zM926 890h1v3h-1zM927 890h1v2h-1zM928 889h1v3h-1zM929 890h2v2h-2zM931 889h1v3h-1zM932 889h2v2h-2zM934 889h1v3h-1zM935 889h2v2h-2zM937 888h2v3h-2zM939 889h2v2h-2zM941 888h1v3h-1zM942 889h1v3h-1zM943 889h1v2h-1zM944 889h1v3h-1zM945 888h1v4h-1zM946 888h4v2h-4zM950 887h1v3h-1zM951 888h4v2h-4zM955 887h1v3h-1zM956 888h3v2h-3zM959 886h1v3h-1zM960 887h7v2h-7zM967 886h1v3h-1zM968 887h4v2h-4zM972 886h1v3h-1zM973 886h1v2h-1zM974 886h1v3h-1zM975 885h1v3h-1zM976 886h2v3h-2zM978 886h1v2h-1zM979 886h2v3h-2zM981 886h3v2h-3zM984 885h1v3h-1zM985 886h1v2h-1zM986 885h1v3h-1zM987 885h6v2h-6zM993 884h1v3h-1zM994 885h2v2h-2zM996 885h1v3h-1zM997 885h2v2h-2zM999 885h1v3h-1zM1000 884h2v3h-2zM1002 883h1v3h-1zM1003 884h2v2h-2zM1005 883h1v3h-1zM1006 884h2v2h-2zM1008 883h1v3h-1zM1009 883h2v2h-2zM1011 882h1v3h-1zM1012 883h5v2h-5zM1017 882h4v2h-4zM1021 882h1v3h-1zM1022 882h3v2h-3zM1025 881h2v3h-2zM1027 881h4v2h-4zM1031 880h1v3h-1zM1032 881h2v2h-2zM1034 880h1v2h-1zM1035 879h1v3h-1zM1036 880h2v3h-2zM1038 880h4v2h-4zM1042 879h1v3h-1zM1043 879h4v2h-4zM1047 879h1v3h-1zM1048 879h1v2h-1zM1049 878h1v3h-1zM1050 879h1v2h-1zM1051 878h5v2h-5zM1056 878h1v3h-1zM1057 878h2v2h-2zM1059 877h1v2h-1zM1060 876h2v3h-2zM1062 877h5v2h-5zM1067 876h1v3h-1zM1068 876h2v2h-2zM1070 875h1v3h-1zM1071 876h1v2h-1zM1072 875h2v3h-2zM1074 876h1v2h-1zM1075 876h1v3h-1zM1076 874h1v3h-1zM1077 875h7v2h-7zM1084 873h1v4h-1zM1085 874h4v2h-4zM1089 874h1v3h-1zM1090 874h2v2h-2zM1092 873h1v3h-1zM1093 873h8v2h-8zM1101 872h1v4h-1zM1102 872h1v3h-1zM1103 871h1v3h-1zM1104 872h5v2h-5zM1109 870h1v3h-1zM1110 871h1v3h-1zM1111 870h1v3h-1zM1112 871h4v2h-4zM1116 870h3v3h-3zM1119 870h4v2h-4zM1123 868h1v4h-1zM1124 869h4v2h-4zM1128 868h1v3h-1zM1129 869h2v2h-2zM1131 868h1v2h-1zM1132 867h1v3h-1zM1133 868h2v2h-2zM1135 867h1v3h-1zM1136 868h1v2h-1zM1137 867h3v3h-3zM1140 867h1v2h-1zM1141 867h1v3h-1zM1142 867h1v2h-1zM1143 866h1v3h-1zM1144 867h1v3h-1zM1145 866h2v3h-2zM1147 866h3v2h-3zM1150 866h1v3h-1zM1151 865h1v3h-1zM1152 864h1v4h-1zM1153 865h4v2h-4zM1157 864h1v3h-1zM1158 865h1v2h-1zM1159 864h1v3h-1zM1160 864h2v2h-2zM1162 864h1v3h-1zM1163 864h3v2h-3zM1166 864h1v3h-1zM1167 862h1v4h-1zM1168 863h1v2h-1zM1169 862h1v3h-1zM1170 863h4v2h-4zM1174 861h1v4h-1zM1175 862h1v2h-1zM1176 862h2v3h-2zM1178 862h4v2h-4zM1182 861h4v2h-4zM1186 861h2v3h-2zM1188 861h1v2h-1zM1189 860h1v3h-1zM1190 860h6v2h-6zM1196 859h1v3h-1zM1197 859h1v2h-1zM1198 859h1v3h-1zM1199 858h1v3h-1zM1200 859h1v2h-1zM1201 859h1v3h-1zM1202 859h1v2h-1zM1203 858h1v2h-1zM1204 857h1v3h-1zM1205 858h1v2h-1zM1206 858h2v3h-2zM1208 858h1v2h-1zM1209 857h1v3h-1zM1210 857h4v2h-4zM1214 857h1v3h-1zM1215 856h1v4h-1zM1216 856h2v2h-2zM1218 856h2v3h-2zM1220 856h2v2h-2zM1222 854h1v3h-1zM1223 855h1v2h-1zM1224 854h1v3h-1zM1225 855h1v3h-1zM1226 855h2v2h-2zM1228 854h1v3h-1zM1229 854h2v2h-2zM1231 853h2v3h-2zM1233 854h2v2h-2zM1235 853h2v2h-2zM1237 852h1v3h-1zM1238 853h2v2h-2zM1240 852h1v3h-1zM1241 852h4v2h-4zM1245 851h1v3h-1zM1246 852h1v2h-1zM1247 851h1v4h-1zM1248 851h1v2h-1zM1249 851h1v3h-1zM1250 851h1v2h-1zM1251 851h1v3h-1zM1252 850h2v3h-2zM1254 849h1v3h-1zM1255 850h5v2h-5zM1260 849h1v2h-1zM1261 848h1v3h-1zM1262 849h1v2h-1zM1263 848h1v3h-1zM1264 849h1v3h-1zM1265 849h1v2h-1zM1266 848h1v3h-1zM1267 848h2v2h-2zM1269 848h1v3h-1zM1270 848h2v2h-2zM1272 847h1v3h-1zM1273 847h3v2h-3zM1276 846h1v3h-1zM1277 847h2v2h-2zM1279 846h1v4h-1zM1280 846h1v3h-1zM1281 846h5v2h-5zM1286 845h1v3h-1zM1287 845h5v2h-5zM1292 844h2v3h-2zM1294 844h5v2h-5zM1299 844h1v3h-1zM1300 843h1v3h-1zM1301 843h2v2h-2zM1303 842h1v3h-1zM1304 843h1v2h-1zM1305 842h1v3h-1zM1306 843h1v3h-1zM1307 843h1v2h-1zM1308 842h1v3h-1zM1309 842h3v2h-3zM1312 841h1v3h-1zM1313 842h1v2h-1zM1314 841h2v3h-2zM1316 841h6v2h-6zM1322 840h1v3h-1zM1323 840h2v2h-2zM1325 840h1v3h-1zM1326 840h1v2h-1zM1327 840h1v3h-1zM1328 840h1v2h-1zM1329 839h1v3h-1zM1330 839h1v4h-1zM1331 839h2v2h-2zM1333 839h1v3h-1zM1334 839h2v2h-2zM1336 838h1v2h-1zM1337 838h1v3h-1zM1338 838h2v2h-2zM1340 837h2v3h-2zM1342 837h5v2h-5zM1347 836h2v3h-2zM1349 836h2v2h-2zM1351 836h1v3h-1zM1352 836h1v2h-1zM1353 836h1v3h-1zM1354 834h1v3h-1zM1355 835h1v2h-1zM1356 834h2v3h-2zM1358 835h2v2h-2zM1360 833h1v3h-1zM1361 834h2v2h-2zM1363 833h2v3h-2zM1365 834h1v2h-1zM1366 833h1v3h-1zM1367 833h4v2h-4zM1371 833h1v21h-1zM1372 840h1v3h-1zM1373 840h1v2h-1zM1374 839h1v3h-1zM1375 838h1v3h-1zM1376 837h1v3h-1zM1377 835h1v4h-1zM1378 836h1v2h-1zM1379 835h1v2h-1zM1380 835h1v16h-1zM1381 840h1v17h-1zM1382 840h3v2h-3zM1385 839h1v3h-1zM1386 839h2v2h-2zM1388 839h1v3h-1zM1389 822h1v20h-1zM1390 822h1v7h-1zM1391 828h3v2h-3zM1394 827h1v3h-1zM1395 828h4v2h-4zM1399 828h2v3h-2zM1401 828h1v2h-1zM1402 827h1v3h-1zM1403 828h3v2h-3zM1406 827h1v3h-1zM1407 828h1v2h-1zM1408 827h1v3h-1zM1409 828h1v2h-1zM1410 828h1v21h-1zM1411 845h1v3h-1zM1412 844h1v3h-1zM1413 843h1v3h-1zM1414 842h1v3h-1zM1415 841h2v3h-2zM1417 841h1v2h-1zM1418 840h1v3h-1zM1419 840h3v2h-3zM1422 839h2v2h-2zM1424 838h1v3h-1zM1425 839h1v3h-1zM1426 838h1v2h-1zM1427 838h1v3h-1zM1428 837h3v3h-3zM1431 837h5v2h-5zM1436 837h1v3h-1zM1437 836h1v3h-1zM1438 836h1v2h-1zM1439 836h2v3h-2zM1441 836h3v2h-3zM1444 835h1v3h-1zM1445 834h1v3h-1zM1446 835h3v2h-3zM1449 835h1v3h-1zM1450 835h2v2h-2zM1452 834h4v2h-4zM1456 833h1v3h-1zM1457 834h2v2h-2zM1459 833h1v3h-1zM1460 833h2v2h-2zM1462 832h1v3h-1zM1463 833h2v2h-2zM1465 833h1v3h-1zM1466 832h1v3h-1zM1467 832h1v2h-1zM1468 832h2v3h-2zM1470 832h2v2h-2zM1472 831h3v3h-3zM1475 831h7v2h-7zM1482 830h1v2h-1zM1483 830h2v3h-2zM1485 829h1v3h-1zM1486 830h2v2h-2zM1488 829h2v3h-2zM1490 829h1v2h-1zM1491 829h2v3h-2zM1493 829h4v2h-4zM1497 827h1v3h-1zM1498 828h2v2h-2zM1500 828h1v3h-1zM1501 828h3v2h-3zM1504 827h3v3h-3zM1507 827h2v2h-2zM1509 826h1v3h-1zM1510 827h2v2h-2zM1512 826h2v3h-2zM1514 826h3v2h-3zM1517 826h1v3h-1zM1518 826h1v2h-1zM1519 824h1v4h-1zM1520 825h5v2h-5zM1525 820h1v7h-1zM1526 814h1v8h-1zM1527 810h1v7h-1zM1528 805h1v7h-1zM1529 805h1v3h-1zM1530 806h1v3h-1zM1531 808h1v2h-1zM1532 809h1v4h-1zM1533 810h1v3h-1zM1534 811h2v3h-2zM1536 812h1v3h-1zM1537 813h1v3h-1zM1538 814h2v2h-2zM1540 813h1v3h-1zM1541 815h1v2h-1zM1542 814h1v3h-1zM1543 815h2v2h-2zM1545 814h1v3h-1zM1546 813h1v3h-1zM1547 814h2v3h-2zM1549 814h1v2h-1zM1550 813h1v4h-1zM1551 813h6v2h-6zM1557 811h2v3h-2zM1559 812h2v2h-2zM1561 811h2v3h-2zM1563 812h1v2h-1zM1564 811h1v2h-1zM1565 810h2v3h-2zM1567 811h4v2h-4zM1571 809h2v3h-2zM1573 810h2v2h-2zM1575 810h1v3h-1zM1576 810h2v2h-2zM1578 809h1v3h-1zM1579 809h3v2h-3zM1582 808h1v3h-1zM1583 809h1v2h-1zM1584 808h1v3h-1zM1585 808h6v2h-6zM1591 807h1v4h-1zM1592 806h1v3h-1zM1593 807h2v2h-2zM1595 806h4v3h-4zM1599 806h1v2h-1zM1600 805h1v3h-1zM1601 806h2v2h-2zM1603 806h1v3h-1zM1604 805h3v3h-3zM1607 805h5v2h-5zM1612 803h1v4h-1zM1613 804h2v2h-2zM1615 803h1v3h-1zM1616 804h1v2h-1zM1617 804h1v3h-1zM1618 804h1v2h-1zM1619 802h1v4h-1zM1620 803h6v2h-6zM1626 802h1v4h-1zM1627 801h1v3h-1zM1628 802h1v2h-1zM1629 801h1v3h-1zM1630 802h1v2h-1zM1631 802h1v3h-1zM1632 802h1v2h-1zM1633 800h1v4h-1zM1634 801h1v3h-1zM1635 801h5v2h-5zM1640 800h6v2h-6zM1646 799h1v3h-1zM1647 799h1v2h-1zM1648 799h1v3h-1zM1649 799h3v2h-3zM1652 799h1v3h-1zM1653 798h1v3h-1zM1654 798h2v2h-2zM1656 798h1v3h-1zM1657 798h3v2h-3zM1660 797h1v2h-1zM1661 797h1v3h-1zM1662 796h1v3h-1zM1663 797h3v2h-3zM1666 796h1v3h-1zM1667 796h1v2h-1zM1668 795h1v3h-1zM1669 796h2v3h-2zM1671 796h2v2h-2zM1673 795h1v4h-1zM1674 795h3v2h-3zM1677 794h2v3h-2zM1679 795h1v3h-1zM1680 794h2v3h-2zM1682 794h5v2h-5zM1687 793h6v2h-6zM1693 792h1v3h-1zM1694 791h2v3h-2zM1696 792h3v2h-3zM1699 792h1v3h-1zM1700 791h1v3h-1zM1701 791h1v2h-1zM1702 791h1v3h-1zM1703 790h1v3h-1zM1704 791h2v2h-2zM1706 790h1v3h-1zM1707 790h6v2h-6zM1713 788h1v4h-1zM1714 788h1v3h-1zM1715 789h3v2h-3zM1718 788h1v3h-1zM1719 789h1v2h-1zM1720 788h1v3h-1zM1721 788h3v2h-3zM1724 788h1v3h-1zM1725 788h1v2h-1zM1726 787h1v3h-1zM1727 786h1v3h-1zM1728 787h1v2h-1zM1729 787h1v3h-1zM1730 786h1v3h-1zM1731 787h2v2h-2zM1733 785h1v4h-1zM1734 785h1v3h-1zM1735 786h1v2h-1zM1736 785h1v3h-1zM1737 786h3v2h-3zM1740 785h1v3h-1zM1741 785h6v2h-6zM1747 783h1v3h-1zM1748 784h3v2h-3z"/>
<text x="55.5" y="987.0" font-size="13.30" fill="#b8b8b8" text-anchor="middle">0 s</text>
<text x="230.3" y="987.0" font-size="13.30" fill="#b8b8b8" text-anchor="middle">4 ms</text>
<text x="405.1" y="987.0" font-size="13.30" fill="#b8b8b8" text-anchor="middle">8 ms</text>
<text x="579.9" y="987.0" font-size="13.30" fill="#b8b8b8" text-anchor="middle">12 ms</text>
<text x="754.7" y="987.0" font-size="13.30" fill="#b8b8b8" text-anchor="middle">16 ms</text>
<text x="929.5" y="987.0" font-size="13.30" fill="#b8b8b8" text-anchor="middle">20 ms</text>
<text x="1104.3" y="987.0" font-size="13.30" fill="#b8b8b8" text-anchor="middle">24 ms</text>
<text x="1279.1" y="987.0" font-size="13.30" fill="#b8b8b8" text-anchor="middle">28 ms</text>
<text x="1453.9" y="987.0" font-size="13.30" fill="#b8b8b8" text-anchor="middle">32 ms</text>
<text x="1628.7" y="987.0" font-size="13.30" fill="#b8b8b8" text-anchor="middle">36 ms</text>
<path d="M1710 65 L1742 65 Q1744 65 1744 67 L1744 98.5 Z" fill="#555"/>
<circle cx="1737" cy="71.3" r="4.3" fill="none" stroke="#aaa" stroke-width="1.6"/>
<line x1="1728" y1="81" x2="1733.8" y2="75.2" stroke="#aaa" stroke-width="2.2" stroke-linecap="round"/>
<path d="M45 57.8 L65.1 57.8 L55.4 67.4 Z" fill="#f39020"/>
<path d="M46.2 69.1 H63.8 V87.7 H59 L55.4 93 L51.8 87.7 H46.2 Z" fill="#000" stroke="#f39020" stroke-width="2.3"/>
<path d="M50.6 73.1 H59.8 V75.1 H56.2 V84 H54.2 V75.1 H50.6 Z" fill="#f39020"/>
<path d="M9 162.2 H78.2 L83.7 174.4 L78.2 186.7 H9 Q6.3 186.7 6.3 184.0 V164.9 Q6.3 162.2 9 162.2 Z" fill="#1e1c0a" stroke="#f0e830" stroke-width="2.0"/><line x1="32.8" y1="162.2" x2="32.8" y2="186.7" stroke="#f0e830" stroke-width="1.6"/><text x="11.0" y="178.0" font-size="12.00" fill="#f0e830">C 1</text><text x="45.4" y="178.0" font-size="12.00" fill="#f0e830" textLength="24.1" lengthAdjust="spacingAndGlyphs">20 V</text>
<text x="102.3" y="179.0" font-size="18.50" fill="#f0ea30" textLength="96.3" lengthAdjust="spacingAndGlyphs">U_loop,coil</text>
<path d="M9 396.4 H78.2 L83.7 408.5 L78.2 420.6 H9 Q6.3 420.6 6.3 417.9 V399.1 Q6.3 396.4 9 396.4 Z" fill="#121a08" stroke="#88d030" stroke-width="2.0"/><line x1="32.8" y1="396.4" x2="32.8" y2="420.6" stroke="#88d030" stroke-width="1.6"/><text x="11.0" y="412.0" font-size="12.00" fill="#88d030">C 4</text><text x="36.1" y="412.0" font-size="12.00" fill="#88d030" textLength="41.6" lengthAdjust="spacingAndGlyphs">200 mV</text>
<text x="102.0" y="412.0" font-size="18.50" fill="#88d03a" textLength="85.0" lengthAdjust="spacingAndGlyphs">U_Photod</text>
<path d="M9 722.9 H29 L41.6 735.2 L29 747.2 H9 Q6.3 747.2 6.3 744.5 V725.6 Q6.3 722.9 9 722.9 Z" fill="#201408" stroke="#e08a22" stroke-width="1.4"/>
<text x="13.1" y="737.7" font-size="12.00" fill="#e08a22" textLength="19.7" lengthAdjust="spacingAndGlyphs">M 1</text>
<line x1="42" y1="735.2" x2="55" y2="735.2" stroke="#f0922a" stroke-width="1.4"/>
<line x1="3" y1="735.2" x2="6" y2="735.2" stroke="#f0922a" stroke-width="1.4"/>
<text x="54.7" y="738.0" font-size="15.00" fill="#e8902c" textLength="26.3" lengthAdjust="spacingAndGlyphs">B_t</text>
<path d="M9 907 H29 L42 920 L29 932.8 H9 Q6 932.8 6 929.8 V910 Q6 907 9 907 Z" fill="#6e2a8a"/>
<text x="13.3" y="924.0" font-size="12.50" fill="#ffffff" textLength="20.6" lengthAdjust="spacingAndGlyphs">M 2</text>
<text x="57.0" y="925.5" font-size="15.00" fill="#7a2e9c" textLength="21.5" lengthAdjust="spacingAndGlyphs">I_p</text>
</g>
</svg>
</body></html>
